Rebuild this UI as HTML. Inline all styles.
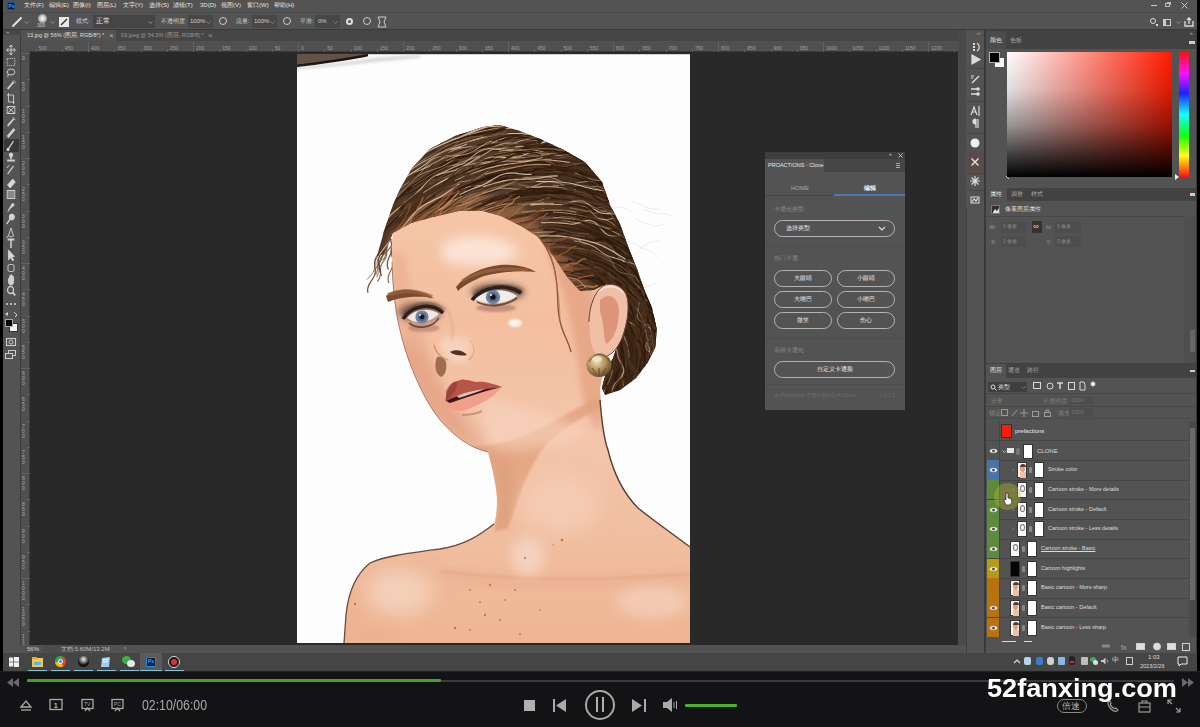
<!DOCTYPE html>
<html><head><meta charset="utf-8">
<style>
*{margin:0;padding:0;box-sizing:border-box}
html,body{width:1200px;height:727px;overflow:hidden;background:#000;font-family:"Liberation Sans",sans-serif;position:relative}
.a{position:absolute}
.t{position:absolute;white-space:nowrap;color:#d8d8d8;font-size:8px;line-height:10px}
</style></head><body>
<div class="a" style="left:3px;top:0px;width:1194px;height:672px;background:#535353;"></div>
<div class="a" style="left:3px;top:0px;width:1194px;height:12px;background:#535353;"></div>
<div class="a" style="left:3px;top:12px;width:1194px;height:1px;background:#4a4a4a;"></div>
<div class="a" style="left:7px;top:2px;width:8px;height:8px;background:#0d1e36;border:1px solid #1f4f80"></div>
<div class="t" style="left:8.5px;top:3px;font-size:5px;line-height:7px;color:#3aa0f0;font-weight:bold;line-height:6px">Ps</div>
<div class="t" style="left:24px;top:1px;font-size:6px;line-height:8px;color:#e6e6e6;">文件(F)</div>
<div class="t" style="left:49px;top:1px;font-size:6px;line-height:8px;color:#e6e6e6;">编辑(E)</div>
<div class="t" style="left:73px;top:1px;font-size:6px;line-height:8px;color:#e6e6e6;">图像(I)</div>
<div class="t" style="left:97px;top:1px;font-size:6px;line-height:8px;color:#e6e6e6;">图层(L)</div>
<div class="t" style="left:123px;top:1px;font-size:6px;line-height:8px;color:#e6e6e6;">文字(Y)</div>
<div class="t" style="left:149px;top:1px;font-size:6px;line-height:8px;color:#e6e6e6;">选择(S)</div>
<div class="t" style="left:173px;top:1px;font-size:6px;line-height:8px;color:#e6e6e6;">滤镜(T)</div>
<div class="t" style="left:200px;top:1px;font-size:6px;line-height:8px;color:#e6e6e6;">3D(D)</div>
<div class="t" style="left:221px;top:1px;font-size:6px;line-height:8px;color:#e6e6e6;">视图(V)</div>
<div class="t" style="left:247px;top:1px;font-size:6px;line-height:8px;color:#e6e6e6;">窗口(W)</div>
<div class="t" style="left:274px;top:1px;font-size:6px;line-height:8px;color:#e6e6e6;">帮助(H)</div>
<div class="a" style="left:1151px;top:5px;width:6px;height:1px;background:#cccccc;"></div>
<div class="a" style="left:1165px;top:3px;width:5px;height:4px;border:1px solid #bbb"></div>
<div class="a" style="left:1167px;top:2px;width:4px;height:3px;border-top:1px solid #bbb;border-right:1px solid #bbb"></div>
<svg class="a" style="left:1181px;top:2px" width="7" height="7"><path d="M0.5 0.5 L6.5 6.5 M6.5 0.5 L0.5 6.5" stroke="#c8c8c8" stroke-width="1"/></svg>
<div class="a" style="left:3px;top:13px;width:1194px;height:16px;background:#535353;"></div>
<div class="a" style="left:3px;top:29px;width:1194px;height:1px;background:#3a3a3a;"></div>
<svg class="a" style="left:11px;top:16px" width="12" height="12"><path d="M2 10 L4 8 L10 2" stroke="#e0e0e0" stroke-width="2" fill="none" stroke-linecap="round"/></svg>
<svg class="a" style="left:24px;top:21px" width="5" height="3"><path d="M0.5 0.5 L2.5 2.5 L4.5 0.5" stroke="#999" fill="none" stroke-width="0.9"/></svg>
<div class="a" style="left:38px;top:14px;width:9px;height:9px;border-radius:50%;background:radial-gradient(circle,#fff 0%,#ccc 40%,#666 100%)"></div>
<div class="t" style="left:37px;top:23px;font-size:5px;line-height:7px;color:#cfcfcf;line-height:5px">300</div>
<svg class="a" style="left:50px;top:21px" width="5" height="3"><path d="M0.5 0.5 L2.5 2.5 L4.5 0.5" stroke="#999" fill="none" stroke-width="0.9"/></svg>
<div class="a" style="left:59px;top:17px;width:10px;height:10px;background:#e8e8e8;"></div>
<svg class="a" style="left:59px;top:17px" width="10" height="10"><path d="M2 8 L8 2" stroke="#333" stroke-width="1.5"/></svg>
<div class="t" style="left:76px;top:17px;font-size:6px;line-height:8px;color:#cfcfcf;">模式:</div>
<div class="a" style="left:93px;top:15px;width:62px;height:13px;background:#454545;"></div>
<div class="t" style="left:96px;top:17px;font-size:6.5px;line-height:8.5px;color:#e8e8e8;">正常</div>
<svg class="a" style="left:148px;top:21px" width="5" height="3"><path d="M0.5 0.5 L2.5 2.5 L4.5 0.5" stroke="#999" fill="none" stroke-width="0.9"/></svg>
<div class="t" style="left:161px;top:17px;font-size:6px;line-height:8px;color:#cfcfcf;">不透明度:</div>
<div class="a" style="left:188px;top:15px;width:25px;height:13px;background:#474747;"></div>
<div class="t" style="left:190px;top:17px;font-size:6px;line-height:8px;color:#cfcfcf;">100%</div>
<svg class="a" style="left:206px;top:21px" width="5" height="3"><path d="M0.5 0.5 L2.5 2.5 L4.5 0.5" stroke="#888" fill="none" stroke-width="0.9"/></svg>
<div class="a" style="left:219px;top:17px;width:8px;height:8px;border-radius:50%;border:1.5px solid #ccc"></div>
<div class="t" style="left:236px;top:17px;font-size:6px;line-height:8px;color:#cfcfcf;">流量:</div>
<div class="a" style="left:252px;top:15px;width:25px;height:13px;background:#474747;"></div>
<div class="t" style="left:254px;top:17px;font-size:6px;line-height:8px;color:#cfcfcf;">100%</div>
<svg class="a" style="left:270px;top:21px" width="5" height="3"><path d="M0.5 0.5 L2.5 2.5 L4.5 0.5" stroke="#888" fill="none" stroke-width="0.9"/></svg>
<div class="a" style="left:283px;top:17px;width:8px;height:8px;border-radius:50%;border:1.5px solid #ccc"></div>
<div class="t" style="left:300px;top:17px;font-size:6px;line-height:8px;color:#cfcfcf;">平滑:</div>
<div class="a" style="left:315px;top:15px;width:25px;height:13px;background:#474747;"></div>
<div class="t" style="left:318px;top:17px;font-size:6px;line-height:8px;color:#cfcfcf;">0%</div>
<svg class="a" style="left:333px;top:21px" width="5" height="3"><path d="M0.5 0.5 L2.5 2.5 L4.5 0.5" stroke="#888" fill="none" stroke-width="0.9"/></svg>
<div class="a" style="left:346px;top:18px;width:7px;height:7px;border-radius:50%;border:2px solid #ddd"></div>
<div class="a" style="left:363px;top:17px;width:8px;height:8px;border-radius:50%;border:1.5px solid #ccc"></div>
<svg class="a" style="left:377px;top:16px" width="10" height="12"><path d="M1 1 L9 1 L7 6 L9 11 L1 11 L3 6Z" stroke="#ccc" stroke-width="1" fill="none"/></svg>
<div class="a" style="left:1150px;top:18px;width:6px;height:6px;border-radius:50%;border:1.5px solid #ddd"></div>
<div class="a" style="left:1156px;top:24px;width:2px;height:2px;background:#ddd;"></div>
<div class="a" style="left:1163px;top:19px;width:8px;height:7px;border:1px solid #ccc;border-left-width:3px"></div>
<svg class="a" style="left:1176px;top:21px" width="5" height="3"><path d="M0.5 0.5 L2.5 2.5 L4.5 0.5" stroke="#888" fill="none" stroke-width="0.9"/></svg>
<svg class="a" style="left:1184px;top:17px" width="10" height="10"><path d="M1 4 L1 9 L9 9 L9 4 M5 7 L5 1 M3 3 L5 1 L7 3" stroke="#ddd" stroke-width="1.3" fill="none"/></svg>
<div class="a" style="left:21px;top:30px;width:937px;height:11px;background:#464646;"></div>
<div class="a" style="left:21px;top:30px;width:95px;height:11px;background:#535353;"></div>
<div class="t" style="left:27px;top:31px;font-size:5.5px;line-height:7.5px;color:#dedede;line-height:9px">13.jpg @ 56% (图层, RGB/8*) *</div>
<div class="t" style="left:109px;top:31px;font-size:8px;line-height:10px;color:#bbb;line-height:9px">×</div>
<div class="t" style="left:121px;top:31px;font-size:5.5px;line-height:7.5px;color:#9a9a9a;line-height:9px">03.jpeg @ 54.3% (图层, RGB/8) *</div>
<div class="t" style="left:208px;top:31px;font-size:8px;line-height:10px;color:#999;line-height:9px">×</div>
<div class="a" style="left:21px;top:41px;width:937px;height:11px;background:#505050;"></div>
<div class="a" style="left:21px;top:51px;width:937px;height:1px;background:#3a3a3a;"></div>
<div class="a" style="left:21px;top:41px;width:9px;height:604px;background:#505050;"></div>
<div class="a" style="left:29px;top:52px;width:1px;height:593px;background:#3a3a3a;"></div>
<div class="a" style="left:35.5px;top:49px;width:1px;height:3px;background:#626262"></div>
<div class="t" style="left:38.5px;top:45px;font-size:5px;line-height:7px;color:#a0a0a0;line-height:6px">500</div>
<div class="a" style="left:40.8px;top:50px;width:1px;height:1px;background:#5a5a5a"></div>
<div class="a" style="left:46.0px;top:50px;width:1px;height:1px;background:#5a5a5a"></div>
<div class="a" style="left:51.2px;top:50px;width:1px;height:1px;background:#5a5a5a"></div>
<div class="a" style="left:56.5px;top:50px;width:1px;height:1px;background:#5a5a5a"></div>
<div class="a" style="left:61.8px;top:49px;width:1px;height:3px;background:#626262"></div>
<div class="t" style="left:64.75px;top:45px;font-size:5px;line-height:7px;color:#a0a0a0;line-height:6px">450</div>
<div class="a" style="left:67.0px;top:50px;width:1px;height:1px;background:#5a5a5a"></div>
<div class="a" style="left:72.2px;top:50px;width:1px;height:1px;background:#5a5a5a"></div>
<div class="a" style="left:77.5px;top:50px;width:1px;height:1px;background:#5a5a5a"></div>
<div class="a" style="left:82.8px;top:50px;width:1px;height:1px;background:#5a5a5a"></div>
<div class="a" style="left:88.0px;top:42px;width:1px;height:10px;background:#626262"></div>
<div class="t" style="left:91.0px;top:45px;font-size:5px;line-height:7px;color:#a0a0a0;line-height:6px">400</div>
<div class="a" style="left:93.2px;top:50px;width:1px;height:1px;background:#5a5a5a"></div>
<div class="a" style="left:98.5px;top:50px;width:1px;height:1px;background:#5a5a5a"></div>
<div class="a" style="left:103.8px;top:50px;width:1px;height:1px;background:#5a5a5a"></div>
<div class="a" style="left:109.0px;top:50px;width:1px;height:1px;background:#5a5a5a"></div>
<div class="a" style="left:114.2px;top:49px;width:1px;height:3px;background:#626262"></div>
<div class="t" style="left:117.25px;top:45px;font-size:5px;line-height:7px;color:#a0a0a0;line-height:6px">350</div>
<div class="a" style="left:119.5px;top:50px;width:1px;height:1px;background:#5a5a5a"></div>
<div class="a" style="left:124.8px;top:50px;width:1px;height:1px;background:#5a5a5a"></div>
<div class="a" style="left:130.0px;top:50px;width:1px;height:1px;background:#5a5a5a"></div>
<div class="a" style="left:135.2px;top:50px;width:1px;height:1px;background:#5a5a5a"></div>
<div class="a" style="left:140.5px;top:49px;width:1px;height:3px;background:#626262"></div>
<div class="t" style="left:143.5px;top:45px;font-size:5px;line-height:7px;color:#a0a0a0;line-height:6px">300</div>
<div class="a" style="left:145.8px;top:50px;width:1px;height:1px;background:#5a5a5a"></div>
<div class="a" style="left:151.0px;top:50px;width:1px;height:1px;background:#5a5a5a"></div>
<div class="a" style="left:156.2px;top:50px;width:1px;height:1px;background:#5a5a5a"></div>
<div class="a" style="left:161.5px;top:50px;width:1px;height:1px;background:#5a5a5a"></div>
<div class="a" style="left:166.8px;top:49px;width:1px;height:3px;background:#626262"></div>
<div class="t" style="left:169.75px;top:45px;font-size:5px;line-height:7px;color:#a0a0a0;line-height:6px">250</div>
<div class="a" style="left:172.0px;top:50px;width:1px;height:1px;background:#5a5a5a"></div>
<div class="a" style="left:177.2px;top:50px;width:1px;height:1px;background:#5a5a5a"></div>
<div class="a" style="left:182.5px;top:50px;width:1px;height:1px;background:#5a5a5a"></div>
<div class="a" style="left:187.8px;top:50px;width:1px;height:1px;background:#5a5a5a"></div>
<div class="a" style="left:193.0px;top:42px;width:1px;height:10px;background:#626262"></div>
<div class="t" style="left:196.0px;top:45px;font-size:5px;line-height:7px;color:#a0a0a0;line-height:6px">200</div>
<div class="a" style="left:198.2px;top:50px;width:1px;height:1px;background:#5a5a5a"></div>
<div class="a" style="left:203.5px;top:50px;width:1px;height:1px;background:#5a5a5a"></div>
<div class="a" style="left:208.8px;top:50px;width:1px;height:1px;background:#5a5a5a"></div>
<div class="a" style="left:214.0px;top:50px;width:1px;height:1px;background:#5a5a5a"></div>
<div class="a" style="left:219.2px;top:49px;width:1px;height:3px;background:#626262"></div>
<div class="t" style="left:222.25px;top:45px;font-size:5px;line-height:7px;color:#a0a0a0;line-height:6px">150</div>
<div class="a" style="left:224.5px;top:50px;width:1px;height:1px;background:#5a5a5a"></div>
<div class="a" style="left:229.8px;top:50px;width:1px;height:1px;background:#5a5a5a"></div>
<div class="a" style="left:235.0px;top:50px;width:1px;height:1px;background:#5a5a5a"></div>
<div class="a" style="left:240.2px;top:50px;width:1px;height:1px;background:#5a5a5a"></div>
<div class="a" style="left:245.5px;top:49px;width:1px;height:3px;background:#626262"></div>
<div class="t" style="left:248.5px;top:45px;font-size:5px;line-height:7px;color:#a0a0a0;line-height:6px">100</div>
<div class="a" style="left:250.8px;top:50px;width:1px;height:1px;background:#5a5a5a"></div>
<div class="a" style="left:256.0px;top:50px;width:1px;height:1px;background:#5a5a5a"></div>
<div class="a" style="left:261.2px;top:50px;width:1px;height:1px;background:#5a5a5a"></div>
<div class="a" style="left:266.5px;top:50px;width:1px;height:1px;background:#5a5a5a"></div>
<div class="a" style="left:271.8px;top:49px;width:1px;height:3px;background:#626262"></div>
<div class="t" style="left:274.75px;top:45px;font-size:5px;line-height:7px;color:#a0a0a0;line-height:6px">50</div>
<div class="a" style="left:277.0px;top:50px;width:1px;height:1px;background:#5a5a5a"></div>
<div class="a" style="left:282.2px;top:50px;width:1px;height:1px;background:#5a5a5a"></div>
<div class="a" style="left:287.5px;top:50px;width:1px;height:1px;background:#5a5a5a"></div>
<div class="a" style="left:292.8px;top:50px;width:1px;height:1px;background:#5a5a5a"></div>
<div class="a" style="left:298.0px;top:42px;width:1px;height:10px;background:#626262"></div>
<div class="t" style="left:301.0px;top:45px;font-size:5px;line-height:7px;color:#a0a0a0;line-height:6px">0</div>
<div class="a" style="left:303.2px;top:50px;width:1px;height:1px;background:#5a5a5a"></div>
<div class="a" style="left:308.5px;top:50px;width:1px;height:1px;background:#5a5a5a"></div>
<div class="a" style="left:313.8px;top:50px;width:1px;height:1px;background:#5a5a5a"></div>
<div class="a" style="left:319.0px;top:50px;width:1px;height:1px;background:#5a5a5a"></div>
<div class="a" style="left:324.2px;top:49px;width:1px;height:3px;background:#626262"></div>
<div class="t" style="left:327.25px;top:45px;font-size:5px;line-height:7px;color:#a0a0a0;line-height:6px">50</div>
<div class="a" style="left:329.5px;top:50px;width:1px;height:1px;background:#5a5a5a"></div>
<div class="a" style="left:334.8px;top:50px;width:1px;height:1px;background:#5a5a5a"></div>
<div class="a" style="left:340.0px;top:50px;width:1px;height:1px;background:#5a5a5a"></div>
<div class="a" style="left:345.2px;top:50px;width:1px;height:1px;background:#5a5a5a"></div>
<div class="a" style="left:350.5px;top:49px;width:1px;height:3px;background:#626262"></div>
<div class="t" style="left:353.5px;top:45px;font-size:5px;line-height:7px;color:#a0a0a0;line-height:6px">100</div>
<div class="a" style="left:355.8px;top:50px;width:1px;height:1px;background:#5a5a5a"></div>
<div class="a" style="left:361.0px;top:50px;width:1px;height:1px;background:#5a5a5a"></div>
<div class="a" style="left:366.2px;top:50px;width:1px;height:1px;background:#5a5a5a"></div>
<div class="a" style="left:371.5px;top:50px;width:1px;height:1px;background:#5a5a5a"></div>
<div class="a" style="left:376.8px;top:49px;width:1px;height:3px;background:#626262"></div>
<div class="t" style="left:379.75px;top:45px;font-size:5px;line-height:7px;color:#a0a0a0;line-height:6px">150</div>
<div class="a" style="left:382.0px;top:50px;width:1px;height:1px;background:#5a5a5a"></div>
<div class="a" style="left:387.2px;top:50px;width:1px;height:1px;background:#5a5a5a"></div>
<div class="a" style="left:392.5px;top:50px;width:1px;height:1px;background:#5a5a5a"></div>
<div class="a" style="left:397.8px;top:50px;width:1px;height:1px;background:#5a5a5a"></div>
<div class="a" style="left:403.0px;top:42px;width:1px;height:10px;background:#626262"></div>
<div class="t" style="left:406.0px;top:45px;font-size:5px;line-height:7px;color:#a0a0a0;line-height:6px">200</div>
<div class="a" style="left:408.2px;top:50px;width:1px;height:1px;background:#5a5a5a"></div>
<div class="a" style="left:413.5px;top:50px;width:1px;height:1px;background:#5a5a5a"></div>
<div class="a" style="left:418.8px;top:50px;width:1px;height:1px;background:#5a5a5a"></div>
<div class="a" style="left:424.0px;top:50px;width:1px;height:1px;background:#5a5a5a"></div>
<div class="a" style="left:429.2px;top:49px;width:1px;height:3px;background:#626262"></div>
<div class="t" style="left:432.25px;top:45px;font-size:5px;line-height:7px;color:#a0a0a0;line-height:6px">250</div>
<div class="a" style="left:434.5px;top:50px;width:1px;height:1px;background:#5a5a5a"></div>
<div class="a" style="left:439.8px;top:50px;width:1px;height:1px;background:#5a5a5a"></div>
<div class="a" style="left:445.0px;top:50px;width:1px;height:1px;background:#5a5a5a"></div>
<div class="a" style="left:450.2px;top:50px;width:1px;height:1px;background:#5a5a5a"></div>
<div class="a" style="left:455.5px;top:49px;width:1px;height:3px;background:#626262"></div>
<div class="t" style="left:458.5px;top:45px;font-size:5px;line-height:7px;color:#a0a0a0;line-height:6px">300</div>
<div class="a" style="left:460.8px;top:50px;width:1px;height:1px;background:#5a5a5a"></div>
<div class="a" style="left:466.0px;top:50px;width:1px;height:1px;background:#5a5a5a"></div>
<div class="a" style="left:471.2px;top:50px;width:1px;height:1px;background:#5a5a5a"></div>
<div class="a" style="left:476.5px;top:50px;width:1px;height:1px;background:#5a5a5a"></div>
<div class="a" style="left:481.8px;top:49px;width:1px;height:3px;background:#626262"></div>
<div class="t" style="left:484.75px;top:45px;font-size:5px;line-height:7px;color:#a0a0a0;line-height:6px">350</div>
<div class="a" style="left:487.0px;top:50px;width:1px;height:1px;background:#5a5a5a"></div>
<div class="a" style="left:492.2px;top:50px;width:1px;height:1px;background:#5a5a5a"></div>
<div class="a" style="left:497.5px;top:50px;width:1px;height:1px;background:#5a5a5a"></div>
<div class="a" style="left:502.8px;top:50px;width:1px;height:1px;background:#5a5a5a"></div>
<div class="a" style="left:508.0px;top:42px;width:1px;height:10px;background:#626262"></div>
<div class="t" style="left:511.0px;top:45px;font-size:5px;line-height:7px;color:#a0a0a0;line-height:6px">400</div>
<div class="a" style="left:513.2px;top:50px;width:1px;height:1px;background:#5a5a5a"></div>
<div class="a" style="left:518.5px;top:50px;width:1px;height:1px;background:#5a5a5a"></div>
<div class="a" style="left:523.8px;top:50px;width:1px;height:1px;background:#5a5a5a"></div>
<div class="a" style="left:529.0px;top:50px;width:1px;height:1px;background:#5a5a5a"></div>
<div class="a" style="left:534.2px;top:49px;width:1px;height:3px;background:#626262"></div>
<div class="t" style="left:537.25px;top:45px;font-size:5px;line-height:7px;color:#a0a0a0;line-height:6px">450</div>
<div class="a" style="left:539.5px;top:50px;width:1px;height:1px;background:#5a5a5a"></div>
<div class="a" style="left:544.8px;top:50px;width:1px;height:1px;background:#5a5a5a"></div>
<div class="a" style="left:550.0px;top:50px;width:1px;height:1px;background:#5a5a5a"></div>
<div class="a" style="left:555.2px;top:50px;width:1px;height:1px;background:#5a5a5a"></div>
<div class="a" style="left:560.5px;top:49px;width:1px;height:3px;background:#626262"></div>
<div class="t" style="left:563.5px;top:45px;font-size:5px;line-height:7px;color:#a0a0a0;line-height:6px">500</div>
<div class="a" style="left:565.8px;top:50px;width:1px;height:1px;background:#5a5a5a"></div>
<div class="a" style="left:571.0px;top:50px;width:1px;height:1px;background:#5a5a5a"></div>
<div class="a" style="left:576.2px;top:50px;width:1px;height:1px;background:#5a5a5a"></div>
<div class="a" style="left:581.5px;top:50px;width:1px;height:1px;background:#5a5a5a"></div>
<div class="a" style="left:586.8px;top:49px;width:1px;height:3px;background:#626262"></div>
<div class="t" style="left:589.75px;top:45px;font-size:5px;line-height:7px;color:#a0a0a0;line-height:6px">550</div>
<div class="a" style="left:592.0px;top:50px;width:1px;height:1px;background:#5a5a5a"></div>
<div class="a" style="left:597.2px;top:50px;width:1px;height:1px;background:#5a5a5a"></div>
<div class="a" style="left:602.5px;top:50px;width:1px;height:1px;background:#5a5a5a"></div>
<div class="a" style="left:607.8px;top:50px;width:1px;height:1px;background:#5a5a5a"></div>
<div class="a" style="left:613.0px;top:42px;width:1px;height:10px;background:#626262"></div>
<div class="t" style="left:616.0px;top:45px;font-size:5px;line-height:7px;color:#a0a0a0;line-height:6px">600</div>
<div class="a" style="left:618.2px;top:50px;width:1px;height:1px;background:#5a5a5a"></div>
<div class="a" style="left:623.5px;top:50px;width:1px;height:1px;background:#5a5a5a"></div>
<div class="a" style="left:628.8px;top:50px;width:1px;height:1px;background:#5a5a5a"></div>
<div class="a" style="left:634.0px;top:50px;width:1px;height:1px;background:#5a5a5a"></div>
<div class="a" style="left:639.2px;top:49px;width:1px;height:3px;background:#626262"></div>
<div class="t" style="left:642.25px;top:45px;font-size:5px;line-height:7px;color:#a0a0a0;line-height:6px">650</div>
<div class="a" style="left:644.5px;top:50px;width:1px;height:1px;background:#5a5a5a"></div>
<div class="a" style="left:649.8px;top:50px;width:1px;height:1px;background:#5a5a5a"></div>
<div class="a" style="left:655.0px;top:50px;width:1px;height:1px;background:#5a5a5a"></div>
<div class="a" style="left:660.2px;top:50px;width:1px;height:1px;background:#5a5a5a"></div>
<div class="a" style="left:665.5px;top:49px;width:1px;height:3px;background:#626262"></div>
<div class="t" style="left:668.5px;top:45px;font-size:5px;line-height:7px;color:#a0a0a0;line-height:6px">700</div>
<div class="a" style="left:670.8px;top:50px;width:1px;height:1px;background:#5a5a5a"></div>
<div class="a" style="left:676.0px;top:50px;width:1px;height:1px;background:#5a5a5a"></div>
<div class="a" style="left:681.2px;top:50px;width:1px;height:1px;background:#5a5a5a"></div>
<div class="a" style="left:686.5px;top:50px;width:1px;height:1px;background:#5a5a5a"></div>
<div class="a" style="left:691.8px;top:49px;width:1px;height:3px;background:#626262"></div>
<div class="t" style="left:694.75px;top:45px;font-size:5px;line-height:7px;color:#a0a0a0;line-height:6px">750</div>
<div class="a" style="left:697.0px;top:50px;width:1px;height:1px;background:#5a5a5a"></div>
<div class="a" style="left:702.2px;top:50px;width:1px;height:1px;background:#5a5a5a"></div>
<div class="a" style="left:707.5px;top:50px;width:1px;height:1px;background:#5a5a5a"></div>
<div class="a" style="left:712.8px;top:50px;width:1px;height:1px;background:#5a5a5a"></div>
<div class="a" style="left:718.0px;top:42px;width:1px;height:10px;background:#626262"></div>
<div class="t" style="left:721.0px;top:45px;font-size:5px;line-height:7px;color:#a0a0a0;line-height:6px">800</div>
<div class="a" style="left:723.2px;top:50px;width:1px;height:1px;background:#5a5a5a"></div>
<div class="a" style="left:728.5px;top:50px;width:1px;height:1px;background:#5a5a5a"></div>
<div class="a" style="left:733.8px;top:50px;width:1px;height:1px;background:#5a5a5a"></div>
<div class="a" style="left:739.0px;top:50px;width:1px;height:1px;background:#5a5a5a"></div>
<div class="a" style="left:744.2px;top:49px;width:1px;height:3px;background:#626262"></div>
<div class="t" style="left:747.25px;top:45px;font-size:5px;line-height:7px;color:#a0a0a0;line-height:6px">850</div>
<div class="a" style="left:749.5px;top:50px;width:1px;height:1px;background:#5a5a5a"></div>
<div class="a" style="left:754.8px;top:50px;width:1px;height:1px;background:#5a5a5a"></div>
<div class="a" style="left:760.0px;top:50px;width:1px;height:1px;background:#5a5a5a"></div>
<div class="a" style="left:765.2px;top:50px;width:1px;height:1px;background:#5a5a5a"></div>
<div class="a" style="left:770.5px;top:49px;width:1px;height:3px;background:#626262"></div>
<div class="t" style="left:773.5px;top:45px;font-size:5px;line-height:7px;color:#a0a0a0;line-height:6px">900</div>
<div class="a" style="left:775.8px;top:50px;width:1px;height:1px;background:#5a5a5a"></div>
<div class="a" style="left:781.0px;top:50px;width:1px;height:1px;background:#5a5a5a"></div>
<div class="a" style="left:786.2px;top:50px;width:1px;height:1px;background:#5a5a5a"></div>
<div class="a" style="left:791.5px;top:50px;width:1px;height:1px;background:#5a5a5a"></div>
<div class="a" style="left:796.8px;top:49px;width:1px;height:3px;background:#626262"></div>
<div class="t" style="left:799.75px;top:45px;font-size:5px;line-height:7px;color:#a0a0a0;line-height:6px">950</div>
<div class="a" style="left:802.0px;top:50px;width:1px;height:1px;background:#5a5a5a"></div>
<div class="a" style="left:807.2px;top:50px;width:1px;height:1px;background:#5a5a5a"></div>
<div class="a" style="left:812.5px;top:50px;width:1px;height:1px;background:#5a5a5a"></div>
<div class="a" style="left:817.8px;top:50px;width:1px;height:1px;background:#5a5a5a"></div>
<div class="a" style="left:823.0px;top:42px;width:1px;height:10px;background:#626262"></div>
<div class="t" style="left:826.0px;top:45px;font-size:5px;line-height:7px;color:#a0a0a0;line-height:6px">1000</div>
<div class="a" style="left:828.2px;top:50px;width:1px;height:1px;background:#5a5a5a"></div>
<div class="a" style="left:833.5px;top:50px;width:1px;height:1px;background:#5a5a5a"></div>
<div class="a" style="left:838.8px;top:50px;width:1px;height:1px;background:#5a5a5a"></div>
<div class="a" style="left:844.0px;top:50px;width:1px;height:1px;background:#5a5a5a"></div>
<div class="a" style="left:849.2px;top:49px;width:1px;height:3px;background:#626262"></div>
<div class="t" style="left:852.25px;top:45px;font-size:5px;line-height:7px;color:#a0a0a0;line-height:6px">1050</div>
<div class="a" style="left:854.5px;top:50px;width:1px;height:1px;background:#5a5a5a"></div>
<div class="a" style="left:859.8px;top:50px;width:1px;height:1px;background:#5a5a5a"></div>
<div class="a" style="left:865.0px;top:50px;width:1px;height:1px;background:#5a5a5a"></div>
<div class="a" style="left:870.2px;top:50px;width:1px;height:1px;background:#5a5a5a"></div>
<div class="a" style="left:875.5px;top:49px;width:1px;height:3px;background:#626262"></div>
<div class="t" style="left:878.5px;top:45px;font-size:5px;line-height:7px;color:#a0a0a0;line-height:6px">1100</div>
<div class="a" style="left:880.8px;top:50px;width:1px;height:1px;background:#5a5a5a"></div>
<div class="a" style="left:886.0px;top:50px;width:1px;height:1px;background:#5a5a5a"></div>
<div class="a" style="left:891.2px;top:50px;width:1px;height:1px;background:#5a5a5a"></div>
<div class="a" style="left:896.5px;top:50px;width:1px;height:1px;background:#5a5a5a"></div>
<div class="a" style="left:901.8px;top:49px;width:1px;height:3px;background:#626262"></div>
<div class="t" style="left:904.75px;top:45px;font-size:5px;line-height:7px;color:#a0a0a0;line-height:6px">1150</div>
<div class="a" style="left:907.0px;top:50px;width:1px;height:1px;background:#5a5a5a"></div>
<div class="a" style="left:912.2px;top:50px;width:1px;height:1px;background:#5a5a5a"></div>
<div class="a" style="left:917.5px;top:50px;width:1px;height:1px;background:#5a5a5a"></div>
<div class="a" style="left:922.8px;top:50px;width:1px;height:1px;background:#5a5a5a"></div>
<div class="a" style="left:928.0px;top:42px;width:1px;height:10px;background:#626262"></div>
<div class="t" style="left:931.0px;top:45px;font-size:5px;line-height:7px;color:#a0a0a0;line-height:6px">1200</div>
<div class="a" style="left:933.2px;top:50px;width:1px;height:1px;background:#5a5a5a"></div>
<div class="a" style="left:938.5px;top:50px;width:1px;height:1px;background:#5a5a5a"></div>
<div class="a" style="left:943.8px;top:50px;width:1px;height:1px;background:#5a5a5a"></div>
<div class="a" style="left:949.0px;top:50px;width:1px;height:1px;background:#5a5a5a"></div>
<div class="a" style="left:954.2px;top:49px;width:1px;height:3px;background:#626262"></div>
<div class="t" style="left:957.25px;top:45px;font-size:5px;line-height:7px;color:#a0a0a0;line-height:6px">1250</div>
<div class="a" style="left:21px;top:53.0px;width:9px;height:1px;background:#626262"></div>
<div class="t" style="left:22px;top:56.0px;font-size:5px;line-height:5px;color:#a8a8a8;width:5px;white-space:normal;word-break:break-all">0</div>
<div class="a" style="left:27px;top:79.2px;width:3px;height:1px;background:#626262"></div>
<div class="t" style="left:22px;top:82.2px;font-size:5px;line-height:5px;color:#a8a8a8;width:5px;white-space:normal;word-break:break-all">50</div>
<div class="a" style="left:27px;top:105.5px;width:3px;height:1px;background:#626262"></div>
<div class="t" style="left:22px;top:108.5px;font-size:5px;line-height:5px;color:#a8a8a8;width:5px;white-space:normal;word-break:break-all">100</div>
<div class="a" style="left:27px;top:131.8px;width:3px;height:1px;background:#626262"></div>
<div class="t" style="left:22px;top:134.8px;font-size:5px;line-height:5px;color:#a8a8a8;width:5px;white-space:normal;word-break:break-all">150</div>
<div class="a" style="left:21px;top:158.0px;width:9px;height:1px;background:#626262"></div>
<div class="t" style="left:22px;top:161.0px;font-size:5px;line-height:5px;color:#a8a8a8;width:5px;white-space:normal;word-break:break-all">200</div>
<div class="a" style="left:27px;top:184.2px;width:3px;height:1px;background:#626262"></div>
<div class="t" style="left:22px;top:187.2px;font-size:5px;line-height:5px;color:#a8a8a8;width:5px;white-space:normal;word-break:break-all">250</div>
<div class="a" style="left:27px;top:210.5px;width:3px;height:1px;background:#626262"></div>
<div class="t" style="left:22px;top:213.5px;font-size:5px;line-height:5px;color:#a8a8a8;width:5px;white-space:normal;word-break:break-all">300</div>
<div class="a" style="left:27px;top:236.8px;width:3px;height:1px;background:#626262"></div>
<div class="t" style="left:22px;top:239.8px;font-size:5px;line-height:5px;color:#a8a8a8;width:5px;white-space:normal;word-break:break-all">350</div>
<div class="a" style="left:21px;top:263.0px;width:9px;height:1px;background:#626262"></div>
<div class="t" style="left:22px;top:266.0px;font-size:5px;line-height:5px;color:#a8a8a8;width:5px;white-space:normal;word-break:break-all">400</div>
<div class="a" style="left:27px;top:289.2px;width:3px;height:1px;background:#626262"></div>
<div class="t" style="left:22px;top:292.2px;font-size:5px;line-height:5px;color:#a8a8a8;width:5px;white-space:normal;word-break:break-all">450</div>
<div class="a" style="left:27px;top:315.5px;width:3px;height:1px;background:#626262"></div>
<div class="t" style="left:22px;top:318.5px;font-size:5px;line-height:5px;color:#a8a8a8;width:5px;white-space:normal;word-break:break-all">500</div>
<div class="a" style="left:27px;top:341.8px;width:3px;height:1px;background:#626262"></div>
<div class="t" style="left:22px;top:344.8px;font-size:5px;line-height:5px;color:#a8a8a8;width:5px;white-space:normal;word-break:break-all">550</div>
<div class="a" style="left:21px;top:368.0px;width:9px;height:1px;background:#626262"></div>
<div class="t" style="left:22px;top:371.0px;font-size:5px;line-height:5px;color:#a8a8a8;width:5px;white-space:normal;word-break:break-all">600</div>
<div class="a" style="left:27px;top:394.2px;width:3px;height:1px;background:#626262"></div>
<div class="t" style="left:22px;top:397.2px;font-size:5px;line-height:5px;color:#a8a8a8;width:5px;white-space:normal;word-break:break-all">650</div>
<div class="a" style="left:27px;top:420.5px;width:3px;height:1px;background:#626262"></div>
<div class="t" style="left:22px;top:423.5px;font-size:5px;line-height:5px;color:#a8a8a8;width:5px;white-space:normal;word-break:break-all">700</div>
<div class="a" style="left:27px;top:446.8px;width:3px;height:1px;background:#626262"></div>
<div class="t" style="left:22px;top:449.8px;font-size:5px;line-height:5px;color:#a8a8a8;width:5px;white-space:normal;word-break:break-all">750</div>
<div class="a" style="left:21px;top:473.0px;width:9px;height:1px;background:#626262"></div>
<div class="t" style="left:22px;top:476.0px;font-size:5px;line-height:5px;color:#a8a8a8;width:5px;white-space:normal;word-break:break-all">800</div>
<div class="a" style="left:27px;top:499.2px;width:3px;height:1px;background:#626262"></div>
<div class="t" style="left:22px;top:502.2px;font-size:5px;line-height:5px;color:#a8a8a8;width:5px;white-space:normal;word-break:break-all">850</div>
<div class="a" style="left:27px;top:525.5px;width:3px;height:1px;background:#626262"></div>
<div class="t" style="left:22px;top:528.5px;font-size:5px;line-height:5px;color:#a8a8a8;width:5px;white-space:normal;word-break:break-all">900</div>
<div class="a" style="left:27px;top:551.8px;width:3px;height:1px;background:#626262"></div>
<div class="t" style="left:22px;top:554.8px;font-size:5px;line-height:5px;color:#a8a8a8;width:5px;white-space:normal;word-break:break-all">950</div>
<div class="a" style="left:21px;top:578.0px;width:9px;height:1px;background:#626262"></div>
<div class="t" style="left:22px;top:581.0px;font-size:5px;line-height:5px;color:#a8a8a8;width:5px;white-space:normal;word-break:break-all">1000</div>
<div class="a" style="left:27px;top:604.2px;width:3px;height:1px;background:#626262"></div>
<div class="t" style="left:22px;top:607.2px;font-size:5px;line-height:5px;color:#a8a8a8;width:5px;white-space:normal;word-break:break-all">1050</div>
<div class="a" style="left:27px;top:630.5px;width:3px;height:1px;background:#626262"></div>
<div class="t" style="left:22px;top:633.5px;font-size:5px;line-height:5px;color:#a8a8a8;width:5px;white-space:normal;word-break:break-all">1100</div>
<div class="a" style="left:30px;top:52px;width:928px;height:593px;background:#292929;"></div>
<svg class="a" style="left:297px;top:53px" width="393" height="590" viewBox="297 53 393 590">
<defs>
 <linearGradient id="skinG" x1="0" y1="0" x2="0" y2="1">
  <stop offset="0" stop-color="#f6c7a9"/>
  <stop offset="0.3" stop-color="#f3bf9f"/>
  <stop offset="0.55" stop-color="#f3c6ac"/>
  <stop offset="1" stop-color="#eeb593"/>
 </linearGradient>
 <radialGradient id="hairG" cx="0.35" cy="0.3" r="0.8">
  <stop offset="0" stop-color="#5e4230"/>
  <stop offset="0.55" stop-color="#4a3020"/>
  <stop offset="1" stop-color="#36200f"/>
 </radialGradient>
 <radialGradient id="ringG" cx="0.4" cy="0.35" r="0.7">
  <stop offset="0" stop-color="#efe2bc"/>
  <stop offset="0.5" stop-color="#b89460"/>
  <stop offset="1" stop-color="#5a4428"/>
 </radialGradient>
 <clipPath id="hairClip"><path d="M377.0 256.0 L381.0 242.0 L386.0 225.0 L393.0 205.0 L400.0 189.0 L412.0 168.0 L430.0 149.0 L455.0 136.0 L483.0 127.0 L500.0 125.0 L520.0 131.0 L540.0 139.0 L562.0 149.0 L585.0 162.0 L602.0 182.0 L610.0 205.0 L620.0 224.0 L629.0 249.0 L637.0 269.0 L644.0 289.0 L652.0 308.0 L657.0 330.0 L655.0 348.0 L648.0 362.0 L636.0 378.0 L620.0 390.0 L605.0 395.0 L602.0 388.0 L606.0 372.0 L613.0 358.0 L621.0 335.0 L627.0 305.0 L621.0 289.0 L606.0 284.0 L594.0 290.0 L580.0 291.0 L568.0 278.0 L556.0 260.0 L540.0 238.0 L521.0 226.0 L501.0 216.0 L483.0 211.0 L459.0 211.0 L433.0 217.0 L411.0 223.0 L393.0 233.0 L388.0 245.0 L384.0 254.0 Z"/></clipPath>
 <clipPath id="skinClip"><path d="M392 240 L392 268 C393 300 398 330 409 361 C418 385 428 405 440 420 C455 437 470 448 488 452 C493 470 497 490 497 500 C497 510 496 518 494 524 C480 535 465 545 440 549 C410 553 385 556 370 563 C355 575 348 595 346 615 L344 643 L690 643 L690 547 C670 532 650 518 638 508 C625 495 614 475 608 450 C604 430 601 415 600 388 L606 360 L612 330 L615 300 L610 270 L590 240 L560 210 L510 190 L470 185 L430 195 L398 215 Z"/></clipPath>
 <filter id="bl05" x="-20%" y="-20%" width="140%" height="140%"><feGaussianBlur stdDeviation="0.5"/></filter>
 <filter id="bl1" x="-20%" y="-20%" width="140%" height="140%"><feGaussianBlur stdDeviation="1"/></filter>
 <filter id="bl3" x="-50%" y="-50%" width="200%" height="200%"><feGaussianBlur stdDeviation="3"/></filter>
 <filter id="bl6" x="-50%" y="-50%" width="200%" height="200%"><feGaussianBlur stdDeviation="6"/></filter>
 <filter id="bl10" x="-50%" y="-50%" width="200%" height="200%"><feGaussianBlur stdDeviation="10"/></filter>
</defs>
<rect x="297" y="53" width="393" height="590" fill="#fdfdfd"/>
<rect x="297" y="53" width="393" height="1.2" fill="#2a2a2a"/>
<path d="M297 54 L368 54 L345 59.5 L297 66 Z" fill="#625248"/>
<path d="M297 66 C320 63 345 60 368 55" fill="none" stroke="#1a1412" stroke-width="2.6"/>
<path d="M297 67 C330 64 350 62 375 57 L420 55 L420 58 C380 62 340 66 297 70Z" fill="#b8b8b8" opacity="0.45" filter="url(#bl1)"/>
<path d="M386.9 243.7 L385.5 247.3 L382.7 250.8 L379.3 254.4 L376.6 258.0 L375.2 261.6 L374.9 265.2 L374.5 268.8 L373.1 272.4 L370.3 276.0 L366.9 279.5" fill="none" stroke="#7a5a40" stroke-width="0.93" opacity="0.85"/>
<path d="M387.7 245.6 L387.0 249.3 L387.0 253.0 L386.5 256.7 L384.7 260.3 L381.7 264.0 L378.7 267.7 L376.6 271.4 L375.9 275.0" fill="none" stroke="#7a5a40" stroke-width="0.86" opacity="0.85"/>
<path d="M391.5 247.4 L390.9 251.4 L391.6 255.4 L392.8 259.4 L393.2 263.3 L392.3 267.3 L390.4 271.3 L388.6 275.3 L388.0 279.2 L388.8 283.2" fill="none" stroke="#7a5a40" stroke-width="1.24" opacity="0.85"/>
<path d="M391.8 229.8 L390.3 233.7 L390.1 237.7 L391.1 241.7 L392.2 245.7 L392.3 249.7 L390.9 253.6 L388.9 257.6 L387.5 261.6 L387.3 265.6 L388.3 269.6" fill="none" stroke="#5a3e2a" stroke-width="1.34" opacity="0.85"/>
<path d="M385.2 244.5 L386.2 248.5 L386.6 252.4 L385.8 256.4 L383.7 260.3 L381.6 264.3 L380.4 268.2 L380.7 272.2 L381.6 276.1" fill="none" stroke="#4a3020" stroke-width="0.80" opacity="0.85"/>
<path d="M382.1 246.3 L380.6 250.2 L378.1 254.1 L375.8 258.0 L374.6 261.8 L374.7 265.7 L375.3 269.6 L375.2 273.5 L373.6 277.3 L371.1 281.2 L368.8 285.1 L367.6 289.0 L367.8 292.8" fill="none" stroke="#5a3e2a" stroke-width="1.30" opacity="0.85"/>
<path d="M385.1 234.4 L385.0 238.3 L385.7 242.3 L386.2 246.2 L385.4 250.1 L383.3 254.0 L380.9 257.9 L379.4 261.9 L379.3 265.8 L380.1 269.7 L380.5 273.6 L379.7 277.5 L377.6 281.4" fill="none" stroke="#5a3e2a" stroke-width="1.08" opacity="0.85"/>
<path d="M392.0 238.8 L388.9 242.4 L387.0 245.9 L386.3 249.5 L386.1 253.1 L385.0 256.6 L382.6 260.2" fill="none" stroke="#7a5a40" stroke-width="0.95" opacity="0.85"/>
<path d="M392.8 241.2 L391.9 244.7 L389.7 248.3 L386.4 251.8 L383.1 255.3 L381.0 258.9 L380.2 262.4" fill="none" stroke="#7a5a40" stroke-width="1.34" opacity="0.85"/>
<path d="M384.5 230.4 L383.3 234.3 L383.4 238.2 L384.1 242.1 L384.2 246.1 L383.0 250.0 L380.7 253.9 L378.4 257.8 L377.1 261.7 L377.3 265.6 L378.0 269.5 L378.1 273.4 L376.8 277.3" fill="none" stroke="#5a3e2a" stroke-width="0.89" opacity="0.85"/>
<path d="M390.2 228.3 L389.2 232.2 L387.0 236.0 L384.3 239.9 L382.4 243.7 L381.9 247.6 L382.4 251.4 L382.6 255.3 L381.7 259.1 L379.4 263.0 L376.7 266.8 L374.9 270.7" fill="none" stroke="#7a5a40" stroke-width="1.11" opacity="0.85"/>
<path d="M383.5 248.5 L381.7 252.5 L379.6 256.4 L378.3 260.4 L378.5 264.3 L379.5 268.3 L380.1 272.3" fill="none" stroke="#4a3020" stroke-width="1.09" opacity="0.85"/>
<path d="M610.6 219.7 L613.7 223.6 L617.4 227.0 L619.8 231.4 L623.2 235.1 L626.8 238.5 L629.4 242.8" fill="none" stroke="#9a8270" stroke-width="0.6" opacity="0.25"/>
<path d="M632.1 201.0 L636.6 203.2 L641.4 204.6 L645.8 206.9 L650.5 208.6 L655.5 209.5 L660.4 208.7" fill="none" stroke="#9a8270" stroke-width="0.6" opacity="0.25"/>
<path d="M604.5 254.1 L609.5 254.0 L614.5 253.5 L619.4 252.7 L624.3 253.7 L629.2 254.7 L634.0 256.0" fill="none" stroke="#9a8270" stroke-width="0.6" opacity="0.25"/>
<path d="M643.3 210.1 L648.3 210.8 L652.9 212.7 L657.8 213.7 L662.8 213.4 L667.7 214.1 L672.2 216.4" fill="none" stroke="#9a8270" stroke-width="0.6" opacity="0.25"/>
<path d="M609.8 294.5 L613.8 297.6 L617.9 300.4 L622.7 301.7 L627.7 301.3 L632.5 302.7 L637.5 303.0" fill="none" stroke="#9a8270" stroke-width="0.6" opacity="0.25"/>
<path d="M635.2 218.3 L639.4 221.1 L643.9 223.1 L648.9 223.9 L653.6 225.6 L658.6 225.6 L663.5 224.5" fill="none" stroke="#9a8270" stroke-width="0.6" opacity="0.25"/>
<path d="M628.0 283.8 L632.9 284.4 L637.4 286.5 L642.3 287.6 L647.2 286.8 L651.9 285.0 L656.5 283.1" fill="none" stroke="#9a8270" stroke-width="0.6" opacity="0.25"/>
<path d="M603.0 209.4 L608.0 209.9 L612.9 208.9 L617.7 207.3 L622.7 207.4 L627.3 209.2 L631.6 211.7" fill="none" stroke="#9a8270" stroke-width="0.6" opacity="0.25"/>
<path d="M634.6 254.3 L638.8 251.6 L641.6 247.5 L645.7 244.5 L650.1 242.3 L655.1 241.8 L659.5 239.4" fill="none" stroke="#9a8270" stroke-width="0.6" opacity="0.25"/>
<path d="M631.8 243.0 L636.6 244.4 L640.5 247.5 L645.3 249.1 L649.9 250.9 L654.2 253.6 L657.4 257.4" fill="none" stroke="#9a8270" stroke-width="0.6" opacity="0.25"/>
<path d="M392 240 L392 268 C393 300 398 330 409 361 C418 385 428 405 440 420 C455 437 470 448 488 452 C493 470 497 490 497 500 C497 510 496 518 494 524 C480 535 465 545 440 549 C410 553 385 556 370 563 C355 575 348 595 346 615 L344 643 L690 643 L690 547 C670 532 650 518 638 508 C625 495 614 475 608 450 C604 430 601 415 600 388 L606 360 L612 330 L615 300 L610 270 L590 240 L560 210 L510 190 L470 185 L430 195 L398 215 Z" fill="url(#skinG)"/>
<g clip-path="url(#skinClip)">
<path d="M392 250 L394 300 L400 330 L409 361 L430 407 L455 434 L470 446 L450 400 L428 350 L412 300 L405 255Z" fill="#e6a88a" filter="url(#bl3)" opacity="0.55"/>
<path d="M545 250 C565 290 575 330 580 380 C582 400 588 420 600 430 L606 395 L600 330 L590 280 Z" fill="#e09c7c" filter="url(#bl3)" opacity="0.65"/>
<path d="M470 446 C495 448 530 436 560 418 L600 396 L604 406 C590 412 565 428 548 442 C535 458 524 480 516 505 L508 528 L495 532 L497 500 L492 470 Z" fill="#e2a27c" filter="url(#bl1)" opacity="0.8"/>
<path d="M440 571 C520 582 600 580 690 574" fill="none" stroke="#d89272" stroke-width="2.5" opacity="0.35" filter="url(#bl1)"/>
<path d="M488 455 C500 480 505 510 497 532 C512 522 518 492 510 462Z" fill="#d89878" filter="url(#bl3)" opacity="0.4"/>
<path d="M345 643 L348 605 L356 582 L372 563 L400 556 L440 556 L420 575 L400 600 L390 643 Z" fill="#eaae8e" filter="url(#bl6)" opacity="0.4"/>
<ellipse cx="398" cy="592" rx="34" ry="24" fill="#f6d4c0" filter="url(#bl10)" opacity="0.85"/>
<path d="M440 572 C500 586 560 588 690 576" fill="none" stroke="#e2a282" stroke-width="8" filter="url(#bl6)" opacity="0.45"/>
<ellipse cx="528" cy="556" rx="17" ry="20" fill="#f8e0d4" filter="url(#bl6)" opacity="0.6"/>
<ellipse cx="652" cy="602" rx="36" ry="16" fill="#f4d2be" filter="url(#bl6)" opacity="0.7"/>
<ellipse cx="560" cy="505" rx="40" ry="30" fill="#f6d2bc" filter="url(#bl10)" opacity="0.6"/>
<path d="M440 245 C460 232 500 232 520 250 C515 266 480 270 445 262Z" fill="#fce6da" filter="url(#bl6)" opacity="0.9"/>
<path d="M440 340 C460 335 470 345 468 362 C455 365 440 358 440 340Z" fill="#f8d8c4" filter="url(#bl3)" opacity="0.8"/>
<path d="M480 400 C510 400 560 420 590 430 C570 445 520 455 490 445Z" fill="#f8d4c0" filter="url(#bl6)" opacity="0.6"/>
<path d="M380 330 C395 360 410 400 440 430 L470 446 L490 452 L470 420 L440 390 L420 350 Z" fill="#e09a7a" filter="url(#bl6)" opacity="0.5"/>
</g>
<path d="M392 262 C393 300 398 330 409 361 C418 385 428 405 440 420 C455 437 470 448 488 452" fill="none" stroke="#8a6050" stroke-width="1" opacity="0.7"/>
<path d="M494 524 C480 535 465 545 440 549 C410 553 385 556 370 563 C355 575 348 595 346 615 L344 643" fill="none" stroke="#6a4a3a" stroke-width="1.3"/>
<path d="M600 400 C602 425 604 440 608 450 C614 475 625 495 638 508 C650 518 670 532 690 547" fill="none" stroke="#5a3e30" stroke-width="1.4"/>
<path d="M377.0 256.0 L381.0 242.0 L386.0 225.0 L393.0 205.0 L400.0 189.0 L412.0 168.0 L430.0 149.0 L455.0 136.0 L483.0 127.0 L500.0 125.0 L520.0 131.0 L540.0 139.0 L562.0 149.0 L585.0 162.0 L602.0 182.0 L610.0 205.0 L620.0 224.0 L629.0 249.0 L637.0 269.0 L644.0 289.0 L652.0 308.0 L657.0 330.0 L655.0 348.0 L648.0 362.0 L636.0 378.0 L620.0 390.0 L605.0 395.0 L602.0 388.0 L606.0 372.0 L613.0 358.0 L621.0 335.0 L627.0 305.0 L621.0 289.0 L606.0 284.0 L594.0 290.0 L580.0 291.0 L568.0 278.0 L556.0 260.0 L540.0 238.0 L521.0 226.0 L501.0 216.0 L483.0 211.0 L459.0 211.0 L433.0 217.0 L411.0 223.0 L393.0 233.0 L388.0 245.0 L384.0 254.0 Z" fill="url(#hairG)"/>
<g clip-path="url(#hairClip)">
<path d="M607 394 L602 388 L612 360 L622 330 L627 300 L644 289 L652 308 L657 330 L654 350 L639 371 L622 386Z" fill="#3e2616"/>
<path d="M580 170 L625 230 L643 283 L627 303 L600 270 L570 220Z" fill="#3e2818" opacity="0.6" filter="url(#bl6)"/>
<path d="M386 252 L398 228 L438 215 L486 212 L541 237 L568 278 L594 290 L560 250 L520 205 L470 190 L420 200Z" fill="#a87450" filter="url(#bl3)" opacity="0.6"/>
<path d="M624.2 336.9 L625.3 339.7 L626.3 342.5 L627.2 345.4 L627.9 348.3 L628.5 351.2 L628.9 354.2 L629.1 357.2 L629.2 360.2 L628.4 363.2 L626.8 366.2 L624.9 369.1 L623.3 371.9 L622.4 374.8 L622.3 377.9 L622.8 381.1 L623.5 384.5 L623.8 387.8 L623.3 390.9 L621.8 393.5 L619.5 395.6 L616.5 397.3 L613.4 398.8 L610.7 400.5 L608.5 402.6" fill="none" stroke="#d8bc9c" stroke-width="1.04" stroke-linecap="round" opacity="0.73"/>
<path d="M548.2 226.2 L551.2 226.2 L554.2 226.3 L557.2 226.4 L560.2 226.6 L563.2 226.9 L566.1 227.2 L569.1 227.6 L572.1 228.1 L575.0 228.6 L578.0 229.2 L580.9 229.9 L583.8 230.7 L586.6 231.7 L589.4 232.8 L592.2 234.0 L595.0 235.2 L597.8 236.3 L600.6 237.2 L603.5 238.2 L606.4 239.1 L609.2 240.0 L612.1 241.0 L614.8 242.2 L617.5 243.6 L620.0 245.2 L622.4 247.0 L624.8 248.9 L627.1 250.9 L629.4 252.8 L631.7 254.7 L634.1 256.5 L636.6 258.3 L639.0 260.0" fill="none" stroke="#4a301c" stroke-width="2.17" stroke-linecap="round" opacity="0.63"/>
<path d="M548.9 178.4 L551.9 178.5 L554.9 178.6 L557.9 178.8 L560.9 179.1 L563.9 179.4 L566.9 179.7 L569.8 180.7 L572.6 182.3 L575.3 184.3 L578.1 186.3 L580.8 188.0 L583.6 189.3 L586.5 189.9 L589.6 190.0 L592.8 189.5 L596.1 188.8 L599.4 188.1 L602.7 187.8" fill="none" stroke="#4a301c" stroke-width="1.62" stroke-linecap="round" opacity="0.91"/>
<path d="M522.4 212.4 L525.3 211.9 L528.3 211.5 L531.3 211.2 L534.3 210.9 L537.3 210.6 L540.3 210.5 L543.3 210.3 L546.3 210.1 L549.3 210.1 L552.3 210.1 L555.3 210.1 L558.3 210.2 L561.3 210.4 L564.2 210.6 L567.2 210.9 L570.2 211.3 L573.2 211.7 L576.1 212.2" fill="none" stroke="#b08c68" stroke-width="1.19" stroke-linecap="round" opacity="0.85"/>
<path d="M433.1 194.5 L435.7 192.9 L438.2 191.4 L440.8 189.8 L443.4 188.4 L446.0 186.9 L448.7 185.5 L451.4 184.1 L454.0 182.8 L456.8 181.6 L459.6 180.4 L462.4 179.4 L465.3 178.5 L468.1 177.6 L471.0 176.7 L473.9 175.8 L476.7 174.8 L479.6 173.8 L482.4 172.7 L485.1 171.6 L487.9 170.5 L490.7 169.4 L493.5 168.3 L496.4 167.3 L499.2 166.4" fill="none" stroke="#4a301c" stroke-width="2.17" stroke-linecap="round" opacity="0.94"/>
<path d="M489.0 148.2 L491.9 147.5 L494.9 146.9 L497.8 146.3 L500.7 145.7 L503.7 145.2 L506.7 144.9 L509.8 145.0 L512.8 145.3 L515.9 145.8 L519.0 146.3 L522.1 146.7 L525.1 147.0 L528.1 147.0 L531.1 146.8 L534.1 146.3" fill="none" stroke="#2a180c" stroke-width="1.80" stroke-linecap="round" opacity="0.71"/>
<path d="M430.2 170.0 L432.8 168.5 L435.4 167.1 L438.1 165.7 L440.8 164.4 L443.5 163.0 L446.2 161.8 L449.0 160.7 L451.9 159.7 L454.7 158.8 L457.6 157.9 L460.5 157.0 L463.3 156.1 L466.2 155.1 L469.0 154.1 L471.8 153.0" fill="none" stroke="#4a301c" stroke-width="1.92" stroke-linecap="round" opacity="0.88"/>
<path d="M635.9 294.5 L637.7 297.0 L639.4 299.4 L641.0 302.0 L642.5 304.5 L644.0 307.1 L645.4 309.8 L646.8 312.4 L648.2 315.1 L649.6 317.8 L650.8 320.5 L651.8 323.4 L652.6 326.2 L653.2 329.2 L653.8 332.1 L654.3 335.1 L654.8 338.1 L655.3 341.0 L655.8 344.0 L656.2 346.9" fill="none" stroke="#3e2818" stroke-width="1.75" stroke-linecap="round" opacity="0.61"/>
<path d="M549.1 183.3 L552.1 183.4 L555.0 183.6 L558.0 183.8 L561.0 184.0 L564.0 184.3 L567.0 184.6 L570.0 185.0 L572.9 185.5 L575.8 186.6 L578.6 188.4 L581.2 190.5 L583.9 192.6 L586.5 194.4 L589.3 195.6 L592.3 196.2 L595.4 196.2 L598.6 195.8 L602.0 195.1 L605.3 194.7 L608.5 194.6 L611.5 195.2 L614.2 196.6 L616.6 198.6 L618.8 201.1" fill="none" stroke="#4a301c" stroke-width="1.63" stroke-linecap="round" opacity="0.67"/>
<path d="M598.4 311.8 L600.7 313.8 L602.9 315.8 L605.0 318.0 L607.0 320.2 L609.0 322.5 L610.8 324.9 L612.5 327.3 L614.1 329.8 L615.6 332.4 L617.1 335.1 L618.4 337.8 L619.5 340.5 L621.7 342.9 L624.5 345.0 L627.5 347.2 L629.8 349.7 L631.2 352.5 L631.2 355.5 L630.1 358.6 L628.2 361.8 L626.3 364.8 L624.8 367.7 L624.2 370.7 L624.6 373.8 L625.7 377.0 L627.0 380.5 L627.9 383.9 L627.8 387.0 L626.6 389.8 L624.2 392.0 L621.1 393.7 L617.8 395.3 L614.9 397.0 L612.6 399.1 L611.2 401.8 L610.4 405.0 L609.8 408.6" fill="none" stroke="#2e1c10" stroke-width="2.37" stroke-linecap="round" opacity="0.79"/>
<path d="M563.3 203.8 L566.3 204.1 L569.3 204.5 L572.3 205.0 L575.2 205.5 L578.2 206.0 L581.1 206.6 L584.0 207.3 L586.9 208.0 L589.8 208.8 L592.7 209.7 L595.6 210.6 L598.4 211.5 L601.0 213.3 L603.3 215.7 L605.5 218.4 L607.7 220.9 L610.1 223.0 L612.8 224.3 L615.9 224.9 L619.2 224.9 L622.6 224.8 L626.0 224.8 L629.2 225.4 L631.8 226.8 L634.0 228.9 L635.8 231.7 L637.3 234.9 L638.7 237.9 L640.5 240.6 L642.6 242.7 L645.3 244.2 L648.5 245.1 L651.8 245.9 L655.2 246.7 L658.2 247.9 L660.6 249.7 L662.3 252.2" fill="none" stroke="#3e2818" stroke-width="1.48" stroke-linecap="round" opacity="0.75"/>
<path d="M470.9 141.0 L473.8 140.1 L476.7 139.3 L479.6 138.5 L482.5 137.7 L485.4 137.0 L488.3 136.3 L491.2 135.7 L494.2 135.1 L497.1 134.5 L500.1 134.1 L503.1 133.8 L506.1 133.7 L509.1 133.7 L512.2 133.7 L515.2 133.7 L518.2 133.6 L521.2 133.4 L524.2 133.2 L527.2 132.8 L530.1 132.3 L533.1 131.7 L536.1 131.2 L539.1 130.7 L542.1 130.2 L545.1 130.0 L548.1 129.9 L551.1 129.9" fill="none" stroke="#d8bc9c" stroke-width="1.30" stroke-linecap="round" opacity="0.92"/>
<path d="M562.8 238.1 L565.8 238.4 L568.8 238.8 L571.7 239.3 L574.7 239.8 L577.6 240.5 L580.5 241.1 L583.5 241.9 L586.3 242.7 L589.2 243.6 L591.8 245.2 L594.3 247.4 L596.5 249.9 L598.8 252.3 L601.2 254.3 L603.8 255.8 L606.7 256.7 L609.9 257.1 L613.2 257.3 L616.6 257.5 L619.7 258.2 L622.5 259.4 L624.9 261.3 L626.7 263.8 L628.2 266.7 L629.6 269.8 L631.0 272.8 L632.7 275.4 L634.8 277.5" fill="none" stroke="#4e3420" stroke-width="2.18" stroke-linecap="round" opacity="0.80"/>
<path d="M612.7 350.3 L613.4 353.2 L613.8 356.2 L614.0 359.2 L614.1 362.2 L614.0 365.2 L613.7 368.1 L612.4 371.0 L610.2 373.7 L607.7 376.2 L605.3 378.6 L603.6 381.1 L602.5 384.0 L602.1 387.2 L602.0 390.7 L601.7 394.2 L600.9 397.4 L599.2 399.9 L596.7 401.6 L593.5 402.5" fill="none" stroke="#4e3420" stroke-width="1.70" stroke-linecap="round" opacity="0.74"/>
<path d="M581.1 227.7 L584.1 228.4 L587.0 229.2 L589.8 230.1 L592.7 231.0 L595.5 232.0 L598.3 233.0 L601.1 234.1 L603.9 235.2 L606.7 236.4 L609.4 237.6 L612.1 238.8 L614.8 240.2 L617.5 241.6 L620.1 243.1 L622.6 244.7 L625.2 246.3 L627.6 248.0 L630.1 249.7 L632.5 251.5 L634.9 253.3 L637.3 255.1" fill="none" stroke="#2a180c" stroke-width="2.31" stroke-linecap="round" opacity="0.92"/>
<path d="M500.3 157.8 L503.2 157.2 L506.2 156.7 L509.1 156.2 L512.1 155.7 L515.1 155.3 L518.0 154.9 L521.0 154.6 L524.0 154.3 L526.9 153.6 L529.9 152.6 L532.8 151.4 L535.7 150.0 L538.7 148.7 L541.7 147.7 L544.6 147.0 L547.7 146.6 L550.6 146.8 L553.6 147.4 L556.6 148.4 L559.5 149.7 L562.4 151.1 L565.3 152.5 L568.2 153.7 L571.1 154.7" fill="none" stroke="#2a180c" stroke-width="1.98" stroke-linecap="round" opacity="0.94"/>
<path d="M552.8 187.8 L555.8 188.0 L558.8 188.2 L561.8 188.4 L564.8 188.7 L567.8 189.1 L570.7 189.5 L573.7 189.9 L576.7 190.4 L579.6 191.0 L582.6 191.6 L585.5 192.2 L588.4 192.8 L591.3 193.6 L594.2 194.3 L597.1 195.1 L600.0 196.0 L602.8 196.9 L605.7 197.9 L608.5 198.9 L611.3 200.0 L614.1 201.1 L616.9 202.3 L619.6 203.5 L622.3 204.8 L625.0 206.1 L627.7 207.4 L630.3 208.9" fill="none" stroke="#4a301c" stroke-width="2.19" stroke-linecap="round" opacity="0.82"/>
<path d="M603.6 259.7 L606.3 261.1 L608.9 262.6 L611.4 264.1 L614.0 265.7 L616.4 267.4 L618.9 269.2 L621.8 270.3 L625.0 271.0 L628.4 271.6 L631.4 272.7 L634.0 274.3 L636.0 276.6 L637.3 279.5 L638.2 282.7 L639.1 286.0 L640.2 288.9 L641.9 291.4 L644.2 293.5 L646.9 295.2" fill="none" stroke="#4a301c" stroke-width="1.19" stroke-linecap="round" opacity="0.92"/>
<path d="M534.8 219.5 L537.8 219.2 L540.8 219.0 L543.8 218.9 L546.8 218.8 L549.8 218.8 L552.8 218.9 L555.8 219.0 L558.8 219.4 L561.8 219.9 L564.7 220.5 L567.7 221.1 L570.6 221.7 L573.6 222.2 L576.6 222.6 L579.5 223.0 L582.5 223.3 L585.6 223.7 L588.5 224.1 L591.5 224.6" fill="none" stroke="#d8bc9c" stroke-width="0.74" stroke-linecap="round" opacity="0.87"/>
<path d="M400.6 169.6 L403.0 167.9 L405.5 166.2 L408.0 164.5 L410.6 162.9 L413.1 161.3 L415.7 159.8 L418.3 158.3 L420.9 156.8 L423.5 155.3 L426.1 153.9 L428.8 152.5 L431.5 151.2 L434.0 149.5 L436.4 147.7 L438.8 145.7 L441.2 143.7 L443.6 141.6 L446.0 139.7 L448.6 138.1 L451.2 136.7 L454.0 135.6 L456.9 134.8 L460.0 134.3 L463.0 134.1 L466.2 133.9 L469.3 133.8 L472.4 133.7 L475.4 133.3 L478.4 132.8 L481.3 132.0 L484.1 130.9 L486.9 129.7 L489.6 128.2 L492.4 126.7 L495.1 125.3 L497.9 124.0" fill="none" stroke="#2a180c" stroke-width="1.61" stroke-linecap="round" opacity="0.93"/>
<path d="M504.3 228.2 L507.2 227.3 L510.1 226.4 L512.9 225.6 L515.9 224.9 L518.8 224.2 L521.7 223.6 L524.7 223.1 L527.6 222.6 L530.6 222.2 L533.6 221.8 L536.6 221.5 L539.5 221.1 L542.5 220.6 L545.5 220.1 L548.5 219.5 L551.5 219.1 L554.5 218.8 L557.5 218.8 L560.5 218.9 L563.5 219.2 L566.4 219.8 L569.4 220.5 L572.3 221.3 L575.2 222.1 L578.1 223.0 L581.0 223.7 L583.9 224.4 L586.8 225.1 L589.8 225.6 L592.8 226.1 L595.8 226.6 L598.7 227.2 L601.7 227.9 L604.5 228.8" fill="none" stroke="#7a5a40" stroke-width="1.04" stroke-linecap="round" opacity="0.72"/>
<path d="M587.9 249.6 L590.7 250.5 L593.5 251.6 L596.3 252.7 L599.1 253.9 L601.8 255.2 L604.2 257.0 L606.4 259.4 L608.5 261.9 L610.5 264.4 L612.7 266.5 L615.3 268.1 L618.1 269.3 L621.2 270.1 L624.4 270.9 L627.4 271.9" fill="none" stroke="#4a301c" stroke-width="1.67" stroke-linecap="round" opacity="0.67"/>
<path d="M398.3 220.8 L400.5 218.7 L402.7 216.7 L404.9 214.6 L407.2 212.7 L409.5 210.7 L411.8 208.8 L414.1 206.9 L416.5 205.0 L418.8 203.2 L421.2 201.4 L423.7 199.7 L426.2 198.0 L428.8 196.5 L431.3 194.9 L434.0 193.4 L436.6 192.0 L439.2 190.5 L441.8 189.0 L444.4 187.5 L447.0 186.0 L449.6 184.4 L452.1 182.9 L454.7 181.4 L457.3 179.9 L460.0 178.5 L462.7 177.1 L465.4 175.9 L468.2 174.7 L471.0 173.7 L473.8 172.7 L476.7 171.8" fill="none" stroke="#2a180c" stroke-width="1.11" stroke-linecap="round" opacity="0.63"/>
<path d="M454.3 191.4 L457.0 190.0 L459.7 188.7 L462.4 187.4 L465.2 186.2 L467.9 185.0 L470.7 183.9 L473.5 182.8 L476.3 181.7 L479.1 180.8 L482.0 179.9 L484.9 179.2 L487.9 178.6 L490.9 178.0 L493.8 177.4 L496.8 176.8 L499.7 176.2 L502.6 175.5 L505.5 174.7 L508.4 173.9 L511.3 173.0 L514.2 172.2 L517.1 171.4 L520.0 170.7 L523.0 170.1" fill="none" stroke="#2a180c" stroke-width="1.57" stroke-linecap="round" opacity="0.73"/>
<path d="M513.5 152.5 L516.4 152.1 L519.4 151.8 L522.4 151.5 L525.4 151.2 L528.4 151.0 L531.4 150.8 L534.4 150.7 L537.4 150.6 L540.4 150.6 L543.4 150.6 L546.4 150.6 L549.4 150.4 L552.4 150.1 L555.4 149.7 L558.4 149.3 L561.5 149.0 L564.5 148.8 L567.5 149.0 L570.4 149.3 L573.4 150.0 L576.3 150.9 L579.2 151.9 L582.0 152.9 L584.9 154.0 L587.8 154.9 L590.7 155.6 L593.6 156.2 L596.6 156.6 L599.7 156.9 L602.7 157.1 L605.7 157.4 L608.7 157.9 L611.7 158.5 L614.5 159.4" fill="none" stroke="#2a180c" stroke-width="2.18" stroke-linecap="round" opacity="0.91"/>
<path d="M633.7 352.0 L634.0 354.9 L634.1 357.9 L634.1 360.9 L634.0 363.9 L633.8 366.9 L633.4 369.9 L632.9 372.9 L632.2 375.8 L631.4 378.7 L631.7 381.8 L632.4 385.2 L633.0 388.7 L633.1 391.9 L632.2 394.8 L630.3 397.2 L627.5 399.1 L624.3 400.7 L621.3 402.3 L618.9 404.2 L617.2 406.7 L616.1 409.7 L615.3 413.1 L614.4 416.4 L612.9 419.3 L610.7 421.4 L607.8 422.5 L604.4 422.9 L600.9 422.9" fill="none" stroke="#3e2818" stroke-width="1.39" stroke-linecap="round" opacity="0.64"/>
<path d="M549.3 163.9 L552.3 164.0 L555.3 164.1 L558.3 164.3 L561.3 164.6 L564.3 164.9 L567.3 165.2 L570.3 165.6 L573.2 166.0 L576.2 166.5 L579.2 167.0 L582.1 167.6 L585.0 168.2 L588.1 168.1 L591.4 167.4 L594.7 166.5 L597.9 165.8 L601.1 165.5 L604.1 166.0 L606.8 167.3 L609.4 169.3 L611.7 171.7 L614.0 174.3 L616.3 176.6 L618.8 178.3 L621.6 179.4 L624.7 179.9 L628.0 179.8 L631.4 179.6 L634.8 179.6 L637.9 180.0 L640.7 181.1 L643.1 183.0 L645.2 185.4 L647.0 188.3 L648.7 191.2 L650.6 193.9 L652.7 196.1" fill="none" stroke="#3e2818" stroke-width="2.07" stroke-linecap="round" opacity="0.87"/>
<path d="M380.4 234.8 L382.3 232.5 L384.3 230.2 L386.3 228.0 L388.3 225.8 L390.4 223.6 L392.5 221.5 L394.6 219.4 L396.8 217.3 L398.6 214.9 L400.3 212.3 L401.8 209.5 L403.3 206.6 L404.8 203.8 L406.4 201.1 L408.3 198.6 L410.4 196.4 L412.7 194.6 L415.4 193.1 L418.3 192.0 L421.3 191.1 L424.4 190.3 L427.6 189.6 L430.6 188.8 L433.5 187.8 L436.3 186.5" fill="none" stroke="#2a180c" stroke-width="1.89" stroke-linecap="round" opacity="0.82"/>
<path d="M533.6 216.2 L536.5 215.9 L539.5 215.7 L542.5 215.6 L545.5 215.5 L548.5 215.4 L551.5 215.5 L554.5 215.6 L557.5 215.7 L560.5 215.9 L563.5 216.2 L566.5 216.6 L569.4 217.1 L572.4 217.8 L575.3 218.5 L578.2 219.2 L581.1 220.0 L584.1 220.6 L587.0 221.2 L590.0 221.8 L592.9 222.4 L595.8 223.0 L598.8 223.8 L601.6 224.7 L604.4 225.7 L607.2 226.9 L609.9 228.3 L612.5 229.7 L615.1 231.3 L617.7 232.8 L620.2 234.4" fill="none" stroke="#4a301c" stroke-width="1.55" stroke-linecap="round" opacity="0.95"/>
<path d="M560.2 190.6 L563.2 190.9 L566.1 191.2 L569.1 191.6 L572.1 192.0 L575.0 192.5 L578.0 193.1 L580.9 193.7 L583.9 194.3 L587.0 194.0 L590.3 193.1 L593.7 191.9 L597.1 190.9 L600.3 190.5 L603.3 191.0 L606.0 192.4 L608.4 194.6 L610.6 197.4 L612.6 200.4 L614.8 203.0 L617.2 205.1 L619.9 206.3 L623.0 206.8 L626.4 206.7 L630.0 206.3" fill="none" stroke="#2a180c" stroke-width="1.53" stroke-linecap="round" opacity="0.63"/>
<path d="M452.6 215.7 L455.2 214.2 L457.8 212.7 L460.4 211.2 L463.1 209.8 L465.7 208.4 L468.4 207.0 L471.1 205.8 L473.8 204.5 L476.6 203.3 L479.4 202.2 L482.1 201.0 L485.0 200.0 L487.8 199.1 L490.7 198.2 L493.6 197.4 L496.5 196.6 L499.4 195.8 L502.3 195.0 L505.2 194.2 L508.1 193.5 L511.0 192.7 L513.9 191.9 L516.8 191.2 L519.7 190.6 L522.7 190.0 L525.6 189.5 L528.6 189.0 L531.6 188.7 L534.6 188.5 L537.6 188.4" fill="none" stroke="#2a180c" stroke-width="1.41" stroke-linecap="round" opacity="0.60"/>
<path d="M540.7 248.5 L543.7 248.3 L546.6 248.1 L549.6 248.0 L552.6 248.0 L555.6 248.1 L558.6 248.2 L561.6 248.5 L564.6 248.8 L567.6 249.1 L570.6 249.6 L573.5 250.1 L576.4 250.8 L579.4 251.5 L582.1 252.8 L584.8 254.6 L587.3 256.7 L589.7 258.9 L592.2 260.8 L594.9 262.2 L597.7 263.1 L600.8 263.6 L604.1 263.8 L607.3 264.0 L610.5 264.4 L613.5 265.3 L616.1 266.8 L618.4 268.8 L620.2 271.4 L621.8 274.3 L623.3 277.2 L624.9 279.9 L626.8 282.3 L629.0 284.3 L631.6 286.0 L634.5 287.4 L637.5 288.7 L640.4 290.3 L643.0 292.1 L645.0 294.3" fill="none" stroke="#4a301c" stroke-width="1.16" stroke-linecap="round" opacity="0.82"/>
<path d="M490.1 183.7 L493.0 182.9 L495.8 182.1 L498.8 181.4 L501.7 180.6 L504.6 180.0 L507.5 179.3 L510.5 178.8 L513.4 178.3 L516.4 177.8 L519.4 177.4 L522.3 177.0 L525.3 176.7 L528.3 176.4 L531.3 176.1 L534.3 175.8" fill="none" stroke="#2a180c" stroke-width="1.94" stroke-linecap="round" opacity="0.76"/>
<path d="M635.9 307.1 L637.4 309.7 L638.9 312.3 L640.3 315.0 L641.5 317.7 L642.7 320.4 L643.7 323.3 L646.1 325.6 L649.2 327.7 L652.3 330.0 L654.5 332.5 L655.4 335.4 L654.7 338.6 L652.9 341.9 L650.9 345.1 L649.4 348.3 L649.2 351.3 L650.3 354.3 L652.5 357.2 L654.9 360.3" fill="none" stroke="#d8bc9c" stroke-width="1.04" stroke-linecap="round" opacity="0.73"/>
<path d="M399.4 216.2 L401.6 214.1 L403.9 212.1 L406.1 210.1 L408.4 208.2 L410.7 206.3 L413.1 204.4 L415.4 202.6 L417.8 200.8 L420.2 199.0 L422.7 197.2 L425.1 195.5 L427.6 193.9 L430.1 192.2 L432.8 190.9 L435.7 189.8 L438.7 189.0 L441.8 188.3 L444.9 187.6 L447.9 186.9 L450.9 186.1 L453.7 185.0 L456.4 183.6 L458.9 182.0 L461.4 180.1 L463.7 178.1 L466.1 176.0 L468.5 174.0 L471.0 172.1 L473.6 170.4 L476.3 169.1 L479.1 168.1 L482.1 167.5 L485.1 167.2 L488.2 167.2 L491.4 167.3 L494.6 167.5 L497.7 167.6 L500.7 167.5 L503.7 167.1" fill="none" stroke="#cfb090" stroke-width="0.61" stroke-linecap="round" opacity="0.69"/>
<path d="M412.9 219.8 L415.2 217.9 L417.5 215.9 L419.8 214.0 L422.1 212.2 L424.5 210.4 L426.9 208.6 L429.3 206.8 L431.8 205.1 L434.3 203.4 L436.8 201.7 L439.3 200.1 L442.0 198.8 L444.9 197.8 L447.9 197.0 L451.0 196.3 L454.1 195.7 L457.2 195.1 L460.1 194.2 L463.0 193.2 L465.7 191.9 L468.2 190.3 L470.7 188.5 L473.1 186.5 L475.5 184.5 L478.0 182.5 L480.5 180.7 L483.1 179.1 L485.9 177.8 L488.7 176.9 L491.7 176.4 L494.8 176.2 L497.9 176.2 L501.0 176.5" fill="none" stroke="#2a180c" stroke-width="2.37" stroke-linecap="round" opacity="0.77"/>
<path d="M480.4 169.0 L483.2 168.1 L486.1 167.2 L489.0 166.4 L491.9 165.6 L494.8 164.9 L497.7 164.2 L500.7 163.6 L503.6 163.0 L506.5 162.4 L509.5 161.9 L512.5 161.4 L515.4 161.0 L518.4 160.8 L521.5 160.9 L524.5 161.2 L527.6 161.6 L530.6 162.1 L533.7 162.5 L536.7 162.8 L539.7 162.9 L542.7 162.8 L545.7 162.5 L548.7 162.1 L551.7 161.5 L554.7 160.9 L557.8 160.3 L560.8 159.9 L563.8 159.7 L566.8 159.7 L569.8 160.0 L572.8 160.7 L575.7 161.6 L578.5 162.7 L581.4 163.9 L584.2 165.1 L587.0 166.3" fill="none" stroke="#4a301c" stroke-width="2.15" stroke-linecap="round" opacity="0.89"/>
<path d="M560.1 238.1 L563.1 238.4 L566.1 238.7 L569.1 239.1 L572.0 239.6 L575.0 240.1 L577.9 240.8 L580.8 241.5 L583.7 242.2 L586.6 243.1 L589.5 244.0 L592.3 245.0 L595.2 245.7 L598.2 246.4 L601.2 247.0 L604.1 247.8 L606.9 248.7 L609.7 250.0 L612.2 251.6 L614.7 253.4 L617.0 255.3 L619.3 257.3 L621.6 259.3 L624.0 261.1 L626.5 262.8 L629.1 264.3 L631.7 265.9 L634.3 267.4 L636.8 269.1 L639.1 271.1 L641.2 273.2 L643.0 275.6 L644.7 278.1 L646.3 280.8" fill="none" stroke="#4e3420" stroke-width="1.46" stroke-linecap="round" opacity="0.79"/>
<path d="M536.0 204.6 L539.0 204.4 L542.0 204.3 L545.0 204.2 L548.0 204.2 L551.0 204.3 L554.0 204.4 L557.0 204.5 L559.9 204.7 L562.9 205.0 L565.9 205.3 L568.9 205.7 L572.0 205.3 L575.1 204.5 L578.4 203.4 L581.6 202.3 L584.8 201.7 L587.9 201.7 L590.8 202.4 L593.5 203.9 L596.0 206.1 L598.4 208.5 L600.7 211.0 L603.1 213.2 L605.7 214.9 L608.5 215.9 L611.6 216.3 L614.9 216.3 L618.3 216.0 L621.7 215.9 L625.0 216.2 L627.9 217.0 L630.5 218.6 L632.6 220.8" fill="none" stroke="#2a180c" stroke-width="1.93" stroke-linecap="round" opacity="0.63"/>
<path d="M553.4 199.7 L556.4 199.8 L559.4 200.0 L562.4 200.3 L565.4 200.6 L568.3 201.0 L571.3 201.4 L574.3 201.6 L577.4 201.6 L580.4 201.6 L583.5 201.6 L586.5 201.8 L589.4 202.3 L592.3 203.1 L595.2 204.2 L597.9 205.5 L600.6 207.0 L603.2 208.5 L605.9 209.9" fill="none" stroke="#7a5a40" stroke-width="0.86" stroke-linecap="round" opacity="0.64"/>
<path d="M539.9 277.3 L542.8 276.8 L545.8 276.5 L548.8 276.2 L551.8 276.1 L554.8 276.1 L557.8 276.1 L560.8 276.3 L563.8 276.6 L566.8 277.0 L569.7 277.4 L572.7 278.0 L575.6 278.7 L578.3 280.2 L580.8 282.4 L583.2 285.0 L585.4 287.7 L587.8 290.0 L590.3 291.7 L593.1 292.8 L596.2 293.3 L599.6 293.4 L603.1 293.4 L606.5 293.7 L609.7 294.6 L612.3 296.1 L614.3 298.4 L615.7 301.3 L616.6 304.6 L617.4 308.0 L618.2 311.3 L619.4 314.2 L621.1 316.7 L623.4 318.8 L626.2 320.5 L629.3 322.1 L632.3 323.8 L635.0 325.8" fill="none" stroke="#d8bc9c" stroke-width="0.91" stroke-linecap="round" opacity="0.88"/>
<path d="M442.0 223.5 L444.5 221.7 L446.9 220.1 L449.4 218.4 L452.0 216.8 L454.5 215.2 L457.1 213.7 L459.7 212.2 L462.3 210.8 L465.1 209.6 L468.1 208.8 L471.2 208.3 L474.3 207.9 L477.5 207.6 L480.6 207.2 L483.6 206.6 L486.5 205.8 L489.3 204.7 L492.0 203.3 L494.6 201.7 L497.2 199.9 L499.8 198.0 L502.4 196.2 L505.0 194.6 L507.8 193.2" fill="none" stroke="#d8bc9c" stroke-width="0.77" stroke-linecap="round" opacity="0.73"/>
<path d="M569.0 260.6 L572.0 261.1 L574.9 261.7 L577.8 262.4 L580.7 263.2 L583.6 264.0 L586.4 265.0 L589.3 266.0 L592.0 267.1 L594.8 268.3 L597.5 269.6 L600.2 271.0 L602.8 272.4 L605.3 274.1 L607.7 275.9 L610.1 277.7 L612.5 279.5 L615.0 281.3 L617.4 283.0 L619.9 284.7 L622.4 286.4 L624.8 288.2 L627.1 290.2 L629.2 292.3 L631.1 294.7 L632.8 297.1 L634.4 299.6 L636.0 302.2 L637.6 304.8 L639.2 307.3 L640.8 309.8 L642.5 312.3 L644.2 314.8 L645.7 317.4 L647.1 320.1" fill="none" stroke="#2a180c" stroke-width="2.23" stroke-linecap="round" opacity="0.70"/>
<path d="M626.9 275.3 L629.1 277.3 L631.3 279.4 L633.3 281.6 L635.4 283.8 L637.3 286.1 L639.2 288.4 L641.0 290.8 L642.8 293.2 L644.5 295.7 L646.1 298.2 L647.6 300.8 L650.5 302.6 L654.3 303.9 L658.1 305.4 L661.0 307.3 L662.3 310.0 L662.0 313.4 L660.6 317.1 L658.9 320.8 L658.0 324.2 L658.4 327.2 L660.4 329.8 L663.5 332.2 L666.8 334.7 L669.2 337.4 L670.1 340.3 L669.2 343.4 L667.0 346.6 L664.3 349.7 L662.3 352.7 L661.6 355.7 L662.5 358.8 L664.7 361.9 L667.3 365.1" fill="none" stroke="#4a301c" stroke-width="1.12" stroke-linecap="round" opacity="0.63"/>
<path d="M540.7 190.9 L543.7 190.8 L546.7 190.8 L549.7 190.8 L552.7 190.9 L555.7 191.1 L558.7 191.3 L561.7 191.9 L564.6 192.8 L567.5 194.1 L570.4 195.4 L573.2 196.6 L576.1 197.5 L579.1 198.2 L582.1 198.4 L585.1 198.4 L588.3 198.2 L591.4 198.0 L594.5 198.0 L597.6 198.2" fill="none" stroke="#4a301c" stroke-width="2.07" stroke-linecap="round" opacity="0.74"/>
<path d="M538.3 258.5 L541.3 258.1 L544.3 257.8 L547.3 257.6 L550.3 257.5 L553.3 257.5 L556.3 257.6 L559.3 257.7 L562.3 258.0 L565.3 258.3 L568.2 259.0 L571.1 260.0 L573.9 261.3 L576.7 262.7 L579.5 264.0 L582.3 265.2 L585.2 266.0 L588.1 266.6 L591.2 267.0 L594.3 267.3 L597.4 267.7 L600.4 268.4 L603.2 269.3 L605.9 270.7 L608.4 272.5 L610.6 274.6 L612.6 276.9 L614.6 279.3" fill="none" stroke="#7a5a40" stroke-width="1.24" stroke-linecap="round" opacity="0.74"/>
<path d="M599.8 331.4 L601.6 333.8 L603.2 336.3 L604.7 338.9 L606.0 341.6 L607.2 344.4 L608.2 347.2 L609.1 350.1 L609.8 353.0 L610.2 356.0 L610.5 358.9 L610.6 361.9 L610.5 364.9 L610.0 367.9 L609.0 370.8 L607.8 373.7 L606.4 376.4 L605.2 379.2 L604.2 382.0 L603.3 384.9 L602.4 387.8 L601.4 390.8 L600.1 393.5 L598.3 396.0 L596.1 398.0 L593.6 399.7 L590.8 401.0 L588.0 402.2 L585.1 403.3 L582.4 404.5 L579.7 406.0 L577.1 407.5 L574.5 409.1 L571.7 410.5 L568.8 411.5 L565.9 412.0 L562.9 411.9 L559.9 411.3" fill="none" stroke="#4a301c" stroke-width="2.12" stroke-linecap="round" opacity="0.75"/>
<path d="M463.4 174.7 L466.2 173.6 L469.0 172.5 L471.8 171.4 L474.6 170.4 L477.4 169.4 L480.3 168.5 L483.2 167.6 L486.0 166.8 L488.9 166.0 L491.8 165.2 L494.7 164.5 L497.7 164.1 L500.8 164.2 L504.0 164.5 L507.2 165.1 L510.3 165.7 L513.4 166.2 L516.5 166.4 L519.6 166.4 L522.5 166.0 L525.5 165.2 L528.4 164.2 L531.3 162.9 L534.2 161.5 L537.1 160.2 L540.1 159.1 L543.1 158.3 L546.1 157.9 L549.1 157.9 L552.1 158.4 L555.0 159.3 L558.0 160.5 L560.9 161.8" fill="none" stroke="#2a180c" stroke-width="1.29" stroke-linecap="round" opacity="0.75"/>
<path d="M382.9 218.8 L385.0 216.6 L387.1 214.5 L389.2 212.4 L391.4 210.3 L393.6 208.3 L395.9 206.3 L398.2 204.5 L400.7 202.7 L403.2 201.0 L405.7 199.4 L408.2 197.7 L410.7 196.0 L413.2 194.3 L415.6 192.5 L417.9 190.6 L420.2 188.7" fill="none" stroke="#7a5a40" stroke-width="0.73" stroke-linecap="round" opacity="0.62"/>
<path d="M413.2 205.5 L415.5 203.7 L417.9 201.9 L420.3 200.1 L422.8 198.3 L425.2 196.6 L427.7 194.9 L430.2 193.3 L432.7 191.7 L435.3 190.1 L437.9 188.6 L440.5 187.1 L443.1 185.7 L445.9 184.4 L448.6 183.2 L451.4 182.0 L454.1 180.8 L456.9 179.6 L459.6 178.4 L462.4 177.2 L465.1 175.9 L467.8 174.6 L470.5 173.3 L473.2 172.0 L476.0 170.8 L478.7 169.6 L481.5 168.5 L484.4 167.5 L487.2 166.6 L490.1 165.9 L493.1 165.2 L496.0 164.7" fill="none" stroke="#2a180c" stroke-width="1.39" stroke-linecap="round" opacity="0.66"/>
<path d="M562.6 204.3 L565.6 204.6 L568.5 205.0 L571.5 205.4 L574.5 205.9 L577.4 206.4 L580.4 207.0 L583.3 207.7 L586.2 208.4 L589.1 209.2 L591.8 210.6 L594.4 212.6 L596.8 214.9 L599.2 217.1 L601.8 218.9 L604.5 220.2 L607.5 220.9 L610.6 221.1 L613.9 221.0 L617.3 221.0 L620.4 221.4 L623.3 222.3 L625.9 223.9 L628.0 226.1 L629.9 228.8 L631.7 231.6 L633.5 234.3 L635.6 236.6 L638.0 238.4" fill="none" stroke="#3e2818" stroke-width="2.28" stroke-linecap="round" opacity="0.72"/>
<path d="M497.5 188.0 L500.4 187.2 L503.3 186.5 L506.3 185.9 L509.2 185.2 L512.1 184.7 L515.1 184.5 L518.2 184.6 L521.3 185.1 L524.5 185.7 L527.6 186.4 L530.6 187.0 L533.7 187.4 L536.7 187.5 L539.7 187.3 L542.7 186.8" fill="none" stroke="#b08c68" stroke-width="0.87" stroke-linecap="round" opacity="0.78"/>
<path d="M483.9 209.4 L486.7 208.3 L489.5 207.3 L492.3 206.3 L495.2 205.3 L498.0 204.5 L500.9 203.6 L503.8 202.8 L506.7 202.1 L509.6 201.4 L512.6 200.7 L515.5 200.1 L518.5 199.6 L521.4 199.1 L524.4 198.8 L527.4 198.6 L530.4 198.6 L533.5 198.6 L536.5 198.7 L539.5 198.8 L542.5 198.9 L545.5 198.9 L548.5 198.9 L551.5 198.7 L554.5 198.5 L557.5 198.3 L560.5 198.1 L563.6 197.9 L566.6 197.9 L569.6 198.0 L572.6 198.3 L575.5 198.7 L578.5 199.4 L581.4 200.2 L584.2 201.2 L587.1 202.2 L589.9 203.3 L592.7 204.4 L595.5 205.4 L598.4 206.4" fill="none" stroke="#2a180c" stroke-width="1.02" stroke-linecap="round" opacity="0.77"/>
<path d="M403.5 178.9 L405.9 177.2 L408.4 175.4 L410.9 173.8 L413.4 172.1 L415.9 170.5 L418.5 168.9 L421.0 167.4 L423.5 165.6 L425.9 163.8 L428.3 161.9 L430.6 159.9 L433.0 158.0 L435.4 156.2 L437.9 154.5 L440.5 153.0 L443.2 151.7 L446.1 150.7 L449.0 149.8 L451.9 149.1 L454.9 148.4 L457.9 147.8 L460.9 147.2" fill="none" stroke="#d8bc9c" stroke-width="1.05" stroke-linecap="round" opacity="0.95"/>
<path d="M378.3 218.4 L380.3 216.3 L382.4 214.1 L384.5 212.0 L386.7 209.9 L388.8 207.8 L391.0 205.8 L393.3 203.7 L395.5 201.8 L397.8 199.8 L400.1 197.9 L402.2 195.7 L404.1 193.3 L405.9 190.8 L407.7 188.2 L409.5 185.7 L411.5 183.2 L413.6 181.0 L415.9 179.0 L418.3 177.3 L421.0 176.0 L423.9 174.9 L426.9 174.0 L430.0 173.3 L433.0 172.6 L436.1 171.9 L439.0 171.0 L441.8 169.8 L444.4 168.4 L447.0 166.8 L449.4 164.9 L451.8 162.9" fill="none" stroke="#4a301c" stroke-width="2.34" stroke-linecap="round" opacity="0.81"/>
<path d="M563.1 229.1 L566.1 229.5 L569.1 229.9 L572.0 230.4 L575.0 230.9 L577.9 231.5 L580.9 232.2 L583.8 232.9 L586.7 233.7 L589.5 234.6 L592.4 235.5 L595.2 236.5 L598.0 237.6 L601.2 237.7 L604.6 237.3 L608.1 236.6 L611.6 236.3 L614.8 236.6 L617.5 237.9 L619.7 240.1 L621.5 243.1 L623.0 246.3 L624.5 249.5 L626.4 252.2 L628.7 254.1 L631.5 255.3 L634.8 255.9 L638.4 256.3 L641.9 256.8 L645.0 257.9 L647.5 259.6 L649.1 262.2 L650.2 265.4 L650.8 268.9 L651.3 272.4 L652.1 275.6 L653.6 278.3 L655.8 280.4" fill="none" stroke="#4e3420" stroke-width="1.58" stroke-linecap="round" opacity="0.77"/>
<path d="M495.6 208.3 L498.5 207.4 L501.4 206.5 L504.3 205.7 L507.2 204.9 L510.1 204.2 L513.0 203.8 L516.1 203.5 L519.1 203.5 L522.2 203.6 L525.2 203.7 L528.3 203.8 L531.3 203.9 L534.3 203.8 L537.3 203.5 L540.3 203.0 L543.3 202.5" fill="none" stroke="#b08c68" stroke-width="1.19" stroke-linecap="round" opacity="0.85"/>
<path d="M574.1 270.6 L577.0 271.3 L579.9 272.1 L582.7 273.0 L585.6 273.9 L588.4 275.0 L591.4 275.4 L594.6 275.5 L598.0 275.5 L601.2 275.6 L604.3 276.3 L607.0 277.5 L609.3 279.5 L611.3 282.0 L612.9 284.9 L614.5 287.8 L616.1 290.5" fill="none" stroke="#3e2818" stroke-width="2.32" stroke-linecap="round" opacity="0.80"/>
<path d="M546.9 211.2 L549.9 211.2 L552.9 211.3 L555.9 211.4 L558.9 211.6 L561.9 211.8 L564.9 212.1 L567.8 212.5 L570.8 212.9 L573.8 213.4 L576.7 213.9 L579.7 214.5 L582.8 214.4 L586.0 213.6 L589.3 212.7 L592.7 211.9 L595.9 211.5 L598.9 211.9 L601.6 213.2 L604.1 215.2 L606.3 217.8 L608.5 220.5 L610.6 223.1 L613.0 225.2 L615.6 226.7 L618.5 227.5 L621.8 227.7 L625.2 227.7 L628.7 227.7 L632.0 228.1 L634.9 229.2 L637.3 230.9 L639.3 233.4 L640.8 236.3 L642.1 239.5" fill="none" stroke="#2a180c" stroke-width="1.13" stroke-linecap="round" opacity="0.84"/>
<path d="M551.5 171.1 L554.5 171.3 L557.5 171.5 L560.4 171.7 L563.4 172.0 L566.4 172.3 L569.4 172.7 L572.4 173.1 L575.3 173.6 L578.2 174.7 L580.9 176.3 L583.6 178.2 L586.3 180.1 L589.0 181.8 L591.8 182.9 L594.8 183.5 L597.9 183.6 L601.1 183.3 L604.4 182.8 L607.6 182.5 L610.7 182.7 L613.7 183.4 L616.4 184.8 L618.8 186.7 L621.1 189.1" fill="none" stroke="#4a301c" stroke-width="1.13" stroke-linecap="round" opacity="0.68"/>
<path d="M456.6 155.4 L459.4 154.3 L462.2 153.2 L465.0 152.2 L467.8 151.2 L470.7 150.2 L473.5 149.3 L476.4 148.4 L479.3 147.6 L482.2 146.8 L485.1 146.0 L488.0 145.3 L490.9 144.6 L493.8 143.9 L496.7 143.1 L499.6 142.4 L502.5 141.6 L505.5 140.9 L508.4 140.3 L511.3 139.7 L514.3 139.2 L517.3 138.9 L520.3 138.6 L523.3 138.4 L526.3 138.3 L529.3 138.3 L532.3 138.2 L535.3 138.3 L538.3 138.3 L541.3 138.3 L544.3 138.2 L547.3 138.2 L550.3 138.2 L553.3 138.1 L556.3 138.1 L559.3 138.1 L562.3 138.2 L565.3 138.3" fill="none" stroke="#4a301c" stroke-width="2.07" stroke-linecap="round" opacity="0.89"/>
<path d="M469.1 135.1 L472.0 134.2 L474.9 133.4 L477.8 132.6 L480.7 131.8 L483.6 131.1 L486.5 130.4 L489.5 129.8 L492.4 129.2 L495.4 128.7 L498.4 128.4 L501.4 128.3 L504.4 128.3 L507.5 128.3 L510.5 128.3 L513.5 128.2 L516.5 128.0 L519.5 127.6 L522.5 127.2 L525.4 126.6 L528.4 126.0 L531.4 125.4 L534.3 124.8 L537.3 124.3 L540.3 123.9" fill="none" stroke="#f0e4d4" stroke-width="1.06" stroke-linecap="round" opacity="0.81"/>
<path d="M613.2 260.3 L615.7 261.9 L618.2 263.6 L620.6 265.4 L623.0 267.2 L625.3 269.1 L627.6 271.0 L629.8 273.0 L632.1 275.0 L634.2 277.1 L636.4 279.2 L638.4 281.4 L640.4 283.6 L642.4 285.9 L644.2 288.3 L646.1 290.7 L647.8 293.1 L649.5 295.6 L651.1 298.1 L652.6 300.7 L654.0 303.3 L655.4 306.0 L656.7 308.7" fill="none" stroke="#2a180c" stroke-width="2.38" stroke-linecap="round" opacity="0.78"/>
<path d="M537.6 178.4 L540.6 178.3 L543.6 178.3 L546.6 178.3 L549.6 178.3 L552.6 178.4 L555.6 178.2 L558.6 177.7 L561.7 177.0 L564.7 176.4 L567.8 176.0 L570.8 175.8 L573.8 176.0 L576.8 176.6 L579.7 177.6 L582.5 178.9 L585.2 180.4" fill="none" stroke="#4a301c" stroke-width="1.98" stroke-linecap="round" opacity="0.72"/>
<path d="M469.1 168.7 L471.9 167.7 L474.7 166.7 L477.6 165.8 L480.4 164.8 L483.3 164.0 L486.2 163.1 L489.1 162.4 L492.0 161.6 L494.9 160.9 L497.8 160.2 L500.8 159.6 L503.7 159.0 L506.6 158.5 L509.5 157.7 L512.4 156.6 L515.3 155.4 L518.1 154.1 L521.0 152.9 L523.9 151.8 L526.8 151.0 L529.8 150.5 L532.8 150.3 L535.8 150.4 L538.8 150.9 L541.8 151.6 L544.8 152.4 L547.8 153.3 L550.8 154.1 L553.8 154.7 L556.8 155.2 L559.8 155.3 L562.8 155.2 L565.8 154.9 L568.9 154.5 L572.0 154.0 L575.1 153.5 L578.1 153.2 L581.2 153.2 L584.2 153.5" fill="none" stroke="#d8bc9c" stroke-width="0.99" stroke-linecap="round" opacity="0.80"/>
<path d="M648.5 316.5 L649.6 319.3 L650.5 322.2 L651.4 325.0 L652.1 327.9 L652.8 330.9 L653.3 333.8 L653.8 336.8 L654.2 339.8 L654.5 342.7 L654.8 345.7 L656.5 348.6 L659.1 351.5 L661.6 354.4 L663.0 357.4 L662.9 360.4 L661.1 363.3 L658.5 366.1 L655.7 368.8 L653.9 371.6 L653.5 374.5 L654.4 377.8 L656.1 381.3 L657.6 384.8 L658.0 388.1 L657.0 390.9 L654.4 393.1 L651.0 395.0 L647.7 396.8 L645.1 398.9 L643.9 401.6" fill="none" stroke="#3e2818" stroke-width="1.34" stroke-linecap="round" opacity="0.80"/>
<path d="M515.5 146.9 L518.4 146.6 L521.4 146.3 L524.4 146.0 L527.4 145.8 L530.4 145.6 L533.4 145.1 L536.3 144.4 L539.3 143.5 L542.3 142.6 L545.3 141.7 L548.3 141.1 L551.3 140.7 L554.3 140.7 L557.3 141.0 L560.3 141.7" fill="none" stroke="#f0e4d4" stroke-width="1.26" stroke-linecap="round" opacity="0.83"/>
<path d="M556.9 223.9 L559.9 224.1 L562.9 224.4 L565.9 224.7 L568.8 225.1 L571.8 225.6 L574.8 226.1 L577.7 226.7 L580.6 227.3 L583.6 228.0 L586.3 229.4 L588.9 231.2 L591.4 233.3 L593.9 235.5 L596.5 237.3 L599.2 238.6 L602.1 239.4 L605.2 239.8 L608.4 239.8 L611.7 239.9 L614.9 240.3 L617.8 241.2 L620.4 242.6 L622.7 244.7 L624.7 247.2 L626.4 250.0 L628.2 252.7 L630.1 255.2 L632.2 257.3" fill="none" stroke="#2a180c" stroke-width="1.28" stroke-linecap="round" opacity="0.76"/>
<path d="M509.7 174.9 L512.6 174.4 L515.6 173.9 L518.5 173.5 L521.5 173.1 L524.5 172.8 L527.5 172.5 L530.5 172.2 L533.5 172.0 L536.5 171.9 L539.4 171.5 L542.4 170.9 L545.4 170.2 L548.4 169.5 L551.4 168.9 L554.4 168.5 L557.5 168.3 L560.5 168.5 L563.4 168.9 L566.4 169.7 L569.3 170.6 L572.2 171.6 L575.1 172.7 L577.9 173.7 L580.8 174.6 L583.8 175.2 L586.7 175.6 L589.8 175.9" fill="none" stroke="#4a301c" stroke-width="1.46" stroke-linecap="round" opacity="0.82"/>
<path d="M549.1 250.4 L552.1 250.3 L555.1 250.4 L558.1 250.5 L561.1 250.7 L564.1 251.0 L567.1 251.4 L570.0 251.8 L573.0 252.3 L575.9 252.9 L578.8 253.6 L581.7 254.4 L584.6 255.2 L587.5 256.2 L590.1 257.8 L592.5 260.0 L594.8 262.5 L597.0 265.0 L599.3 267.1 L601.9 268.7 L604.8 269.6 L607.9 270.1 L611.3 270.4 L614.6 270.7 L617.7 271.4 L620.5 272.7 L622.8 274.7 L624.6 277.2 L626.0 280.2 L627.2 283.4 L628.4 286.4 L629.9 289.2 L631.8 291.5 L634.2 293.4 L637.0 294.9 L640.0 296.4 L643.0 298.0 L645.6 299.9 L647.5 302.2 L648.8 304.9" fill="none" stroke="#3e2818" stroke-width="1.16" stroke-linecap="round" opacity="0.64"/>
<path d="M620.4 341.3 L621.4 344.1 L622.2 347.0 L622.9 349.9 L623.5 352.8 L623.9 355.8 L624.1 358.8 L624.1 361.8 L623.1 364.8 L621.2 367.8 L619.0 370.6 L617.1 373.3 L615.9 376.1 L615.6 379.2 L616.1 382.5 L616.8 386.0 L617.2 389.5 L616.8 392.6 L615.4 395.3 L612.9 397.2 L609.7 398.6 L606.3 399.7" fill="none" stroke="#2a180c" stroke-width="2.36" stroke-linecap="round" opacity="0.77"/>
<path d="M631.8 325.0 L633.1 327.7 L634.3 330.4 L635.5 333.2 L636.6 336.0 L637.6 338.8 L638.4 341.7 L639.1 344.6 L639.6 347.6 L640.0 350.5 L640.2 353.5 L640.4 356.5 L640.4 359.5 L640.3 362.5 L639.3 365.5 L637.8 368.4 L636.1 371.2 L634.6 374.0 L633.9 376.9 L633.8 380.0 L634.2 383.2 L634.6 386.5 L634.6 389.7 L633.8 392.7 L632.1 395.2 L629.6 397.3 L626.9 399.2 L624.3 401.1 L622.1 403.2 L620.5 405.8 L619.4 408.7 L618.5 411.9 L617.4 415.0 L615.7 417.6 L613.4 419.6 L610.5 420.8 L607.3 421.5 L604.1 422.1 L601.0 422.9 L598.4 424.3" fill="none" stroke="#4e3420" stroke-width="1.59" stroke-linecap="round" opacity="0.88"/>
<path d="M428.1 217.8 L430.4 215.9 L432.8 214.2 L435.3 212.4 L437.8 210.7 L440.2 209.0 L442.8 207.4 L445.3 205.8 L447.7 203.9 L449.9 201.8 L452.0 199.5 L454.1 197.1 L456.2 194.8 L458.5 192.6 L460.9 190.6 L463.4 189.0 L466.1 187.7 L469.0 186.8 L472.0 186.3 L475.2 186.0 L478.3 185.9 L481.5 185.8 L484.6 185.6" fill="none" stroke="#d8bc9c" stroke-width="1.17" stroke-linecap="round" opacity="0.74"/>
<path d="M406.9 227.3 L409.0 225.3 L411.2 223.2 L413.5 221.2 L415.7 219.3 L418.0 217.3 L420.3 215.4 L422.7 213.6 L425.1 211.7 L427.5 209.9 L429.9 208.2 L432.3 206.4 L434.8 204.7 L437.5 203.3 L440.3 202.2 L443.3 201.3 L446.3 200.5 L449.4 199.7 L452.4 198.9 L455.3 198.0 L458.1 196.9 L460.8 195.5 L463.3 193.8 L465.7 192.0 L468.1 190.0 L470.5 187.9 L472.9 185.9 L475.3 184.0 L477.9 182.3 L480.6 181.0 L483.5 180.0 L486.4 179.4 L489.5 179.1 L492.6 179.0 L495.7 179.1 L498.9 179.2 L502.0 179.2 L505.0 179.1" fill="none" stroke="#2a180c" stroke-width="1.50" stroke-linecap="round" opacity="0.77"/>
<path d="M518.2 178.4 L521.1 178.0 L524.1 177.6 L527.1 177.3 L530.1 177.0 L533.1 176.8 L536.1 176.7 L539.1 176.6 L542.1 176.5 L545.1 176.5 L548.1 176.5 L551.1 176.6 L554.1 176.7 L557.1 176.2 L560.2 175.2 L563.3 173.9 L566.4 172.7 L569.5 171.6 L572.6 171.1 L575.6 171.2 L578.5 172.1 L581.3 173.5 L584.0 175.4 L586.6 177.6 L589.2 179.7 L591.9 181.5 L594.7 182.8 L597.6 183.5 L600.6 183.7 L603.9 183.4 L607.2 182.9 L610.5 182.5 L613.8 182.3 L616.9 182.5 L619.8 183.4 L622.4 185.0 L624.7 187.1" fill="none" stroke="#2a180c" stroke-width="2.02" stroke-linecap="round" opacity="0.71"/>
<path d="M621.2 331.1 L622.6 333.8 L623.8 336.5 L625.0 339.3 L626.0 342.1 L626.9 345.0 L627.7 347.9 L628.2 350.8 L628.7 353.8 L629.0 356.8 L629.1 359.8 L630.4 362.7 L632.3 365.8 L634.2 368.9 L635.5 372.1 L635.5 375.1 L634.3 377.9 L631.9 380.4 L629.0 382.7 L626.2 384.9 L624.2 387.3 L623.1 390.1 L622.9 393.4 L623.2 397.0 L623.4 400.6 L623.0 404.0 L621.5 406.6 L619.0 408.4 L615.6 409.5 L612.0 410.2 L608.6 410.9 L605.7 412.2" fill="none" stroke="#7a5a40" stroke-width="0.91" stroke-linecap="round" opacity="0.63"/>
<path d="M415.8 226.3 L418.0 224.3 L420.3 222.3 L422.6 220.4 L425.0 218.5 L427.3 216.7 L429.7 214.8 L432.1 213.1 L434.5 211.3 L437.0 209.6 L439.5 207.9 L441.9 206.1 L444.1 204.0 L446.3 201.9 L448.5 199.7 L450.8 197.6 L453.1 195.6 L455.5 193.7 L458.0 192.1 L460.7 190.8 L463.5 189.7 L466.4 188.9 L469.4 188.2 L472.5 187.7 L475.5 187.2 L478.5 186.7 L481.5 186.1 L484.4 185.3 L487.2 184.3 L490.0 183.1 L492.7 181.8 L495.4 180.3" fill="none" stroke="#2a180c" stroke-width="1.33" stroke-linecap="round" opacity="0.83"/>
<path d="M569.3 218.2 L572.3 218.7 L575.2 219.2 L578.2 219.8 L581.1 220.4 L584.0 221.1 L586.9 221.9 L589.8 222.7 L592.7 223.6 L595.5 224.6 L598.3 225.6 L600.8 227.5 L603.1 230.0 L605.1 232.9 L607.2 235.6 L609.5 237.8 L612.2 239.2 L615.2 239.8 L618.6 239.9 L622.2 239.8 L625.6 239.8 L628.8 240.5 L631.4 242.0 L633.4 244.3 L635.0 247.2 L636.2 250.5 L637.5 253.8 L639.0 256.6 L641.0 258.9 L643.6 260.5 L646.8 261.5 L650.2 262.4" fill="none" stroke="#3e2818" stroke-width="2.25" stroke-linecap="round" opacity="0.66"/>
<path d="M414.2 175.6 L416.7 174.0 L419.3 172.4 L421.8 170.8 L424.4 169.3 L427.0 167.8 L429.6 166.3 L432.3 164.9 L434.9 163.5 L437.6 162.1 L440.3 160.8 L442.9 159.4 L445.6 158.1 L448.3 156.7 L451.0 155.4 L453.7 154.2 L456.5 152.9 L459.2 151.7 L462.0 150.6 L464.8 149.6 L467.7 148.6 L470.5 147.7 L473.4 146.8 L476.3 146.0 L479.2 145.2 L482.1 144.4 L485.0 143.7 L487.9 143.0 L490.8 142.3 L493.7 141.5 L496.6 140.9 L499.6 140.2" fill="none" stroke="#2a180c" stroke-width="1.10" stroke-linecap="round" opacity="0.92"/>
<path d="M497.6 174.9 L500.6 174.2 L503.5 173.5 L506.4 172.9 L509.4 172.4 L512.3 171.9 L515.3 171.4 L518.3 171.0 L521.2 170.6 L524.2 170.3 L527.2 170.0 L530.2 169.8 L533.2 169.6 L536.2 169.4 L539.2 168.9 L542.2 168.2 L545.1 167.3 L548.1 166.4 L551.2 165.6 L554.2 165.0 L557.2 164.8 L560.2 164.9 L563.2 165.4 L566.1 166.2 L569.0 167.4 L571.9 168.6 L574.7 169.9 L577.6 171.1 L580.4 172.0 L583.4 172.7 L586.4 173.1 L589.4 173.2 L592.5 173.1 L595.6 173.0 L598.7 172.9 L601.8 173.0 L604.9 173.4 L607.8 174.1 L610.6 175.3 L613.2 176.7" fill="none" stroke="#2a180c" stroke-width="2.03" stroke-linecap="round" opacity="0.61"/>
<path d="M600.3 270.8 L602.9 272.2 L605.5 273.8 L608.0 275.3 L610.5 277.0 L613.0 278.8 L615.3 280.6 L617.7 282.5 L620.0 284.4 L622.2 286.4 L624.3 288.5 L626.4 290.7 L628.4 292.9 L630.2 295.3 L631.8 297.9 L633.3 300.6 L634.8 303.2 L636.4 305.7 L638.2 308.1 L640.1 310.5 L642.0 312.9 L643.8 315.3 L645.3 317.9 L646.4 320.7 L647.2 323.6 L647.7 326.6 L648.1 329.6 L648.5 332.6 L649.1 335.6 L649.8 338.5 L650.6 341.4 L651.5 344.3 L652.3 347.2 L652.8 350.2 L652.9 353.2 L652.6 356.2 L652.1 359.2 L651.6 362.2" fill="none" stroke="#2a180c" stroke-width="1.08" stroke-linecap="round" opacity="0.62"/>
<path d="M641.7 301.3 L643.2 303.9 L644.7 306.5 L646.0 309.2 L647.3 311.9 L648.5 314.6 L649.6 317.4 L650.6 320.2 L651.5 323.1 L652.4 326.0 L652.8 329.0 L652.9 332.0 L653.0 335.1 L653.1 338.1 L653.6 341.1 L654.3 344.0 L655.2 346.9 L656.0 349.9 L656.5 352.9 L656.6 355.9 L656.2 358.8 L655.5 361.8 L654.7 364.8 L654.0 367.7 L653.6 370.7 L653.5 373.7 L653.5 376.8 L653.4 379.8" fill="none" stroke="#3e2818" stroke-width="1.33" stroke-linecap="round" opacity="0.75"/>
<path d="M572.2 182.6 L575.2 183.1 L578.1 183.6 L581.1 184.2 L584.0 184.8 L587.0 185.5 L589.9 186.2 L592.8 187.0 L595.6 187.8 L598.5 188.7 L601.6 188.9 L604.8 188.7 L608.1 188.4 L611.3 188.3 L614.4 188.7 L617.2 189.7 L619.7 191.4 L622.0 193.7 L624.2 196.2 L626.3 198.6 L628.7 200.6 L631.2 202.2 L634.1 203.1 L637.3 203.7 L640.5 204.0 L643.8 204.5 L646.8 205.4 L649.4 206.9" fill="none" stroke="#2e1c10" stroke-width="1.28" stroke-linecap="round" opacity="0.94"/>
<path d="M571.6 250.5 L574.5 251.1 L577.4 251.7 L580.3 252.5 L583.2 253.3 L586.1 254.1 L589.0 255.1 L591.8 256.1 L594.6 257.2 L597.3 258.4 L600.0 259.7 L602.7 261.0 L605.0 263.1 L606.9 265.9 L608.7 269.0 L610.4 271.8 L612.5 274.2 L615.0 275.9 L617.9 276.9 L621.2 277.5 L624.7 278.0 L628.0 278.8 L630.8 280.2 L633.0 282.3 L634.4 285.1 L635.3 288.3 L635.9 291.8 L636.6 295.1 L637.7 298.0 L639.4 300.5 L641.8 302.5 L644.7 304.2 L647.8 305.9 L650.6 307.8" fill="none" stroke="#2e1c10" stroke-width="1.80" stroke-linecap="round" opacity="0.79"/>
<path d="M581.2 184.7 L584.2 185.4 L587.1 186.1 L590.0 186.8 L592.9 187.6 L595.8 188.4 L598.7 189.3 L601.7 189.7 L604.8 189.9 L607.9 190.0 L611.0 190.2 L614.0 190.8 L616.8 191.9 L619.4 193.4 L621.8 195.3 L624.2 197.4 L626.5 199.5 L628.9 201.3 L631.5 202.8" fill="none" stroke="#4e3420" stroke-width="2.03" stroke-linecap="round" opacity="0.87"/>
<path d="M562.2 252.7 L565.1 253.1 L568.1 253.5 L571.1 253.9 L574.0 254.5 L577.0 255.1 L579.9 255.9 L582.8 256.7 L585.6 257.6 L588.5 258.5 L591.3 259.6 L594.1 260.6 L596.9 261.8 L599.6 263.0 L602.3 264.3 L605.0 265.7 L607.6 267.1 L610.2 268.6 L612.8 270.2 L615.3 271.8 L617.8 273.4 L620.2 275.2 L622.6 277.0 L624.9 279.0 L627.1 281.0 L629.3 283.1 L631.4 285.2 L633.4 287.4 L635.4 289.6 L637.3 291.9 L639.2 294.3" fill="none" stroke="#3e2818" stroke-width="1.97" stroke-linecap="round" opacity="0.89"/>
<path d="M644.1 300.5 L645.6 303.1 L647.0 305.7 L648.4 308.4 L649.6 311.1 L650.8 313.8 L651.9 316.6 L652.9 319.5 L653.8 322.3 L654.6 325.2 L655.3 328.1 L655.9 331.1 L657.6 333.8 L659.8 336.5 L662.0 339.2 L663.4 342.0 L663.6 345.0 L662.7 348.1 L661.0 351.2 L659.4 354.2 L658.4 357.2 L658.4 360.2 L659.4 363.2 L660.8 366.4 L662.2 369.6 L662.7 372.7 L662.0 375.6 L660.2 378.3 L657.8 380.8 L655.4 383.3 L653.7 385.9 L652.9 388.8 L653.0 392.0 L653.6 395.5" fill="none" stroke="#2a180c" stroke-width="1.34" stroke-linecap="round" opacity="0.76"/>
<path d="M373.4 240.0 L375.3 237.7 L377.2 235.4 L379.1 233.0 L381.1 230.8 L383.0 228.5 L385.0 226.3 L387.1 224.1 L389.2 221.9 L391.3 219.8 L393.4 217.7 L395.7 215.8 L398.3 214.1 L401.0 212.6 L403.8 211.2 L406.6 209.8 L409.3 208.4 L412.0 206.9 L414.5 205.3 L416.8 203.4 L419.0 201.3 L421.1 199.0 L423.1 196.6 L425.0 194.2 L427.0 191.8 L429.1 189.5 L431.3 187.4 L433.7 185.6 L436.2 184.0 L439.0 182.8 L441.9 181.8 L444.9 181.0" fill="none" stroke="#4a301c" stroke-width="2.24" stroke-linecap="round" opacity="0.76"/>
<path d="M408.1 190.2 L410.5 188.4 L412.9 186.7 L415.4 184.9 L417.9 183.3 L420.4 181.6 L422.9 180.0 L425.4 178.3 L427.9 176.7 L430.4 175.1 L433.0 173.5 L435.6 172.0 L438.2 170.5 L440.8 169.0 L443.4 167.6 L446.1 166.3 L448.8 165.0 L451.6 163.7 L454.3 162.6 L457.1 161.4" fill="none" stroke="#2a180c" stroke-width="2.39" stroke-linecap="round" opacity="0.84"/>
<path d="M455.7 154.0 L458.5 152.9 L461.3 151.8 L464.2 150.8 L467.0 149.8 L469.8 148.9 L472.7 148.0 L475.6 147.1 L478.4 146.2 L481.3 145.4 L484.2 144.7 L487.1 143.8 L490.0 142.8 L492.8 141.9 L495.7 140.9 L498.5 140.0 L501.4 139.1 L504.3 138.4 L507.3 137.8 L510.2 137.3 L513.2 137.0 L516.2 136.8 L519.2 136.8 L522.3 136.8 L525.3 136.8 L528.3 136.9 L531.3 136.9 L534.3 136.9 L537.3 136.8 L540.3 136.6 L543.3 136.3 L546.3 136.0" fill="none" stroke="#cfb090" stroke-width="1.12" stroke-linecap="round" opacity="0.78"/>
<path d="M424.6 159.8 L427.2 158.4 L429.9 157.0 L432.5 155.6 L435.2 154.2 L437.9 152.9 L440.7 151.8 L443.6 150.8 L446.5 150.0 L449.4 149.3 L452.4 148.6 L455.4 147.9 L458.3 147.1 L461.2 146.2 L464.0 145.2 L466.7 144.0" fill="none" stroke="#cfb090" stroke-width="1.11" stroke-linecap="round" opacity="0.92"/>
<path d="M450.7 159.2 L453.4 158.1 L456.2 156.9 L459.0 155.8 L461.8 154.7 L464.6 153.7 L467.4 152.7 L470.3 151.7 L473.1 150.8 L476.0 149.9 L478.8 149.0 L481.7 148.2 L484.6 147.5 L487.5 146.5 L490.3 145.5 L493.2 144.5 L496.0 143.4 L498.9 142.4 L501.7 141.5 L504.6 140.7 L507.6 140.0 L510.5 139.6 L513.5 139.3 L516.5 139.2 L519.6 139.2 L522.6 139.3 L525.6 139.4 L528.6 139.6 L531.6 139.6 L534.6 139.6 L537.6 139.5 L540.6 139.3 L543.6 139.0 L546.6 138.6 L549.6 138.3 L552.6 137.9 L555.7 137.7" fill="none" stroke="#7a5a40" stroke-width="0.64" stroke-linecap="round" opacity="0.74"/>
<path d="M545.6 163.7 L548.6 163.8 L551.6 163.9 L554.6 164.0 L557.6 164.2 L560.5 164.5 L563.5 164.7 L566.5 164.7 L569.6 164.4 L572.7 163.9 L575.8 163.5 L578.8 163.3 L581.9 163.5 L584.8 164.0 L587.7 164.9 L590.5 166.1 L593.2 167.6 L595.9 169.1 L598.6 170.6 L601.4 171.8" fill="none" stroke="#7a5a40" stroke-width="0.88" stroke-linecap="round" opacity="0.74"/>
<path d="M530.1 149.3 L533.1 149.1 L536.1 149.0 L539.1 149.0 L542.1 148.9 L545.1 149.0 L548.1 149.0 L551.1 149.1 L554.1 149.3 L557.1 149.3 L560.1 149.2 L563.1 149.1 L566.2 149.0 L569.2 149.0 L572.2 149.1 L575.2 149.4 L578.1 150.0 L581.0 150.7 L583.9 151.5 L586.8 152.5 L589.7 153.4 L592.5 154.3 L595.4 155.2 L598.3 155.9 L601.3 156.5 L604.2 157.1" fill="none" stroke="#2a180c" stroke-width="1.54" stroke-linecap="round" opacity="0.71"/>
<path d="M498.7 204.8 L501.6 204.0 L504.5 203.2 L507.4 202.4 L510.3 201.8 L513.2 201.1 L516.2 200.5 L519.1 199.9 L522.0 199.2 L525.0 198.5 L527.9 197.9 L530.9 197.3 L533.8 196.8 L536.8 196.4 L539.8 196.1 L542.8 196.0 L545.8 195.9 L548.8 196.1 L551.8 196.3" fill="none" stroke="#4a301c" stroke-width="1.23" stroke-linecap="round" opacity="0.83"/>
<path d="M425.3 159.5 L428.0 158.0 L430.6 156.6 L433.3 155.3 L436.0 153.9 L438.7 152.6 L441.4 151.4 L444.1 150.1 L446.9 148.8 L449.6 147.5 L452.3 146.2 L455.0 144.9 L457.7 143.6 L460.4 142.4 L463.2 141.3 L466.0 140.2 L468.9 139.3 L471.8 138.4 L474.7 137.7 L477.6 137.0 L480.5 136.3 L483.5 135.7 L486.4 135.1" fill="none" stroke="#2a180c" stroke-width="1.98" stroke-linecap="round" opacity="0.79"/>
<path d="M454.7 200.0 L457.3 198.6 L460.0 197.3 L462.7 195.9 L465.4 194.7 L468.1 193.4 L470.8 192.1 L473.5 190.6 L476.1 189.2 L478.8 187.8 L481.5 186.4 L484.2 185.0 L486.9 183.8 L489.8 182.8 L492.6 181.9 L495.5 181.2" fill="none" stroke="#d8bc9c" stroke-width="0.78" stroke-linecap="round" opacity="0.83"/>
<path d="M627.8 306.5 L629.6 308.9 L631.2 311.4 L632.8 314.0 L634.2 316.6 L635.6 319.3 L636.9 322.0 L638.1 324.8 L639.1 327.6 L640.1 330.4 L640.9 333.3 L641.2 336.3 L641.3 339.4 L641.3 342.5 L641.4 345.5 L641.9 348.5 L642.6 351.4 L643.6 354.3 L644.5 357.3 L645.1 360.3 L645.3 363.3 L644.8 366.3 L643.9 369.2 L642.8 372.1 L641.7 374.9 L640.8 377.8 L640.2 380.7 L639.9 383.8 L639.7 386.9 L639.3 389.9 L638.5 392.8" fill="none" stroke="#3e2818" stroke-width="1.10" stroke-linecap="round" opacity="0.76"/>
<path d="M541.4 197.3 L544.4 197.3 L547.4 197.2 L550.4 197.3 L553.4 197.4 L556.4 197.5 L559.4 197.7 L562.4 198.0 L565.4 198.3 L568.4 198.7 L571.3 199.0 L574.3 199.3 L577.3 199.7 L580.3 200.1 L583.2 200.7 L586.2 201.2 L589.1 201.9 L592.0 202.7 L594.8 203.6 L597.7 204.6 L600.5 205.6 L603.3 206.6 L606.1 207.7 L608.9 208.8 L611.7 209.8 L614.5 210.9 L617.3 212.1 L620.1 213.3" fill="none" stroke="#2a180c" stroke-width="1.85" stroke-linecap="round" opacity="0.69"/>
<path d="M426.1 198.3 L428.6 196.6 L431.1 195.0 L433.7 193.3 L436.2 191.8 L438.8 190.2 L441.4 188.7 L444.0 187.2 L446.6 185.8 L449.3 184.4 L452.1 183.3 L455.1 182.6 L458.2 182.0 L461.3 181.7 L464.5 181.4 L467.6 181.0 L470.6 180.4 L473.5 179.6 L476.3 178.5 L479.0 177.1 L481.6 175.5 L484.1 173.7 L486.7 171.8 L489.3 170.0 L491.9 168.3 L494.6 166.9 L497.5 165.9 L500.4 165.2" fill="none" stroke="#b8946e" stroke-width="0.95" stroke-linecap="round" opacity="0.83"/>
<path d="M643.9 329.9 L644.6 332.8 L645.1 335.7 L645.7 338.7 L646.2 341.6 L646.6 344.6 L646.9 347.6 L646.8 350.6 L646.3 353.7 L645.7 356.7 L645.2 359.7 L645.1 362.7 L645.4 365.7 L645.8 368.8 L646.2 371.8 L646.2 374.9 L645.7 377.9 L644.7 380.7 L643.2 383.4" fill="none" stroke="#4a301c" stroke-width="1.52" stroke-linecap="round" opacity="0.70"/>
<path d="M569.3 264.6 L572.3 265.2 L575.2 265.8 L578.1 266.5 L581.0 267.3 L583.9 268.2 L586.7 269.2 L589.7 269.6 L592.9 269.8 L596.1 269.9 L599.2 270.2 L602.2 270.9 L605.0 272.1 L607.5 273.9 L609.6 276.1 L611.5 278.6 L613.4 281.3 L615.2 283.8 L617.3 286.0 L619.7 287.8" fill="none" stroke="#4e3420" stroke-width="2.03" stroke-linecap="round" opacity="0.91"/>
<path d="M645.2 311.1 L646.5 313.8 L647.6 316.6 L648.7 319.4 L649.7 322.3 L650.5 325.1 L651.3 328.0 L651.9 331.0 L652.5 333.9 L653.0 336.9 L653.4 339.8 L653.7 342.8 L654.0 345.8 L655.0 348.7 L656.3 351.7 L657.6 354.6 L658.4 357.6 L658.3 360.6 L657.3 363.6 L655.9 366.5 L654.3 369.3 L653.2 372.2 L652.7 375.1 L652.8 378.2 L653.3 381.4 L653.6 384.6 L653.4 387.7 L652.4 390.5 L650.6 393.1 L648.3 395.4 L646.0 397.6 L644.0 400.0 L642.6 402.6 L641.8 405.6 L641.2 408.8 L640.6 412.0 L639.4 414.8" fill="none" stroke="#4e3420" stroke-width="1.67" stroke-linecap="round" opacity="0.66"/>
<path d="M616.9 345.1 L617.8 348.0 L618.5 350.9 L619.0 353.9 L619.4 356.9 L619.6 359.9 L620.5 362.8 L621.7 365.8 L622.9 368.9 L623.7 372.0 L623.7 375.0 L622.7 377.9 L621.0 380.5 L618.8 383.0 L616.5 385.3 L614.5 387.7" fill="none" stroke="#4a301c" stroke-width="1.55" stroke-linecap="round" opacity="0.85"/>
<path d="M587.7 267.3 L590.5 268.4 L593.3 269.5 L596.0 270.8 L598.7 272.1 L601.3 273.5 L603.9 275.0 L606.5 276.6 L609.0 278.2 L611.2 280.3 L613.1 282.8 L614.9 285.5 L616.6 288.1 L618.6 290.4 L620.9 292.3 L623.5 294.0 L626.3 295.4 L629.1 296.9 L631.7 298.6 L633.9 300.7 L635.6 303.2 L636.7 306.1 L637.5 309.2 L638.1 312.3 L638.9 315.3 L640.0 318.1" fill="none" stroke="#4a301c" stroke-width="2.12" stroke-linecap="round" opacity="0.64"/>
<path d="M428.6 182.2 L431.2 180.7 L433.8 179.2 L436.4 177.7 L439.0 176.3 L441.7 174.9 L444.4 173.5 L447.1 172.3 L449.9 171.1 L452.7 170.0 L455.5 168.9 L458.3 167.8 L461.1 166.7 L463.9 165.7 L466.7 164.5 L469.4 163.4" fill="none" stroke="#d8bc9c" stroke-width="0.69" stroke-linecap="round" opacity="0.84"/>
<path d="M399.6 224.3 L401.8 222.2 L403.9 220.1 L406.1 218.1 L408.4 216.1 L410.6 214.1 L412.9 212.2 L415.3 210.3 L417.6 208.5 L420.0 206.7 L422.5 204.9 L424.9 203.2 L427.4 201.5 L429.9 199.7 L432.3 198.0 L434.8 196.4" fill="none" stroke="#4a301c" stroke-width="1.52" stroke-linecap="round" opacity="0.71"/>
<path d="M538.5 272.0 L541.5 271.5 L544.5 271.2 L547.4 270.9 L550.4 270.8 L553.4 270.7 L556.4 270.8 L559.4 270.9 L562.4 271.1 L565.4 271.5 L568.4 271.9 L571.3 272.4 L574.4 272.3 L577.6 271.8 L580.8 271.2 L584.1 270.7 L587.3 270.6 L590.3 271.0 L593.0 272.2 L595.5 274.0 L597.8 276.4 L599.8 279.0 L601.8 281.6 L603.9 284.0 L606.2 286.0 L608.8 287.5 L611.6 288.6 L614.8 289.5 L618.0 290.3 L621.1 291.3 L623.9 292.7 L626.3 294.5 L628.2 296.9 L629.5 299.7 L630.4 302.9" fill="none" stroke="#2a180c" stroke-width="1.15" stroke-linecap="round" opacity="0.93"/>
<path d="M399.6 222.5 L401.8 220.4 L404.0 218.3 L406.2 216.3 L408.4 214.3 L410.7 212.4 L413.0 210.5 L415.4 208.6 L417.8 206.8 L420.3 205.1 L422.7 203.4 L425.2 201.7 L427.7 200.1 L430.2 198.4 L432.7 196.7 L435.2 195.0" fill="none" stroke="#2a180c" stroke-width="1.88" stroke-linecap="round" opacity="0.70"/>
<path d="M465.7 201.1 L468.4 199.8 L471.1 198.5 L473.9 197.3 L476.6 196.2 L479.4 195.1 L482.1 193.6 L484.7 192.0 L487.2 190.1 L489.7 188.2 L492.2 186.3 L494.8 184.5 L497.5 183.1 L500.3 181.9 L503.3 181.2 L506.3 180.9" fill="none" stroke="#d8bc9c" stroke-width="0.65" stroke-linecap="round" opacity="0.66"/>
<path d="M588.8 226.8 L591.7 227.7 L594.6 228.7 L597.4 229.7 L600.2 230.8 L603.0 231.9 L605.7 233.2 L608.4 234.6 L611.0 236.0 L613.6 237.6 L616.2 239.1 L618.8 240.5 L621.5 241.9 L624.2 243.2 L626.8 244.6 L629.4 246.1" fill="none" stroke="#4a301c" stroke-width="1.39" stroke-linecap="round" opacity="0.93"/>
<path d="M565.2 170.2 L568.1 170.6 L571.1 171.0 L574.1 171.4 L577.0 171.9 L580.0 172.5 L583.1 172.4 L586.2 171.8 L589.5 171.1 L592.7 170.4 L595.8 170.2 L598.8 170.6 L601.7 171.7 L604.3 173.4 L606.7 175.5 L609.1 177.8" fill="none" stroke="#2a180c" stroke-width="1.10" stroke-linecap="round" opacity="0.73"/>
<path d="M561.4 204.0 L564.4 204.3 L567.4 204.6 L570.4 205.0 L573.3 205.5 L576.3 206.0 L579.2 206.6 L582.2 207.3 L585.1 208.0 L588.0 208.7 L591.2 208.4 L594.6 207.4 L598.1 206.2 L601.6 205.1 L604.9 204.8 L607.8 205.4 L610.4 207.1 L612.6 209.7 L614.5 212.9 L616.3 216.1 L618.3 219.0 L620.6 221.0 L623.3 222.2 L626.6 222.5 L630.2 222.3 L633.9 221.9 L637.5 221.9 L640.7 222.5" fill="none" stroke="#2a180c" stroke-width="1.02" stroke-linecap="round" opacity="0.78"/>
<path d="M550.3 228.6 L553.3 228.6 L556.3 228.8 L559.3 228.9 L562.2 229.2 L565.2 229.5 L568.2 229.9 L571.2 230.3 L574.1 230.8 L577.1 231.4 L580.0 232.1 L582.9 232.8 L585.7 234.2 L588.3 236.1 L590.7 238.3 L593.2 240.5 L595.7 242.4 L598.4 243.8 L601.3 244.6 L604.4 244.9 L607.7 245.0 L611.0 245.0 L614.2 245.3 L617.2 246.1 L619.8 247.6 L622.0 249.7 L623.9 252.3 L625.6 255.2 L627.3 258.0 L629.1 260.6 L631.2 262.8 L633.7 264.5 L636.5 265.8 L639.6 266.8 L642.8 267.9" fill="none" stroke="#7a5a40" stroke-width="1.29" stroke-linecap="round" opacity="0.64"/>
<path d="M538.6 190.4 L541.6 190.3 L544.6 190.3 L547.6 190.3 L550.6 190.3 L553.6 190.4 L556.6 190.6 L559.6 190.8 L562.6 191.1 L565.6 191.4 L568.5 191.7 L571.5 192.2 L574.5 192.6 L577.6 192.2 L580.8 191.2 L584.1 189.9 L587.5 188.7 L590.7 187.9 L593.8 188.0 L596.6 189.0 L599.2 190.9 L601.6 193.4 L603.8 196.2 L606.0 198.9 L608.4 201.1 L611.0 202.7 L614.0 203.4 L617.2 203.5 L620.7 203.1 L624.2 202.6 L627.7 202.4 L630.9 202.7 L633.7 203.9 L636.0 205.9 L637.9 208.6 L639.5 211.7 L640.9 215.0 L642.6 218.0" fill="none" stroke="#4a301c" stroke-width="1.32" stroke-linecap="round" opacity="0.74"/>
<path d="M575.3 215.0 L578.2 215.6 L581.2 216.2 L584.1 216.9 L587.0 217.7 L589.9 218.5 L592.7 219.4 L595.6 220.3 L598.4 221.3 L601.2 222.4 L604.0 223.5 L606.9 224.2 L610.0 224.8 L613.0 225.4 L616.0 226.1 L618.8 227.1 L621.5 228.5 L623.9 230.3 L626.2 232.3 L628.4 234.5 L630.6 236.7 L632.9 238.6 L635.3 240.3 L638.0 241.8 L640.8 243.1 L643.6 244.4 L646.3 245.8 L648.8 247.5 L651.0 249.5 L652.9 251.9 L654.6 254.5" fill="none" stroke="#2a180c" stroke-width="1.45" stroke-linecap="round" opacity="0.63"/>
<path d="M411.0 162.6 L413.6 161.0 L416.2 159.4 L418.8 157.9 L421.4 156.4 L424.0 155.0 L426.6 153.6 L429.2 152.0 L431.8 150.5 L434.3 148.8 L436.9 147.2 L439.4 145.6 L442.0 144.0 L444.7 142.6 L447.4 141.3 L450.1 140.2 L453.0 139.2 L455.8 138.3 L458.8 137.5" fill="none" stroke="#b8946e" stroke-width="0.64" stroke-linecap="round" opacity="0.63"/>
<path d="M634.4 320.2 L635.7 322.9 L636.9 325.6 L638.0 328.4 L639.0 331.2 L639.9 334.1 L640.7 337.0 L641.4 339.9 L642.0 342.8 L642.5 345.8 L642.9 348.8 L643.2 351.8 L645.2 354.6 L648.1 357.5 L651.1 360.5 L653.0 363.5 L653.0 366.6 L651.3 369.4 L648.2 372.0 L644.7 374.4 L641.9 376.9 L640.6 379.7 L640.9 382.9 L642.5 386.5 L644.3 390.4 L645.5 394.1 L645.1 397.2 L643.0 399.5 L639.5 401.1 L635.4 402.2 L631.6 403.4 L628.9 405.2 L627.6 407.9 L627.4 411.6" fill="none" stroke="#4e3420" stroke-width="1.15" stroke-linecap="round" opacity="0.95"/>
<path d="M553.8 170.8 L556.8 171.0 L559.8 171.2 L562.8 171.5 L565.8 171.8 L568.8 172.1 L571.7 172.6 L574.7 173.0 L577.6 173.8 L580.5 174.9 L583.3 176.1 L586.1 177.4 L588.9 178.6 L591.8 179.5 L594.7 180.2 L597.7 180.6 L600.7 180.8 L603.8 181.0 L606.9 181.3 L609.9 181.8 L612.8 182.7 L615.5 183.9" fill="none" stroke="#d8bc9c" stroke-width="0.83" stroke-linecap="round" opacity="0.66"/>
<path d="M615.6 328.2 L617.2 330.8 L618.6 333.4 L619.9 336.1 L621.2 338.8 L622.2 341.6 L623.2 344.5 L624.0 347.4 L624.7 350.3 L625.2 353.2 L625.5 356.2 L625.9 359.2 L626.0 362.2 L626.0 365.2 L625.9 368.2 L625.6 371.2 L625.1 374.1 L624.5 377.1 L623.8 380.0 L623.0 382.9 L622.0 385.7 L620.8 388.5 L619.5 391.2 L618.0 393.8 L616.5 396.3 L614.8 398.8 L613.0 401.2 L611.1 403.6 L609.1 405.8 L607.0 407.9 L604.8 410.0" fill="none" stroke="#4e3420" stroke-width="1.97" stroke-linecap="round" opacity="0.76"/>
<path d="M539.4 238.1 L542.4 237.8 L545.4 237.7 L548.3 237.6 L551.3 237.6 L554.3 237.6 L557.3 237.8 L560.3 238.0 L563.3 238.2 L566.4 238.1 L569.4 237.6 L572.5 237.1 L575.7 236.6 L578.8 236.3 L581.8 236.5 L584.7 237.1 L587.5 238.3 L590.2 239.8 L592.8 241.7 L595.3 243.6 L597.8 245.4 L600.4 247.0 L603.1 248.3 L605.9 249.3 L609.0 250.0" fill="none" stroke="#4a301c" stroke-width="1.80" stroke-linecap="round" opacity="0.78"/>
<path d="M647.3 304.8 L648.7 307.4 L649.9 310.2 L651.1 312.9 L652.3 315.7 L653.3 318.5 L654.2 321.4 L655.0 324.3 L654.9 327.4 L654.2 330.7 L653.4 333.9 L653.0 337.1 L653.5 340.0 L654.8 342.9 L656.7 345.7 L658.4 348.5 L659.5 351.5 L659.5 354.5 L658.5 357.5 L656.8 360.4 L655.2 363.4 L654.1 366.3 L653.8 369.3" fill="none" stroke="#2e1c10" stroke-width="2.05" stroke-linecap="round" opacity="0.91"/>
<path d="M380.0 198.0 L382.2 195.9 L384.5 193.9 L386.7 191.9 L389.0 190.0 L391.3 188.1 L393.6 186.2 L396.0 184.3 L398.4 182.5 L400.8 180.7 L403.2 178.9 L405.6 177.2 L408.1 175.5 L410.7 174.0 L413.4 172.6 L416.3 171.5 L419.2 170.5 L422.1 169.4 L424.9 168.4 L427.8 167.3 L430.5 166.0 L433.1 164.5 L435.6 162.9 L438.1 161.1 L440.5 159.2 L442.9 157.2 L445.3 155.3 L447.7 153.5 L450.3 151.9 L453.0 150.5 L455.8 149.4 L458.6 148.5 L461.6 147.9 L464.6 147.4 L467.7 147.0 L470.7 146.7 L473.8 146.3 L476.8 145.9" fill="none" stroke="#cfb090" stroke-width="0.96" stroke-linecap="round" opacity="0.95"/>
<path d="M543.4 190.0 L546.4 190.0 L549.4 190.0 L552.4 190.1 L555.4 190.3 L558.4 190.4 L561.4 190.7 L564.4 191.0 L567.4 191.3 L570.3 191.7 L573.3 192.2 L576.3 192.7 L579.2 193.1 L582.2 193.5 L585.2 193.9 L588.1 194.4 L591.1 195.0 L594.0 195.7 L596.9 196.5 L599.7 197.5 L602.5 198.6 L605.3 199.8 L608.1 200.9 L610.8 202.1 L613.6 203.3 L616.4 204.4 L619.2 205.5 L622.0 206.6 L624.7 207.8 L627.5 209.0 L630.2 210.3 L632.8 211.8 L635.4 213.4 L637.8 215.0 L640.3 216.8" fill="none" stroke="#4a301c" stroke-width="2.21" stroke-linecap="round" opacity="0.67"/>
<path d="M577.5 250.8 L580.4 251.6 L583.3 252.4 L586.2 253.2 L589.0 254.2 L591.8 255.2 L594.6 256.3 L597.4 257.5 L599.9 259.3 L602.1 261.7 L604.1 264.4 L606.2 266.9 L608.4 269.1 L610.9 270.7 L613.8 271.8 L616.9 272.5 L620.2 273.1 L623.4 273.8 L626.3 275.0 L628.7 276.8 L630.6 279.2 L632.0 282.1" fill="none" stroke="#b08c68" stroke-width="0.98" stroke-linecap="round" opacity="0.92"/>
<path d="M465.2 156.8 L468.0 155.8 L470.9 154.8 L473.7 153.8 L476.6 153.0 L479.4 152.1 L482.3 151.1 L485.1 150.1 L487.9 149.0 L490.7 147.9 L493.6 146.8 L496.4 145.8 L499.3 145.0 L502.2 144.3 L505.2 143.7 L508.1 143.4" fill="none" stroke="#d8bc9c" stroke-width="0.68" stroke-linecap="round" opacity="0.66"/>
<path d="M477.1 133.8 L480.0 133.0 L482.9 132.3 L485.9 131.6 L488.8 130.9 L491.7 130.3 L494.7 129.7 L497.6 129.1 L500.5 128.4 L503.4 127.7 L506.3 126.8 L509.2 125.9 L512.2 125.1 L515.1 124.4 L518.0 123.7 L521.0 123.3 L524.0 123.1 L527.0 123.0 L530.0 123.1 L533.0 123.4 L536.1 123.7 L539.1 124.1 L542.1 124.4" fill="none" stroke="#4a301c" stroke-width="1.84" stroke-linecap="round" opacity="0.84"/>
<path d="M402.2 175.5 L404.6 173.7 L407.1 172.0 L409.6 170.4 L412.1 168.7 L414.6 167.1 L417.2 165.5 L419.8 164.0 L422.3 162.5 L425.0 161.0 L427.6 159.6 L430.2 158.1 L432.8 156.6 L435.5 155.2 L438.1 153.8 L440.8 152.4 L443.4 151.1 L446.2 149.8 L448.9 148.5 L451.6 147.3 L454.4 146.2 L457.2 145.2 L460.1 144.2 L462.9 143.2 L465.8 142.3 L468.6 141.4 L471.5 140.5 L474.4 139.6 L477.2 138.7 L480.1 137.9 L483.0 137.1 L485.9 136.2" fill="none" stroke="#e6d4bc" stroke-width="1.03" stroke-linecap="round" opacity="0.73"/>
<path d="M456.6 219.9 L459.2 218.3 L461.8 216.8 L464.4 215.4 L467.1 214.0 L469.7 212.6 L472.4 211.3 L475.2 210.0 L477.9 208.8 L480.5 207.3 L483.1 205.6 L485.6 203.8 L488.1 201.9 L490.6 200.1 L493.2 198.4 L495.9 197.0 L498.6 195.8 L501.5 195.0 L504.5 194.5 L507.5 194.3 L510.6 194.3 L513.7 194.5 L516.9 194.8 L519.9 194.9 L523.0 195.0" fill="none" stroke="#4a301c" stroke-width="1.59" stroke-linecap="round" opacity="0.89"/>
<path d="M530.6 248.7 L533.6 248.2 L536.6 247.8 L539.5 247.5 L542.5 247.2 L545.5 247.0 L548.5 246.9 L551.5 246.9 L554.5 246.9 L557.5 247.0 L560.5 247.2 L563.5 247.5 L566.5 247.8 L569.5 248.0 L572.5 248.1 L575.5 248.2 L578.5 248.3 L581.5 248.7 L584.5 249.2 L587.4 250.0 L590.2 251.1 L592.9 252.4 L595.6 253.8 L598.2 255.3 L600.9 256.8 L603.5 258.3 L606.2 259.6 L608.9 260.8 L611.7 262.0 L614.5 263.2 L617.2 264.4 L619.9 265.8 L622.5 267.4 L624.9 269.2 L627.1 271.2 L629.2 273.4 L631.2 275.7 L633.1 278.1" fill="none" stroke="#7a5a40" stroke-width="1.02" stroke-linecap="round" opacity="0.76"/>
<path d="M592.0 270.6 L594.8 271.8 L597.5 273.1 L600.1 274.5 L602.8 276.0 L605.3 277.5 L607.8 279.1 L610.3 280.9 L612.7 282.6 L615.1 284.5 L618.1 285.5 L621.7 285.9 L625.4 286.3 L628.8 287.1 L631.5 288.7 L633.2 291.1 L634.1 294.3 L634.4 297.9 L634.5 301.6 L635.0 304.9 L636.3 307.7 L638.4 309.9 L641.3 311.7 L644.6 313.3 L647.8 315.2 L650.2 317.4 L651.5 320.1 L651.6 323.2 L650.8 326.6" fill="none" stroke="#3e2818" stroke-width="1.02" stroke-linecap="round" opacity="0.61"/>
<path d="M645.3 310.6 L646.5 313.3 L647.7 316.1 L648.8 318.9 L649.8 321.7 L650.6 324.6 L651.4 327.5 L652.1 330.4 L652.6 333.3 L653.1 336.3 L653.6 339.3 L653.9 342.2 L654.2 345.2 L653.8 348.3 L652.9 351.3 L652.0 354.4 L651.4 357.4 L651.3 360.4 L651.9 363.4 L652.7 366.5 L653.4 369.6 L653.6 372.7 L653.1 375.6 L651.8 378.4 L650.1 381.1 L648.2 383.7 L646.7 386.3 L645.8 389.2 L645.3 392.2 L645.1 395.4 L644.8 398.6 L644.0 401.5 L642.6 404.2 L640.4 406.4 L637.9 408.3 L635.3 410.2 L633.0 412.2" fill="none" stroke="#2e1c10" stroke-width="1.65" stroke-linecap="round" opacity="0.71"/>
<path d="M641.8 351.9 L641.9 354.9 L642.0 357.9 L641.9 360.9 L641.8 363.9 L641.5 366.9 L641.7 369.9 L642.2 373.0 L642.5 376.1 L642.5 379.2 L641.9 382.1 L640.6 384.9 L638.8 387.4 L636.9 389.9 L635.1 392.4 L633.6 395.0" fill="none" stroke="#2e1c10" stroke-width="2.09" stroke-linecap="round" opacity="0.63"/>
<path d="M541.6 262.8 L544.6 262.5 L547.6 262.3 L550.6 262.2 L553.6 262.2 L556.6 262.2 L559.6 262.4 L562.6 262.6 L565.6 262.6 L568.6 262.5 L571.6 262.4 L574.7 262.4 L577.7 262.6 L580.7 263.0 L583.6 263.7 L586.4 264.8 L589.1 266.1 L591.8 267.6 L594.4 269.2 L596.9 270.9 L599.5 272.4 L602.2 273.8 L604.9 275.1" fill="none" stroke="#2a180c" stroke-width="1.83" stroke-linecap="round" opacity="0.76"/>
<path d="M587.2 254.0 L590.0 255.0 L592.8 256.0 L595.6 257.2 L598.3 258.4 L601.0 259.7 L603.7 261.0 L606.3 262.5 L608.8 264.2 L611.3 266.0 L613.7 267.8 L616.1 269.6 L618.6 271.3 L621.1 272.9 L623.6 274.5 L626.1 276.2 L628.6 277.9 L630.9 279.9 L633.0 282.0" fill="none" stroke="#2a180c" stroke-width="2.35" stroke-linecap="round" opacity="0.85"/>
<path d="M455.6 217.8 L458.2 216.2 L460.8 214.7 L463.4 213.3 L466.1 211.9 L468.7 210.5 L471.4 209.2 L474.2 207.9 L476.9 206.7 L479.7 205.5 L482.4 204.4 L485.2 203.2 L487.9 202.0 L490.7 200.8 L493.4 199.6 L496.2 198.4 L499.0 197.4 L501.9 196.4 L504.7 195.5 L507.6 194.8 L510.6 194.2 L513.6 193.7 L516.5 193.3 L519.5 193.0 L522.5 192.7 L525.5 192.5 L528.5 192.2 L531.5 192.0 L534.5 191.7 L537.5 191.4 L540.5 191.0" fill="none" stroke="#4a301c" stroke-width="1.76" stroke-linecap="round" opacity="0.87"/>
<path d="M573.9 224.9 L576.8 225.5 L579.7 226.1 L582.7 226.8 L585.6 227.6 L588.5 228.4 L591.3 229.3 L594.2 230.2 L597.2 230.6 L600.4 230.5 L603.7 230.3 L607.0 230.3 L610.0 230.8 L612.8 231.9 L615.3 233.7 L617.5 236.0 L619.4 238.6 L621.4 241.2 L623.5 243.6 L625.9 245.4 L628.6 246.8 L631.6 247.7" fill="none" stroke="#4a301c" stroke-width="1.59" stroke-linecap="round" opacity="0.91"/>
<path d="M495.3 167.8 L498.2 167.1 L501.1 166.5 L504.1 165.9 L507.0 165.3 L510.0 164.8 L512.9 164.3 L515.9 163.9 L518.9 163.5 L521.9 163.2 L524.9 162.9 L527.8 162.6 L530.8 162.4 L533.8 162.2 L536.8 162.5 L539.9 163.2 L542.9 164.2 L545.9 165.4 L548.9 166.6 L551.9 167.6 L554.9 168.2 L557.9 168.5 L560.9 168.4 L563.9 167.9 L567.0 167.2 L570.1 166.3 L573.3 165.5 L576.4 164.9 L579.4 164.7 L582.4 165.0 L585.4 165.8 L588.2 167.0 L590.9 168.6 L593.5 170.4 L596.1 172.3 L598.7 174.1 L601.4 175.7 L604.2 177.0 L607.0 177.9 L610.0 178.3" fill="none" stroke="#2a180c" stroke-width="1.88" stroke-linecap="round" opacity="0.69"/>
<path d="M530.0 185.1 L532.9 184.9 L535.9 184.7 L538.9 184.5 L541.9 184.4 L544.9 184.4 L547.9 184.7 L550.9 185.4 L553.9 186.4 L556.9 187.4 L559.8 188.4 L562.8 189.3 L565.7 189.8 L568.7 190.1 L571.8 190.0 L574.8 189.7 L577.9 189.3" fill="none" stroke="#4a301c" stroke-width="1.91" stroke-linecap="round" opacity="0.72"/>
<path d="M390.1 227.6 L392.2 225.4 L394.3 223.2 L396.4 221.1 L398.5 219.0 L400.7 216.9 L402.9 214.9 L405.1 212.9 L407.4 210.9 L409.7 209.0 L411.8 206.9 L413.8 204.6 L415.7 202.1 L417.6 199.7 L419.5 197.2 L421.5 194.9 L423.7 192.7 L426.0 190.8 L428.5 189.2 L431.2 187.8 L434.0 186.6 L436.9 185.6 L439.9 184.8 L442.9 184.0 L445.8 183.1 L448.7 182.2 L451.5 181.0 L454.2 179.7" fill="none" stroke="#4a301c" stroke-width="1.45" stroke-linecap="round" opacity="0.89"/>
<path d="M442.4 209.3 L444.9 207.7 L447.5 206.1 L450.0 204.6 L452.6 203.1 L455.3 201.6 L457.9 200.2 L460.6 198.8 L463.3 197.5 L466.0 196.2 L468.7 195.0 L471.5 193.8 L474.2 192.6 L477.0 191.5 L479.9 190.5 L482.8 189.7 L485.7 189.1 L488.7 188.6 L491.7 188.1 L494.7 187.5 L497.7 187.0 L500.6 186.3 L503.5 185.6 L506.4 184.7 L509.2 183.8 L512.1 182.8 L515.0 181.8 L517.8 180.8 L520.7 179.9 L523.7 179.2 L526.6 178.7 L529.6 178.4 L532.6 178.3 L535.6 178.4 L538.6 178.6 L541.7 178.9 L544.7 179.3 L547.7 179.7 L550.7 180.0 L553.7 180.2" fill="none" stroke="#b08c68" stroke-width="1.13" stroke-linecap="round" opacity="0.62"/>
<path d="M400.4 174.2 L402.9 172.5 L405.3 170.8 L407.8 169.1 L410.3 167.5 L412.9 165.8 L415.4 164.3 L418.0 162.7 L420.6 161.2 L423.2 159.7 L425.8 158.3 L428.4 156.8 L431.0 155.3 L433.6 153.7 L436.1 152.1 L438.6 150.4 L441.2 148.8 L443.8 147.2 L446.4 145.8 L449.1 144.5 L451.9 143.3 L454.7 142.3 L457.6 141.5 L460.5 140.7 L463.5 140.1 L466.4 139.4 L469.4 138.8 L472.3 138.1 L475.2 137.3 L478.1 136.5 L480.9 135.6 L483.8 134.6 L486.6 133.5 L489.4 132.5" fill="none" stroke="#b08c68" stroke-width="1.01" stroke-linecap="round" opacity="0.88"/>
<path d="M625.9 281.3 L628.1 283.4 L630.2 285.6 L632.2 287.8 L634.1 290.1 L636.0 292.4 L637.8 294.8 L639.6 297.2 L641.2 299.7 L644.1 301.4 L647.7 302.7 L651.4 304.1 L654.3 305.9 L655.9 308.5 L656.1 311.7 L655.1 315.4 L653.8 319.1 L653.0 322.5 L653.2 325.6 L654.9 328.3 L657.6 330.7 L660.8 333.1 L663.4 335.7 L664.8 338.5 L664.6 341.6" fill="none" stroke="#3e2818" stroke-width="2.38" stroke-linecap="round" opacity="0.89"/>
<path d="M440.9 228.0 L443.3 226.3 L445.7 224.5 L448.2 222.8 L450.7 221.1 L453.2 219.5 L455.8 217.9 L458.3 216.4 L460.9 214.9 L463.6 213.5 L466.2 212.0 L468.9 210.7 L471.7 209.5 L474.6 208.6 L477.5 207.9 L480.6 207.3 L483.6 206.8 L486.6 206.2 L489.5 205.5 L492.4 204.7 L495.3 203.7 L498.0 202.5 L500.8 201.2 L503.5 199.8 L506.2 198.4 L509.0 197.0 L511.7 195.7 L514.6 194.7 L517.5 193.9 L520.4 193.3 L523.4 193.1 L526.5 193.1 L529.5 193.4 L532.6 193.7 L535.6 194.1" fill="none" stroke="#4a301c" stroke-width="1.08" stroke-linecap="round" opacity="0.87"/>
<path d="M625.5 304.8 L627.3 307.2 L629.0 309.6 L630.7 312.1 L632.2 314.7 L633.7 317.3 L635.1 320.0 L636.3 322.7 L637.5 325.4 L638.6 328.2 L641.3 330.4 L644.9 332.4 L648.5 334.7 L651.1 337.2 L652.1 340.1 L651.2 343.3 L648.9 346.5 L646.2 349.8 L644.1 353.0 L643.4 356.1 L644.3 359.1 L646.7 362.1 L649.6 365.2 L652.0 368.5 L652.9 371.6 L652.1 374.5 L649.5 377.1 L645.9 379.3 L642.4 381.5" fill="none" stroke="#4e3420" stroke-width="1.88" stroke-linecap="round" opacity="0.92"/>
<path d="M544.0 230.2 L547.0 230.1 L550.0 230.0 L553.0 230.1 L556.0 230.2 L559.0 230.4 L562.0 230.6 L564.9 230.9 L567.9 231.3 L570.9 231.7 L573.8 232.2 L576.7 233.0 L579.6 234.1 L582.4 235.4 L585.2 236.7 L587.9 237.9 L590.7 239.0 L593.6 239.8 L596.6 240.5 L599.6 241.0 L602.6 241.6 L605.6 242.2 L608.5 243.1 L611.2 244.2 L613.8 245.7 L616.3 247.5 L618.6 249.5 L620.8 251.6 L623.1 253.7 L625.3 255.7 L627.7 257.5 L630.2 259.2" fill="none" stroke="#2a180c" stroke-width="2.22" stroke-linecap="round" opacity="0.63"/>
<path d="M435.1 177.9 L437.7 176.4 L440.4 175.0 L443.0 173.6 L445.7 172.3 L448.4 171.0 L451.1 169.7 L453.9 168.4 L456.6 167.2 L459.4 166.1 L462.2 164.9 L465.0 163.8 L467.8 162.8 L470.5 161.5 L473.1 160.0 L475.7 158.3 L478.3 156.6 L480.9 154.9 L483.6 153.4 L486.4 152.1 L489.2 151.0 L492.1 150.3 L495.1 149.9 L498.1 149.7 L501.2 149.8 L504.3 150.1 L507.4 150.3 L510.5 150.5 L513.5 150.6 L516.5 150.4 L519.5 150.0 L522.5 149.4 L525.4 148.6 L528.3 147.6 L531.2 146.6 L534.2 145.6 L537.2 144.7 L540.1 144.1" fill="none" stroke="#2a180c" stroke-width="2.26" stroke-linecap="round" opacity="0.93"/>
<path d="M575.2 254.2 L578.1 254.9 L581.0 255.6 L583.9 256.5 L586.8 257.4 L589.6 258.4 L592.4 259.4 L595.2 260.6 L597.9 261.8 L600.6 263.1 L603.3 264.5 L605.8 266.1 L608.4 267.7 L610.8 269.5 L613.3 271.2 L615.8 272.8 L618.3 274.5 L620.8 276.1 L623.3 277.8 L625.8 279.6 L628.1 281.5 L630.3 283.5 L632.3 285.7 L634.2 288.1 L636.0 290.5 L637.7 293.0 L639.5 295.4 L641.2 297.8" fill="none" stroke="#b08c68" stroke-width="0.83" stroke-linecap="round" opacity="0.61"/>
<path d="M541.5 246.4 L544.5 246.2 L547.5 246.1 L550.5 246.0 L553.5 246.0 L556.5 246.1 L559.5 246.3 L562.5 246.5 L565.5 246.9 L568.4 247.3 L571.4 247.6 L574.4 248.0 L577.4 248.4 L580.3 248.9 L583.3 249.5 L586.2 250.2 L589.1 251.0 L591.9 252.0 L594.7 253.2 L597.4 254.4 L600.1 255.7 L602.8 257.0 L605.5 258.4 L608.2 259.7 L610.8 261.1 L613.5 262.5 L616.1 264.0 L618.7 265.5 L621.2 267.1" fill="none" stroke="#7a5a40" stroke-width="0.70" stroke-linecap="round" opacity="0.85"/>
<path d="M462.2 157.5 L465.0 156.4 L467.9 155.4 L470.7 154.5 L473.6 153.5 L476.4 152.6 L479.3 151.8 L482.2 150.9 L485.1 150.2 L488.0 149.4 L490.9 148.8 L493.9 148.3 L496.9 147.9 L499.9 147.5 L502.9 147.3 L505.9 147.0 L508.9 146.7 L511.8 146.3 L514.8 145.9 L517.8 145.4 L520.7 144.8 L523.7 144.2 L526.6 143.7 L529.6 143.1 L532.6 142.7 L535.6 142.3 L538.6 142.1 L541.6 142.1" fill="none" stroke="#2a180c" stroke-width="1.06" stroke-linecap="round" opacity="0.92"/>
<path d="M581.5 188.3 L584.4 188.9 L587.4 189.6 L590.3 190.3 L593.2 191.1 L596.0 192.0 L598.9 192.9 L601.8 193.8 L604.8 194.1 L608.1 193.9 L611.4 193.6 L614.6 193.5 L617.7 194.0 L620.5 195.1 L622.9 197.0 L625.1 199.4 L627.1 202.0 L629.2 204.5 L631.5 206.6 L634.1 208.1 L637.0 209.0 L640.2 209.5" fill="none" stroke="#2e1c10" stroke-width="2.37" stroke-linecap="round" opacity="0.92"/>
<path d="M380.2 233.2 L382.2 230.9 L384.2 228.7 L386.2 226.5 L388.2 224.3 L390.3 222.1 L392.4 220.0 L394.6 217.9 L396.7 215.8 L398.9 213.7 L401.1 211.7 L403.4 209.7 L405.6 207.8 L407.7 205.5 L409.5 203.0 L411.2 200.4 L412.9 197.7 L414.6 195.0 L416.4 192.4 L418.4 190.1 L420.7 188.0 L423.2 186.4 L425.9 185.0 L428.8 184.0 L431.8 183.2 L435.0 182.6 L438.1 182.0 L441.2 181.4 L444.2 180.5 L447.0 179.4 L449.6 178.0 L452.1 176.3 L454.5 174.4 L456.8 172.2 L459.1 170.0 L461.4 167.8 L463.8 165.7" fill="none" stroke="#7a5a40" stroke-width="1.00" stroke-linecap="round" opacity="0.79"/>
<path d="M437.6 180.9 L440.2 179.5 L442.8 178.0 L445.5 176.7 L448.2 175.3 L450.9 174.0 L453.6 172.7 L456.3 171.5 L459.1 170.3 L461.9 169.2 L464.6 168.0 L467.4 167.0 L470.2 165.9 L473.1 165.1 L476.1 164.5 L479.1 164.0 L482.2 163.7 L485.2 163.4 L488.3 163.1 L491.3 162.7 L494.2 162.1 L497.1 161.4 L500.0 160.5 L502.8 159.5 L505.7 158.3 L508.5 157.2 L511.3 156.0 L514.2 155.0 L517.1 154.2 L520.1 153.6 L523.1 153.3 L526.1 153.2 L529.1 153.4 L532.1 153.7 L535.2 154.2 L538.2 154.7 L541.2 155.1 L544.2 155.5" fill="none" stroke="#cfb090" stroke-width="0.75" stroke-linecap="round" opacity="0.67"/>
<path d="M621.1 292.2 L623.2 294.3 L625.2 296.5 L627.1 298.8 L629.0 301.2 L630.8 303.6 L632.5 306.0 L634.2 308.5 L635.7 311.1 L635.9 314.5 L635.2 318.3 L634.2 322.2 L633.8 325.8 L634.7 328.7 L636.9 331.0 L640.2 332.9 L643.7 335.0 L646.5 337.5 L648.0 340.3 L647.9 343.3 L646.3 346.6 L644.0 349.9 L641.8 353.1 L640.6 356.2 L640.8 359.2" fill="none" stroke="#4e3420" stroke-width="2.37" stroke-linecap="round" opacity="0.64"/>
<path d="M444.3 186.0 L447.0 184.6 L449.6 183.2 L452.3 181.9 L455.0 180.6 L457.7 179.3 L460.5 178.1 L463.2 176.9 L466.0 175.8 L468.8 174.7 L471.6 173.6 L474.4 172.6 L477.2 171.6 L480.1 170.7 L483.1 170.0 L486.0 169.4 L489.0 169.0 L492.0 168.5 L495.0 168.1 L498.0 167.6 L500.9 167.0 L503.8 166.4 L506.7 165.6 L509.6 164.8 L512.5 163.9 L515.4 163.0 L518.3 162.2 L521.3 161.5 L524.2 160.9 L527.2 160.5 L530.2 160.2 L533.2 160.1 L536.2 160.2 L539.2 160.5 L542.2 160.8 L545.2 161.1 L548.2 161.5" fill="none" stroke="#2a180c" stroke-width="1.37" stroke-linecap="round" opacity="0.63"/>
<path d="M514.5 161.9 L517.5 161.5 L520.5 161.2 L523.5 160.8 L526.4 160.6 L529.4 160.3 L532.5 160.4 L535.5 160.8 L538.5 161.4 L541.5 162.1 L544.5 162.8 L547.5 163.4 L550.5 163.9 L553.5 164.1 L556.5 164.1 L559.6 163.9 L562.6 163.4" fill="none" stroke="#2a180c" stroke-width="2.05" stroke-linecap="round" opacity="0.85"/>
<path d="M551.2 216.9 L554.2 217.0 L557.2 217.1 L560.2 217.3 L563.2 217.6 L566.2 217.9 L569.1 218.3 L572.1 219.0 L575.0 219.8 L577.8 220.9 L580.7 222.0 L583.5 223.1 L586.4 224.0 L589.3 224.8 L592.2 225.3 L595.2 225.8 L598.3 226.2 L601.3 226.7 L604.2 227.4 L607.1 228.4" fill="none" stroke="#2a180c" stroke-width="2.02" stroke-linecap="round" opacity="0.91"/>
<path d="M570.3 203.7 L573.2 204.2 L576.2 204.7 L579.1 205.3 L582.1 205.9 L585.0 206.6 L587.7 208.2 L590.2 210.5 L592.6 213.1 L594.9 215.7 L597.4 217.9 L600.1 219.2 L603.1 219.8 L606.4 219.6 L609.9 219.1 L613.4 218.5" fill="none" stroke="#f0e4d4" stroke-width="0.74" stroke-linecap="round" opacity="0.73"/>
<path d="M442.9 177.0 L445.6 175.7 L448.2 174.3 L450.9 173.0 L453.7 171.8 L456.4 170.5 L459.2 169.3 L461.9 168.2 L464.7 167.1 L467.5 166.0 L470.3 165.0 L473.2 164.0 L476.0 163.0 L478.9 162.2 L481.8 161.5 L484.8 161.0 L487.8 160.5 L490.8 160.1 L493.8 159.7 L496.8 159.2 L499.7 158.7 L502.6 158.0 L505.5 157.3 L508.5 156.5 L511.3 155.6 L514.3 154.8 L517.2 154.0 L520.1 153.3 L523.1 152.7 L526.0 152.2 L529.0 152.0 L532.0 151.9 L535.0 152.0 L538.0 152.2 L541.0 152.5 L544.1 152.9 L547.1 153.2 L550.1 153.5" fill="none" stroke="#2a180c" stroke-width="1.20" stroke-linecap="round" opacity="0.92"/>
<path d="M615.7 256.6 L618.2 258.2 L620.7 259.9 L623.1 261.7 L625.5 263.5 L627.8 265.4 L630.1 267.4 L632.4 269.4 L634.5 271.4 L636.3 273.9 L637.7 276.8 L639.0 279.7 L640.5 282.4 L642.2 284.8 L644.5 286.9 L647.0 288.7 L649.6 290.5 L652.1 292.5 L654.0 294.8 L655.4 297.5 L656.2 300.5 L656.7 303.6 L657.1 306.7 L657.8 309.7 L658.9 312.5 L660.6 315.1" fill="none" stroke="#2a180c" stroke-width="1.86" stroke-linecap="round" opacity="0.92"/>
<path d="M392.1 195.1 L394.4 193.1 L396.7 191.2 L399.0 189.3 L401.4 187.5 L403.8 185.7 L406.2 183.9 L408.6 182.2 L411.1 180.4 L413.6 178.7 L416.1 177.1 L418.3 175.1 L420.5 172.9 L422.5 170.4 L424.5 167.9 L426.5 165.4 L428.6 163.1 L430.9 161.0 L433.4 159.3 L436.0 157.9 L438.9 156.9 L441.9 156.2 L445.0 155.8 L448.2 155.6 L451.4 155.4 L454.5 155.1 L457.6 154.6 L460.5 153.8 L463.3 152.7 L466.0 151.3 L468.5 149.5 L471.1 147.6" fill="none" stroke="#d8bc9c" stroke-width="0.66" stroke-linecap="round" opacity="0.91"/>
<path d="M430.6 194.8 L433.1 193.2 L435.6 191.6 L438.2 190.1 L440.8 188.5 L443.4 187.1 L446.0 185.6 L448.7 184.2 L451.2 182.6 L453.6 180.7 L456.0 178.8 L458.4 176.7 L460.8 174.8 L463.2 172.9 L465.8 171.2 L468.5 169.8 L471.3 168.8 L474.2 168.0 L477.2 167.5 L480.3 167.2 L483.4 167.1 L486.5 167.0" fill="none" stroke="#4a301c" stroke-width="1.22" stroke-linecap="round" opacity="0.75"/>
<path d="M435.9 185.2 L438.5 183.7 L441.1 182.3 L443.8 180.8 L446.4 179.4 L449.1 178.1 L451.8 176.8 L454.5 175.5 L457.2 174.3 L460.0 173.1 L462.8 171.9 L465.5 170.8 L468.2 169.4 L470.8 167.8 L473.4 166.1 L475.9 164.3 L478.5 162.6 L481.2 161.0 L483.9 159.6 L486.7 158.5 L489.6 157.7 L492.5 157.2 L495.6 157.0 L498.7 157.0 L501.8 157.2 L504.9 157.4 L508.0 157.5 L511.0 157.5 L514.0 157.3 L517.0 156.9 L519.9 156.2 L522.8 155.3 L525.7 154.3 L528.6 153.2" fill="none" stroke="#e6d4bc" stroke-width="1.21" stroke-linecap="round" opacity="0.94"/>
<path d="M590.9 227.2 L593.7 228.2 L596.6 229.2 L599.4 230.2 L602.2 231.3 L604.9 232.5 L607.6 233.8 L610.3 235.1 L613.2 236.0 L616.2 236.7 L619.3 237.4 L622.2 238.3 L625.0 239.5 L627.5 241.2 L629.7 243.2 L631.8 245.6 L633.7 248.0 L635.7 250.3 L637.9 252.4 L640.3 254.2 L642.9 255.7 L645.6 257.2 L648.4 258.7" fill="none" stroke="#2a180c" stroke-width="1.37" stroke-linecap="round" opacity="0.80"/>
<path d="M495.4 223.2 L498.2 222.2 L501.0 221.2 L503.9 220.3 L506.8 219.5 L509.6 218.7 L512.6 217.9 L515.5 217.3 L518.4 216.6 L521.4 216.1 L524.3 215.6 L527.3 215.0 L530.2 214.5 L533.2 214.0 L536.1 213.5 L539.1 213.2 L542.1 212.9 L545.1 212.6 L548.1 212.5 L551.1 212.5 L554.1 212.6 L557.1 212.7 L560.1 213.0 L563.1 213.3 L566.1 213.7 L569.0 214.1 L572.0 214.6 L575.0 215.0 L577.9 215.5 L580.9 216.0 L583.8 216.6 L586.8 217.2" fill="none" stroke="#2a180c" stroke-width="2.23" stroke-linecap="round" opacity="0.66"/>
<path d="M400.2 208.3 L402.4 206.3 L404.7 204.4 L407.0 202.5 L409.4 200.6 L411.7 198.8 L414.1 197.0 L416.6 195.2 L419.0 193.4 L421.6 191.9 L424.3 190.5 L427.1 189.3 L430.0 188.2 L432.9 187.2 L435.7 186.1 L438.5 184.9 L441.2 183.6 L443.8 182.2 L446.4 180.5 L448.8 178.7 L451.2 176.8 L453.6 174.9 L456.0 173.0 L458.5 171.2 L461.1 169.6 L463.8 168.3" fill="none" stroke="#2a180c" stroke-width="1.92" stroke-linecap="round" opacity="0.69"/>
<path d="M488.4 202.3 L491.3 201.3 L494.1 200.4 L497.0 199.5 L499.9 198.7 L502.8 197.9 L505.7 197.2 L508.6 196.5 L511.5 195.8 L514.5 195.3 L517.4 194.7 L520.4 194.3 L523.4 193.8 L526.3 193.1 L529.2 192.2 L532.1 191.2 L535.0 190.2 L538.0 189.2 L540.9 188.4 L543.9 187.8 L546.9 187.5 L549.9 187.6 L552.9 187.9 L555.9 188.6 L558.8 189.4 L561.8 190.4 L564.7 191.4 L567.6 192.4 L570.6 193.2 L573.5 193.7 L576.5 194.1 L579.5 194.2 L582.6 194.2 L585.7 194.1 L588.8 194.0 L591.9 194.0 L594.9 194.2" fill="none" stroke="#2a180c" stroke-width="1.42" stroke-linecap="round" opacity="0.72"/>
<path d="M584.4 265.1 L587.3 266.1 L590.1 267.1 L592.8 268.3 L595.6 269.5 L598.3 270.8 L600.7 272.7 L602.9 275.1 L604.9 277.7 L606.8 280.2 L609.0 282.4 L611.4 284.2 L614.2 285.5 L617.2 286.5 L620.3 287.4 L623.3 288.5 L626.0 290.1" fill="none" stroke="#3e2818" stroke-width="1.78" stroke-linecap="round" opacity="0.65"/>
<path d="M525.8 187.9 L528.8 187.6 L531.8 187.3 L534.8 187.1 L537.8 186.9 L540.8 186.8 L543.8 186.7 L546.8 186.7 L549.8 186.8 L552.8 186.9 L555.8 187.0 L558.8 187.2 L561.7 187.5 L564.7 187.8 L567.8 187.6 L570.8 187.1 L574.0 186.4 L577.1 185.8 L580.2 185.4 L583.3 185.5 L586.2 186.0 L589.0 187.1 L591.7 188.7 L594.4 190.5 L597.0 192.3 L599.6 194.1 L602.3 195.5 L605.1 196.6 L608.0 197.2 L611.1 197.5 L614.3 197.6 L617.5 197.7 L620.6 198.1 L623.6 198.8 L626.4 200.0 L628.9 201.6 L631.2 203.7 L633.3 206.1 L635.4 208.5 L637.5 210.9" fill="none" stroke="#d8bc9c" stroke-width="0.99" stroke-linecap="round" opacity="0.93"/>
<path d="M481.5 171.8 L484.4 170.9 L487.3 170.1 L490.1 169.3 L493.0 168.5 L496.0 167.8 L498.8 166.8 L501.6 165.6 L504.4 164.3 L507.2 162.9 L510.0 161.6 L512.8 160.4 L515.7 159.4 L518.6 158.7 L521.6 158.3 L524.6 158.3 L527.7 158.5" fill="none" stroke="#4a301c" stroke-width="1.45" stroke-linecap="round" opacity="0.65"/>
<path d="M449.5 142.7 L452.3 141.6 L455.1 140.5 L457.9 139.5 L460.8 138.5 L463.6 137.5 L466.4 136.6 L469.4 135.8 L472.3 135.2 L475.3 134.7 L478.3 134.3 L481.3 134.0 L484.3 133.7 L487.3 133.2 L490.3 132.7 L493.2 132.1 L496.1 131.3 L499.0 130.4 L501.9 129.4 L504.8 128.5" fill="none" stroke="#2a180c" stroke-width="2.24" stroke-linecap="round" opacity="0.83"/>
<path d="M391.9 230.4 L394.0 228.2 L396.1 226.0 L398.2 223.9 L400.3 221.8 L402.5 219.7 L404.7 217.7 L406.9 215.7 L409.2 213.7 L411.5 211.7 L413.6 209.7 L415.7 207.5 L417.8 205.2 L419.8 203.0 L421.9 200.7 L424.0 198.6 L426.3 196.6 L428.6 194.7 L431.1 193.0 L433.7 191.5 L436.5 190.2 L439.3 189.1 L442.1 188.0 L445.0 187.0 L447.8 185.9 L450.6 184.8 L453.4 183.6 L456.1 182.2 L458.7 180.8" fill="none" stroke="#4a301c" stroke-width="2.14" stroke-linecap="round" opacity="0.75"/>
<path d="M587.6 191.4 L590.5 192.2 L593.4 193.0 L596.3 193.8 L599.1 194.7 L602.0 195.7 L604.7 197.0 L607.3 198.6 L609.8 200.4 L612.4 202.1 L615.0 203.6 L617.8 204.9 L620.6 205.8 L623.6 206.5 L626.7 207.1 L629.6 207.9 L632.5 209.0" fill="none" stroke="#2a180c" stroke-width="2.37" stroke-linecap="round" opacity="0.93"/>
<path d="M527.7 174.7 L530.7 174.4 L533.6 174.2 L536.6 174.1 L539.6 174.0 L542.6 173.9 L545.6 173.9 L548.6 173.9 L551.6 174.0 L554.6 174.2 L557.6 174.4 L560.6 174.6 L563.6 174.9 L566.6 175.2 L569.5 175.8 L572.5 176.6 L575.4 177.5 L578.2 178.5 L581.1 179.4 L584.0 180.2 L587.0 180.9 L589.9 181.3 L592.9 181.6 L596.0 181.9 L599.0 182.2 L602.0 182.6 L604.9 183.3 L607.8 184.2 L610.5 185.4 L613.2 186.9 L615.8 188.4 L618.4 190.1 L621.0 191.7 L623.6 193.1 L626.3 194.4 L629.1 195.5 L632.0 196.5 L634.9 197.5 L637.7 198.5 L640.6 199.6" fill="none" stroke="#2a180c" stroke-width="1.68" stroke-linecap="round" opacity="0.91"/>
<path d="M506.0 226.0 L508.9 225.2 L511.8 224.4 L514.7 223.6 L517.6 222.9 L520.5 222.3 L523.5 221.8 L526.4 221.3 L529.4 220.8 L532.4 220.5 L535.4 220.1 L538.4 219.9 L541.4 219.7 L544.3 219.6 L547.3 219.4 L550.3 219.4 L553.3 219.3 L556.3 219.3 L559.3 219.4 L562.3 219.6 L565.3 219.8 L568.3 220.2 L571.3 220.6 L574.2 221.0 L577.2 221.6 L580.1 222.2 L583.1 222.8 L586.0 223.5 L588.9 224.3 L591.8 225.1 L594.6 226.0 L597.5 226.9 L600.3 227.9 L603.2 228.9 L606.0 230.0 L608.7 231.2 L611.4 232.4 L614.1 233.7 L616.8 235.1 L619.4 236.5" fill="none" stroke="#2a180c" stroke-width="1.21" stroke-linecap="round" opacity="0.76"/>
<path d="M540.0 242.9 L543.0 242.7 L546.0 242.5 L549.0 242.5 L552.0 242.4 L555.0 242.5 L558.0 242.6 L561.0 242.9 L564.0 243.1 L567.0 243.5 L569.9 243.9 L572.9 244.5 L575.8 245.2 L578.7 245.9 L581.6 246.7 L584.5 247.5 L587.4 248.3 L590.3 249.1 L593.2 250.0 L596.1 250.9 L598.9 251.8 L601.7 252.8 L604.5 254.0 L607.2 255.3 L609.8 256.8 L612.4 258.4 L614.9 260.0 L617.3 261.7 L619.8 263.5" fill="none" stroke="#2a180c" stroke-width="1.06" stroke-linecap="round" opacity="0.74"/>
<path d="M612.4 370.5 L611.7 373.4 L610.9 376.3 L609.9 379.1 L608.7 381.8 L607.3 384.5 L606.2 387.3 L604.9 390.1 L603.6 392.8 L602.0 395.3 L600.2 397.7 L598.1 399.9 L595.7 401.7 L593.2 403.4 L590.5 404.8 L587.8 406.1" fill="none" stroke="#f0e4d4" stroke-width="0.64" stroke-linecap="round" opacity="0.61"/>
<path d="M437.5 186.4 L440.1 184.9 L442.7 183.4 L445.3 182.0 L448.0 180.6 L450.7 179.3 L453.4 178.0 L456.1 176.7 L458.8 175.5 L461.6 174.3 L464.4 173.1 L467.1 172.0 L469.9 170.9 L472.8 169.9 L475.5 168.8 L478.3 167.5 L481.0 166.2 L483.8 165.0 L486.5 163.7 L489.3 162.6 L492.1 161.5 L495.0 160.7 L497.9 160.0 L500.9 159.4 L503.9 159.1 L506.9 158.8 L509.9 158.7 L512.9 158.5 L515.9 158.4 L518.9 158.3 L521.9 158.0 L524.9 157.7 L527.9 157.3 L530.9 156.8 L533.8 156.2 L536.8 155.7 L539.8 155.2 L542.8 154.8 L545.8 154.5 L548.8 154.4" fill="none" stroke="#b08c68" stroke-width="1.08" stroke-linecap="round" opacity="0.69"/>
<path d="M567.3 166.9 L570.2 167.3 L573.2 167.7 L576.2 168.2 L579.1 168.7 L582.1 169.3 L585.0 169.9 L587.9 170.7 L590.8 171.6 L593.6 172.7 L596.4 173.8 L599.3 174.8 L602.1 175.7 L605.0 176.5 L607.9 177.2 L610.9 177.9 L613.8 178.5 L616.7 179.3 L619.6 180.3" fill="none" stroke="#4e3420" stroke-width="1.64" stroke-linecap="round" opacity="0.72"/>
<path d="M628.1 321.4 L629.6 324.0 L630.9 326.7 L632.2 329.4 L633.5 332.1 L634.6 334.9 L635.7 337.7 L636.6 340.5 L637.4 343.4 L638.0 346.4 L638.5 349.3 L638.8 352.3 L639.0 355.3 L640.4 358.2 L642.4 361.2 L644.4 364.2 L645.6 367.3 L645.6 370.3 L644.3 373.2 L642.0 375.8 L639.3 378.3 L637.0 380.8 L635.5 383.5 L635.2 386.5 L635.6 389.9 L636.4 393.5 L636.7 397.0 L636.1 400.1 L634.4 402.5 L631.6 404.3 L628.2 405.7 L624.9 406.9 L622.1 408.6 L620.1 410.8 L618.9 413.8 L618.2 417.3 L617.4 420.9" fill="none" stroke="#4a301c" stroke-width="1.40" stroke-linecap="round" opacity="0.66"/>
<path d="M552.8 185.3 L555.8 185.5 L558.8 185.7 L561.7 185.9 L564.7 186.2 L567.7 186.6 L570.7 187.0 L573.6 187.4 L576.6 187.9 L579.6 188.5 L582.6 188.4 L585.8 187.8 L589.1 187.0 L592.3 186.4 L595.5 186.2 L598.5 186.6 L601.3 187.7 L603.8 189.4 L606.3 191.7 L608.6 194.1 L611.0 196.3 L613.4 198.2 L616.2 199.5 L619.1 200.2 L622.3 200.5 L625.6 200.5 L628.9 200.5 L632.1 200.9 L635.0 201.8" fill="none" stroke="#d8bc9c" stroke-width="0.80" stroke-linecap="round" opacity="0.63"/>
<path d="M542.5 217.3 L545.5 217.2 L548.5 217.2 L551.5 217.2 L554.5 217.3 L557.5 217.5 L560.5 217.7 L563.5 218.0 L566.5 218.3 L569.4 218.7 L572.4 219.1 L575.4 219.6 L578.3 220.1 L581.3 220.7 L584.2 221.3 L587.1 222.0 L590.0 222.8 L592.9 223.6 L595.8 224.5 L598.6 225.5 L601.4 226.5 L604.2 227.6 L607.0 228.7 L609.8 229.9 L612.5 231.2 L615.2 232.5 L617.9 233.9 L620.5 235.3 L623.1 236.8" fill="none" stroke="#d8bc9c" stroke-width="0.96" stroke-linecap="round" opacity="0.73"/>
<path d="M539.0 250.5 L541.9 250.2 L544.9 250.0 L547.9 249.9 L550.9 249.8 L553.9 249.8 L556.9 249.8 L559.9 249.9 L562.9 250.1 L565.9 250.3 L568.9 250.7 L571.9 251.1 L574.8 251.6 L577.8 252.1 L580.7 252.8 L583.6 253.5 L586.5 254.4" fill="none" stroke="#4a301c" stroke-width="1.90" stroke-linecap="round" opacity="0.94"/>
<path d="M565.3 186.1 L568.3 186.4 L571.3 186.8 L574.2 187.3 L577.2 187.8 L580.1 188.4 L583.1 189.0 L586.0 189.7 L588.9 190.4 L591.8 191.1 L594.7 192.0 L597.6 192.8 L600.4 193.8 L603.3 194.7 L606.1 195.7 L608.9 196.7 L611.7 197.8 L614.5 198.9 L617.3 200.1 L620.0 201.3 L622.7 202.5 L625.5 203.8 L628.1 205.2 L630.8 206.6 L633.4 208.0 L636.0 209.5 L638.6 211.1 L641.1 212.7 L643.6 214.3 L646.1 216.0 L648.5 217.8 L651.0 219.5 L653.4 221.3 L655.7 223.2 L658.1 225.0 L660.4 227.0 L662.6 228.9 L664.8 231.0" fill="none" stroke="#4a301c" stroke-width="2.32" stroke-linecap="round" opacity="0.77"/>
<path d="M477.9 214.8 L480.7 213.6 L483.4 212.4 L486.2 211.3 L489.0 210.2 L491.8 209.2 L494.7 208.2 L497.5 207.3 L500.4 206.4 L503.3 205.6 L506.2 204.8 L509.1 204.1 L512.0 203.5 L514.9 202.8 L517.9 202.2 L520.8 201.6 L523.8 201.1 L526.8 200.7 L529.7 200.3 L532.7 200.0 L535.7 199.7 L538.7 199.5 L541.7 199.3 L544.7 199.2 L547.7 199.1 L550.7 199.1 L553.7 199.1 L556.7 199.2 L559.7 199.3 L562.7 199.5 L565.7 199.8 L568.6 200.1 L571.6 200.5 L574.6 200.9 L577.5 201.4 L580.5 202.0 L583.4 202.6" fill="none" stroke="#2a180c" stroke-width="1.28" stroke-linecap="round" opacity="0.68"/>
<path d="M585.1 200.7 L588.0 201.4 L590.9 202.2 L593.8 203.0 L596.6 203.9 L599.5 204.8 L602.3 205.8 L605.1 206.9 L607.6 209.0 L609.7 211.8 L611.6 214.9 L613.6 217.8 L615.9 220.0 L618.6 221.3 L621.8 221.6 L625.4 221.4 L629.0 221.0 L632.5 220.9 L635.6 221.6 L638.1 223.3 L639.9 226.0 L641.3 229.3" fill="none" stroke="#3e2818" stroke-width="1.66" stroke-linecap="round" opacity="0.83"/>
<path d="M530.2 233.5 L533.2 233.0 L536.2 232.7 L539.2 232.4 L542.2 232.2 L545.2 232.0 L548.2 232.0 L551.2 232.0 L554.2 232.0 L557.1 232.1 L560.1 232.3 L563.1 232.6 L566.1 232.9 L569.0 233.9 L571.8 235.4 L574.6 237.2 L577.3 239.1 L580.0 240.8 L582.8 242.1 L585.7 242.9 L588.7 243.1 L591.9 243.0 L595.2 242.7 L598.5 242.4 L601.7 242.4 L604.7 243.0 L607.5 244.2 L609.9 246.0 L612.1 248.3 L614.1 251.0 L616.0 253.7 L618.0 256.2 L620.1 258.4 L622.6 260.1 L625.3 261.4 L628.4 262.4 L631.6 263.2 L634.8 264.0" fill="none" stroke="#f0e4d4" stroke-width="0.71" stroke-linecap="round" opacity="0.69"/>
<path d="M564.6 189.7 L567.6 190.1 L570.5 190.5 L573.5 191.0 L576.4 191.5 L579.4 192.0 L582.3 192.6 L585.3 193.3 L588.2 194.0 L591.1 194.8 L594.0 195.6 L596.8 196.7 L599.4 198.2 L602.1 199.8 L604.7 201.4 L607.4 202.8 L610.2 203.9 L613.1 204.8 L616.0 205.4 L619.1 206.0 L622.1 206.7 L625.0 207.6 L627.7 208.8 L630.3 210.4 L632.6 212.3 L634.9 214.4 L637.1 216.5 L639.3 218.6 L641.7 220.5 L644.2 222.1 L646.9 223.5 L649.7 224.7" fill="none" stroke="#7a5a40" stroke-width="0.91" stroke-linecap="round" opacity="0.74"/>
<path d="M395.0 224.0 L397.1 221.9 L399.3 219.8 L401.5 217.7 L403.7 215.7 L405.9 213.7 L407.9 211.4 L409.7 208.9 L411.3 206.2 L412.9 203.4 L414.6 200.7 L416.4 198.1 L418.3 195.7 L420.5 193.6 L423.0 191.9 L425.7 190.5" fill="none" stroke="#4a301c" stroke-width="1.81" stroke-linecap="round" opacity="0.71"/>
<path d="M492.2 143.1 L495.2 142.4 L498.1 141.8 L501.0 141.3 L504.0 140.8 L507.0 140.3 L509.9 139.6 L512.8 138.7 L515.7 137.8 L518.6 136.7 L521.5 135.8 L524.4 134.9 L527.4 134.2 L530.4 133.8 L533.4 133.7 L536.4 133.8 L539.4 134.2" fill="none" stroke="#cfb090" stroke-width="1.20" stroke-linecap="round" opacity="0.79"/>
<path d="M423.7 192.5 L426.2 190.8 L428.7 189.2 L431.3 187.6 L433.8 186.1 L436.4 184.5 L439.0 183.0 L441.6 181.6 L444.3 180.2 L446.9 178.8 L449.5 177.2 L452.0 175.5 L454.5 173.7 L456.9 171.9 L459.4 170.1 L462.0 168.4 L464.6 166.9 L467.3 165.6 L470.1 164.6 L473.0 163.7 L476.0 163.1 L479.0 162.7 L482.0 162.3 L485.1 162.0 L488.1 161.7 L491.1 161.3 L494.0 160.7 L496.9 160.0 L499.8 159.1" fill="none" stroke="#cfb090" stroke-width="1.27" stroke-linecap="round" opacity="0.70"/>
<path d="M608.5 331.2 L610.1 333.7 L611.6 336.4 L612.9 339.1 L614.1 341.8 L615.1 344.6 L616.0 347.5 L616.8 350.4 L617.4 353.3 L617.8 356.3 L619.0 359.2 L620.6 362.1 L622.2 365.0 L623.4 368.1 L623.7 371.1 L622.9 374.0 L621.3 376.8 L619.1 379.3 L616.7 381.7 L614.7 384.1 L613.2 386.8 L612.4 389.7 L612.0 392.9 L611.7 396.3 L611.0 399.6 L609.8 402.4 L607.8 404.7 L605.1 406.2" fill="none" stroke="#d8bc9c" stroke-width="1.24" stroke-linecap="round" opacity="0.63"/>
<path d="M526.3 240.3 L529.2 239.8 L532.2 239.3 L535.2 238.9 L538.2 238.6 L541.2 238.3 L544.1 237.6 L547.0 236.5 L550.0 235.2 L553.0 233.9 L556.0 232.7 L559.0 231.9 L562.0 231.6 L565.0 231.9 L568.0 232.7 L570.8 234.0" fill="none" stroke="#2a180c" stroke-width="2.38" stroke-linecap="round" opacity="0.82"/>
<path d="M563.3 272.2 L566.2 272.6 L569.2 273.0 L572.2 273.6 L575.1 274.2 L578.0 275.0 L580.9 275.8 L583.7 276.8 L586.5 277.8 L589.3 278.9 L592.1 280.1 L594.8 281.5 L597.4 282.9 L600.3 283.8 L603.4 284.4 L606.5 285.0 L609.6 285.9 L612.4 287.1 L614.8 288.9 L616.8 291.2 L618.5 293.8 L619.9 296.7 L621.3 299.6 L622.9 302.2 L624.7 304.6 L626.9 306.6 L629.4 308.5 L632.1 310.3 L634.6 312.2 L636.8 314.4 L638.5 316.9 L639.6 319.7 L640.1 322.8 L640.3 326.0 L640.3 329.2 L640.5 332.3 L641.1 335.2 L642.0 338.1" fill="none" stroke="#2e1c10" stroke-width="1.64" stroke-linecap="round" opacity="0.75"/>
<path d="M644.4 349.9 L644.6 352.9 L644.7 355.9 L644.7 358.9 L644.5 361.9 L644.3 364.9 L645.6 368.0 L647.8 371.3 L650.0 374.7 L651.1 377.9 L650.7 380.9 L648.6 383.5 L645.4 385.6 L641.8 387.6 L638.9 389.7 L637.3 392.3" fill="none" stroke="#2a180c" stroke-width="1.61" stroke-linecap="round" opacity="0.64"/>
<path d="M555.8 229.1 L558.8 229.2 L561.8 229.5 L564.8 229.8 L567.8 230.2 L570.7 230.6 L573.7 231.1 L576.6 231.7 L579.6 232.3 L582.5 233.0 L585.4 233.8 L588.2 235.0 L590.9 236.4 L593.5 238.1 L596.1 239.8 L598.7 241.4 L601.4 242.6 L604.3 243.6 L607.2 244.3 L610.3 244.9 L613.3 245.6 L616.3 246.4 L619.0 247.6 L621.6 249.2 L623.9 251.2 L626.0 253.4 L628.0 255.8 L629.9 258.2 L632.0 260.5 L634.2 262.5 L636.7 264.3" fill="none" stroke="#4e3420" stroke-width="1.79" stroke-linecap="round" opacity="0.69"/>
<path d="M513.2 238.4 L516.1 237.5 L519.0 236.8 L521.9 236.1 L524.8 235.5 L527.8 235.0 L530.7 234.5 L533.7 234.1 L536.7 233.7 L539.7 233.6 L542.7 233.9 L545.8 234.3 L548.8 234.9 L551.8 235.5 L554.8 236.0 L557.8 236.4 L560.8 236.6 L563.8 236.5 L566.8 236.4 L569.9 236.1 L573.0 235.8 L576.0 235.6 L579.1 235.7 L582.1 236.0 L585.0 236.6" fill="none" stroke="#7a5a40" stroke-width="1.03" stroke-linecap="round" opacity="0.67"/>
<path d="M622.3 281.7 L624.5 283.8 L626.6 285.9 L628.7 288.0 L630.7 290.2 L632.6 292.5 L634.5 294.9 L636.3 297.3 L639.4 298.7 L643.4 299.6 L647.4 300.6 L650.7 302.1 L652.6 304.5 L652.9 307.7 L652.0 311.5 L650.5 315.4 L649.5 319.1 L649.6 322.2 L651.2 324.9 L654.1 327.1 L657.6 329.3 L660.9 331.7 L662.9 334.3" fill="none" stroke="#b08c68" stroke-width="1.00" stroke-linecap="round" opacity="0.86"/>
<path d="M426.1 196.0 L428.6 194.3 L431.1 192.7 L433.6 191.1 L436.2 189.5 L438.8 188.0 L441.4 186.5 L444.0 185.0 L446.6 183.6 L449.3 182.2 L452.0 180.9 L454.6 179.3 L457.1 177.6 L459.5 175.8 L462.0 173.9 L464.5 172.1 L467.0 170.4 L469.6 168.9 L472.3 167.6 L475.2 166.6 L478.1 165.8 L481.1 165.3 L484.1 165.0 L487.2 164.8 L490.3 164.7 L493.3 164.5 L496.3 164.1 L499.3 163.7 L502.2 163.0 L505.1 162.1 L508.0 161.1 L510.8 160.0" fill="none" stroke="#4a301c" stroke-width="1.03" stroke-linecap="round" opacity="0.91"/>
<path d="M518.2 150.2 L521.2 149.9 L524.2 149.6 L527.2 149.4 L530.2 149.2 L533.2 149.0 L536.2 148.9 L539.2 148.9 L542.2 148.9 L545.2 148.9 L548.2 148.9 L551.2 149.0 L554.2 149.3 L557.1 149.8 L560.1 150.4 L563.1 151.0 L566.0 151.7 L569.0 152.3 L571.9 152.7 L574.9 153.0 L577.9 153.2 L580.9 153.4 L584.0 153.5 L587.0 153.7 L590.0 154.0 L593.0 154.4 L595.9 155.1 L598.8 156.0 L601.6 157.1 L604.4 158.3 L607.1 159.5 L609.9 160.8 L612.6 162.0 L615.4 163.1" fill="none" stroke="#4a301c" stroke-width="1.92" stroke-linecap="round" opacity="0.84"/>
<path d="M636.9 349.3 L637.3 352.3 L637.5 355.3 L637.6 358.3 L637.6 361.3 L637.4 364.2 L638.2 367.3 L639.5 370.4 L640.7 373.6 L641.3 376.8 L640.9 379.8 L639.4 382.5 L637.2 384.9 L634.6 387.2 L632.2 389.5 L630.5 392.0 L629.6 394.9" fill="none" stroke="#2a180c" stroke-width="1.84" stroke-linecap="round" opacity="0.95"/>
<path d="M484.1 188.1 L487.0 187.2 L489.8 186.3 L492.7 185.4 L495.6 184.6 L498.5 183.8 L501.4 183.1 L504.3 182.4 L507.3 181.8 L510.2 181.4 L513.2 181.0 L516.2 180.7 L519.2 180.4 L522.2 180.2 L525.2 179.9 L528.2 179.7 L531.2 179.4 L534.2 179.1 L537.2 178.7 L540.1 178.3 L543.1 178.0 L546.1 177.7" fill="none" stroke="#2a180c" stroke-width="2.02" stroke-linecap="round" opacity="0.80"/>
<path d="M379.1 255.0 L380.8 252.6 L382.6 250.2 L384.4 247.8 L386.3 245.4 L388.2 243.1 L390.1 240.8 L392.1 238.5 L394.0 236.2 L396.1 234.0 L398.1 231.8 L400.2 229.7 L402.3 227.5 L404.3 225.3 L406.2 223.0 L408.1 220.6 L410.0 218.2 L411.9 215.9 L413.9 213.6 L416.0 211.4 L418.2 209.4 L420.5 207.5 L423.0 205.8 L425.6 204.2 L428.2 202.8 L431.0 201.4 L433.7 200.1 L436.4 198.8 L439.1 197.4 L441.7 196.0 L444.3 194.4 L446.8 192.8 L449.3 191.0 L451.7 189.2 L454.1 187.4 L456.6 185.6 L459.1 183.9" fill="none" stroke="#f0e4d4" stroke-width="1.12" stroke-linecap="round" opacity="0.75"/>
<path d="M498.7 141.6 L501.6 141.1 L504.6 140.6 L507.6 140.1 L510.5 139.7 L513.5 139.3 L516.5 138.9 L519.5 138.7 L522.5 138.6 L525.5 138.7 L528.5 138.8 L531.5 139.0 L534.5 139.2 L537.6 139.3 L540.6 139.3 L543.6 139.3 L546.6 139.2 L549.6 139.0 L552.6 138.8 L555.6 138.5" fill="none" stroke="#2a180c" stroke-width="2.37" stroke-linecap="round" opacity="0.85"/>
<path d="M482.2 202.7 L485.0 201.7 L487.8 200.6 L490.6 199.7 L493.5 198.7 L496.3 197.8 L499.2 197.0 L502.1 196.2 L505.0 195.5 L508.0 194.8 L510.9 194.2 L513.8 193.5 L516.7 192.7 L519.6 192.0 L522.6 191.3 L525.5 190.7 L528.5 190.1 L531.4 189.6 L534.4 189.3 L537.4 189.1 L540.4 189.0 L543.4 189.0 L546.4 189.1 L549.4 189.3 L552.4 189.6 L555.4 189.9 L558.4 190.1 L561.4 190.4 L564.4 190.6 L567.4 190.9 L570.4 191.1 L573.4 191.3" fill="none" stroke="#2a180c" stroke-width="1.04" stroke-linecap="round" opacity="0.86"/>
<path d="M553.4 212.1 L556.4 212.2 L559.4 212.4 L562.4 212.7 L565.4 213.0 L568.4 213.4 L571.4 213.8 L574.3 214.3 L577.3 214.8 L580.2 215.5 L583.1 216.1 L586.0 216.9 L588.9 217.7 L591.9 218.1 L595.0 218.3 L598.1 218.5 L601.2 218.8 L604.1 219.3 L607.0 220.3 L609.7 221.7 L612.2 223.4 L614.6 225.3 L616.9 227.3 L619.3 229.3 L621.8 230.9 L624.5 232.3 L627.3 233.4 L630.3 234.4 L633.2 235.4 L636.1 236.5 L638.7 237.9 L641.2 239.7 L643.3 241.8 L645.2 244.2 L647.0 246.7 L648.8 249.3 L650.6 251.7 L652.7 253.9" fill="none" stroke="#d8bc9c" stroke-width="0.95" stroke-linecap="round" opacity="0.77"/>
<path d="M551.3 150.3 L554.3 150.5 L557.3 150.7 L560.3 150.9 L563.3 151.2 L566.3 151.5 L569.3 151.7 L572.3 152.0 L575.3 152.3 L578.2 152.6 L581.2 153.0 L584.2 153.4 L587.1 154.0 L590.1 154.7 L593.0 155.4 L595.8 156.3" fill="none" stroke="#4a301c" stroke-width="1.62" stroke-linecap="round" opacity="0.61"/>
<path d="M506.1 173.7 L509.0 173.1 L512.0 172.6 L515.0 172.1 L517.9 171.7 L520.9 171.3 L523.9 170.9 L526.9 170.7 L529.9 170.4 L532.8 169.9 L535.8 169.2 L538.7 168.3 L541.7 167.5 L544.7 166.7 L547.7 166.0 L550.7 165.7 L553.7 165.6 L556.7 165.9 L559.7 166.5 L562.6 167.3 L565.5 168.3 L568.4 169.4 L571.3 170.5 L574.2 171.4 L577.2 172.1" fill="none" stroke="#7a5a40" stroke-width="0.70" stroke-linecap="round" opacity="0.80"/>
<path d="M621.8 285.9 L624.0 288.0 L626.1 290.2 L628.1 292.4 L630.1 294.7 L632.0 297.0 L634.6 298.7 L637.8 300.1 L641.0 301.5 L643.8 303.3 L645.7 305.6 L646.6 308.6 L646.6 311.9 L646.3 315.4 L646.0 318.8 L646.4 321.9" fill="none" stroke="#4e3420" stroke-width="1.04" stroke-linecap="round" opacity="0.89"/>
<path d="M576.9 267.3 L579.8 268.0 L582.7 268.9 L585.5 269.8 L588.4 270.9 L591.1 272.0 L593.9 273.2 L596.6 274.5 L599.3 275.9 L601.9 277.3 L604.4 278.9 L606.4 281.5 L607.7 284.9 L608.8 288.7 L610.0 292.2 L611.6 295.0 L613.9 296.9 L617.0 297.9 L620.7 298.4 L624.6 298.9 L628.1 299.7 L631.0 301.2 L632.7 303.6 L633.4 306.8 L633.3 310.5 L632.8 314.4 L632.6 318.1 L633.0 321.2 L634.5 323.9 L637.1 326.0 L640.3 327.8" fill="none" stroke="#4e3420" stroke-width="1.45" stroke-linecap="round" opacity="0.83"/>
<path d="M617.0 306.9 L618.9 309.2 L620.8 311.5 L622.6 313.9 L624.3 316.4 L625.9 318.9 L627.4 321.5 L628.9 324.1 L630.3 326.8 L631.6 329.5 L632.8 332.2 L634.0 335.0 L635.1 337.8 L637.2 340.1 L639.9 342.4 L642.5 344.9 L644.3 347.6 L645.1 350.5 L644.6 353.6 L643.2 356.7 L641.3 359.7 L639.6 362.7 L638.8 365.7 L639.0 368.7 L640.0 371.9 L641.4 375.1 L642.6 378.4 L642.9 381.6 L642.1 384.5 L640.1 387.0 L637.3 389.2 L634.4 391.2 L631.9 393.4 L630.2 395.9 L629.5 398.9 L629.3 402.3 L629.3 405.9" fill="none" stroke="#2a180c" stroke-width="2.07" stroke-linecap="round" opacity="0.77"/>
<path d="M513.6 223.3 L516.6 222.6 L519.5 222.0 L522.4 221.4 L525.4 220.9 L528.4 220.4 L531.3 220.0 L534.3 219.7 L537.3 219.4 L540.3 219.2 L543.3 219.1 L546.3 219.0 L549.3 218.7 L552.3 218.2 L555.3 217.7 L558.3 217.3 L561.3 216.9 L564.4 216.8 L567.4 216.9 L570.3 217.3 L573.3 218.0 L576.1 218.9 L579.0 220.0 L581.8 221.2 L584.6 222.3 L587.5 223.4 L590.3 224.3 L593.2 225.0 L596.2 225.6 L599.2 226.1 L602.2 226.6 L605.2 227.2 L608.2 227.9 L611.0 228.8" fill="none" stroke="#b08c68" stroke-width="0.94" stroke-linecap="round" opacity="0.62"/>
<path d="M564.1 251.6 L567.0 252.0 L570.0 252.4 L573.0 253.0 L575.9 253.6 L578.8 254.3 L581.7 255.0 L584.6 255.9 L587.4 256.8 L590.3 257.8 L593.2 258.6 L596.1 259.2 L599.1 259.9 L602.0 260.7 L604.9 261.7 L607.6 263.1 L610.1 264.7 L612.5 266.5 L614.8 268.6 L617.0 270.7 L619.2 272.7 L621.5 274.6 L623.9 276.4 L626.4 278.1 L628.9 279.8 L631.5 281.5 L633.9 283.3 L636.1 285.3" fill="none" stroke="#4e3420" stroke-width="1.86" stroke-linecap="round" opacity="0.79"/>
<path d="M580.7 181.1 L583.6 181.7 L586.6 182.4 L589.5 183.1 L592.4 183.9 L595.3 184.7 L598.3 184.9 L601.5 184.8 L604.7 184.6 L607.9 184.5 L610.9 184.8 L613.8 185.8 L616.4 187.3 L618.8 189.3 L621.1 191.6 L623.4 193.9" fill="none" stroke="#2a180c" stroke-width="1.42" stroke-linecap="round" opacity="0.61"/>
<path d="M410.1 181.5 L412.6 179.8 L415.1 178.1 L417.6 176.5 L420.1 174.8 L422.7 173.3 L425.3 171.7 L427.7 169.9 L430.0 167.8 L432.2 165.6 L434.3 163.4 L436.5 161.1 L438.8 159.0 L441.2 157.1 L443.8 155.5 L446.5 154.3 L449.4 153.3 L452.4 152.7 L455.5 152.3" fill="none" stroke="#4a301c" stroke-width="1.76" stroke-linecap="round" opacity="0.91"/>
<path d="M609.2 320.3 L611.1 322.7 L612.9 325.1 L614.6 327.6 L616.1 330.1 L617.6 332.7 L619.0 335.4 L620.2 338.1 L621.4 340.9 L621.9 343.9 L621.8 347.1 L621.5 350.3 L621.3 353.5 L621.4 356.5 L622.1 359.5 L623.1 362.4 L624.3 365.4 L625.4 368.4 L625.8 371.5 L625.5 374.5 L624.4 377.3 L622.6 379.9 L620.5 382.4 L618.5 384.9 L616.9 387.5 L615.7 390.2" fill="none" stroke="#2a180c" stroke-width="1.51" stroke-linecap="round" opacity="0.69"/>
<path d="M408.2 168.1 L410.7 166.5 L413.2 164.9 L415.8 163.3 L418.4 161.8 L421.0 160.3 L423.6 158.8 L426.2 157.4 L428.8 155.9 L431.5 154.6 L434.1 153.1 L436.7 151.5 L439.2 149.9 L441.8 148.2 L444.3 146.6 L446.9 145.1 L449.6 143.7 L452.3 142.4 L455.1 141.3 L458.0 140.4 L460.9 139.6 L463.8 138.9 L466.8 138.3 L469.7 137.7 L472.7 137.1 L475.7 136.5 L478.6 135.8 L481.5 135.0" fill="none" stroke="#4a301c" stroke-width="1.05" stroke-linecap="round" opacity="0.70"/>
<path d="M490.5 161.4 L493.4 160.6 L496.3 160.0 L499.2 159.3 L502.2 158.7 L505.1 158.2 L508.1 157.6 L511.0 157.2 L514.0 156.7 L517.0 156.3 L519.9 156.0 L522.9 155.7 L525.9 155.4 L528.9 155.4 L532.0 155.7 L535.0 156.2 L538.0 156.9 L541.0 157.5 L544.1 158.1 L547.1 158.5 L550.1 158.8 L553.1 158.7 L556.1 158.5 L559.1 158.1 L562.1 157.6 L565.2 157.1 L568.3 156.7 L571.3 156.4 L574.3 156.5 L577.3 156.8 L580.2 157.5 L583.1 158.4 L585.9 159.6 L588.7 161.0 L591.5 162.4 L594.2 163.7 L597.0 165.0" fill="none" stroke="#7a5a40" stroke-width="1.13" stroke-linecap="round" opacity="0.76"/>
<path d="M616.7 277.0 L619.1 278.9 L621.4 280.8 L623.6 282.8 L625.8 284.9 L627.9 287.0 L629.9 289.2 L631.9 291.5 L633.8 293.8 L635.6 296.2 L637.4 298.6 L639.0 301.1 L639.3 304.6 L638.5 308.6 L637.5 312.7 L637.2 316.3 L638.2 319.2 L640.7 321.3 L644.3 323.0 L648.2 324.8 L651.3 326.9 L653.0 329.6 L652.8 332.7 L651.1 336.1 L648.6 339.6 L646.5 343.0 L645.6 346.1 L646.4 349.1 L648.8 351.8 L651.9 354.7 L654.8 357.6 L656.4 360.7 L656.3 363.7 L654.3 366.5 L651.2 369.2" fill="none" stroke="#d8bc9c" stroke-width="0.61" stroke-linecap="round" opacity="0.85"/>
<path d="M620.9 273.4 L623.2 275.3 L625.5 277.3 L627.7 279.3 L629.8 281.4 L631.9 283.6 L633.9 285.8 L635.9 288.1 L638.3 289.9 L641.0 291.6 L643.7 293.3 L646.1 295.3 L648.0 297.7 L649.2 300.5 L649.8 303.6 L650.3 306.7 L650.8 309.8 L651.7 312.7 L653.1 315.4 L655.0 317.9 L657.1 320.3 L659.0 322.9" fill="none" stroke="#2a180c" stroke-width="1.73" stroke-linecap="round" opacity="0.94"/>
<path d="M401.4 194.6 L403.7 192.7 L406.1 190.9 L408.5 189.1 L410.9 187.3 L413.4 185.6 L415.9 183.9 L418.3 182.2 L420.9 180.6 L423.4 178.9 L425.9 177.4 L428.5 175.8 L431.0 174.1 L433.4 172.2 L435.7 170.2 L438.0 168.2 L440.4 166.3 L442.8 164.4 L445.3 162.7 L447.9 161.2 L450.6 159.9 L453.4 158.9 L456.4 158.1 L459.3 157.5 L462.4 157.0 L465.4 156.5 L468.4 156.0 L471.4 155.4 L474.3 154.6 L477.1 153.7 L479.9 152.6 L482.7 151.3 L485.4 149.9 L488.1 148.5 L490.9 147.1" fill="none" stroke="#2a180c" stroke-width="2.02" stroke-linecap="round" opacity="0.85"/>
<path d="M570.0 208.4 L573.0 208.9 L576.0 209.4 L578.9 210.0 L581.8 210.6 L584.7 211.3 L587.9 211.0 L591.3 210.0 L594.7 208.7 L598.2 207.6 L601.5 207.1 L604.5 207.6 L607.1 209.2 L609.4 211.7 L611.4 214.7 L613.3 217.9 L615.2 220.8" fill="none" stroke="#7a5a40" stroke-width="1.21" stroke-linecap="round" opacity="0.71"/>
<path d="M439.4 186.0 L442.1 184.5 L444.7 183.1 L447.4 181.7 L450.0 180.3 L452.7 179.0 L455.3 177.5 L457.9 175.9 L460.4 174.2 L462.9 172.4 L465.4 170.7 L468.0 169.1 L470.7 167.7 L473.4 166.4 L476.3 165.4 L479.2 164.7 L482.1 164.1" fill="none" stroke="#7a5a40" stroke-width="1.26" stroke-linecap="round" opacity="0.83"/>
<path d="M520.7 159.2 L523.7 158.9 L526.7 158.6 L529.7 158.4 L532.7 158.2 L535.7 158.1 L538.7 158.0 L541.7 157.9 L544.7 157.4 L547.7 156.6 L550.7 155.6 L553.7 154.5 L556.8 153.5 L559.8 152.9 L562.8 152.7 L565.8 153.0 L568.8 153.8 L571.6 155.0 L574.5 156.5 L577.3 158.1 L580.1 159.6 L582.9 160.9" fill="none" stroke="#2a180c" stroke-width="1.85" stroke-linecap="round" opacity="0.80"/>
<path d="M525.7 248.9 L528.6 248.3 L531.6 247.8 L534.5 247.3 L537.5 246.9 L540.5 246.6 L543.5 246.3 L546.5 246.2 L549.5 246.1 L552.5 246.1 L555.5 245.4 L558.5 244.3 L561.6 243.0 L564.7 241.7 L567.8 240.6 L570.9 240.1 L573.9 240.2 L576.8 241.0 L579.6 242.5 L582.2 244.5 L584.7 246.7 L587.2 249.0 L589.7 251.0 L592.4 252.6 L595.2 253.6 L598.2 254.2 L601.4 254.3 L604.7 254.2" fill="none" stroke="#4a301c" stroke-width="2.34" stroke-linecap="round" opacity="0.65"/>
<path d="M462.2 194.9 L464.9 193.6 L467.6 192.4 L470.4 191.2 L473.1 190.0 L475.9 188.9 L478.7 187.9 L481.6 186.8 L484.4 185.9 L487.2 184.8 L490.0 183.7 L492.8 182.5 L495.6 181.4 L498.4 180.3 L501.2 179.3 L504.1 178.4 L507.0 177.7 L509.9 177.1 L512.9 176.6 L515.9 176.3 L518.9 176.0 L521.9 175.9 L524.9 175.8 L527.9 175.7 L530.9 175.6 L533.9 175.5" fill="none" stroke="#2a180c" stroke-width="2.23" stroke-linecap="round" opacity="0.72"/>
<path d="M374.3 220.7 L376.4 218.5 L378.4 216.3 L380.5 214.1 L382.6 212.0 L384.7 209.9 L386.9 207.8 L389.1 205.7 L391.3 203.7 L393.5 201.7 L395.8 199.7 L398.3 198.0 L400.9 196.5 L403.8 195.3 L406.7 194.1 L409.7 193.0 L412.5 191.8 L415.3 190.5 L417.9 189.0 L420.4 187.3 L422.7 185.3 L424.8 183.2 L426.9 180.8 L428.9 178.5 L431.0 176.1 L433.2 173.9 L435.5 171.9 L438.0 170.1 L440.6 168.7 L443.5 167.7 L446.4 166.9" fill="none" stroke="#2a180c" stroke-width="1.20" stroke-linecap="round" opacity="0.85"/>
<path d="M388.6 245.2 L390.5 242.9 L392.5 240.6 L394.4 238.4 L396.4 236.1 L398.5 233.9 L400.5 231.8 L402.6 229.6 L404.8 227.5 L406.9 225.4 L409.1 223.4 L411.3 221.3 L413.6 219.3 L415.8 217.4 L418.3 215.6 L420.9 214.1 L423.6 212.7 L426.4 211.4 L429.2 210.1 L432.0 208.8 L434.7 207.5 L437.3 206.0 L439.8 204.3 L442.2 202.4 L444.5 200.4 L446.7 198.3 L448.9 196.2 L451.2 194.1 L453.5 192.1 L456.0 190.3 L458.5 188.7 L461.2 187.4 L464.0 186.4 L467.0 185.5 L470.0 184.9 L473.0 184.4 L476.1 184.0 L479.1 183.5 L482.1 182.9 L485.0 182.1" fill="none" stroke="#4a301c" stroke-width="1.32" stroke-linecap="round" opacity="0.66"/>
<path d="M575.7 228.9 L578.6 229.5 L581.5 230.2 L584.4 230.9 L587.3 231.7 L590.2 232.6 L593.0 233.6 L595.9 234.6 L598.7 235.6 L601.2 237.3 L603.6 239.4 L605.9 241.7 L608.2 243.9 L610.6 245.8 L613.2 247.3 L616.1 248.2 L619.2 248.9 L622.4 249.4 L625.5 250.1 L628.4 251.2 L630.9 252.9 L633.0 255.0 L634.8 257.7 L636.3 260.5 L637.8 263.3" fill="none" stroke="#3e2818" stroke-width="1.06" stroke-linecap="round" opacity="0.82"/>
<path d="M419.5 225.1 L421.8 223.1 L424.1 221.2 L426.4 219.3 L428.8 217.5 L431.1 215.7 L433.7 214.1 L436.5 212.8 L439.4 211.7 L442.4 210.8 L445.4 209.9 L448.4 208.9 L451.2 207.8 L454.0 206.6 L456.5 205.0 L459.0 203.3" fill="none" stroke="#4a301c" stroke-width="1.55" stroke-linecap="round" opacity="0.79"/>
<path d="M429.2 222.3 L431.6 220.4 L433.9 218.6 L436.4 216.8 L438.8 215.1 L441.3 213.4 L443.8 211.7 L446.3 210.1 L448.9 208.6 L451.4 207.0 L454.0 205.5 L456.7 204.1 L459.4 202.8 L462.3 201.8 L465.2 200.9 L468.2 200.2 L471.2 199.5 L474.1 198.8 L477.1 198.0 L479.9 197.1 L482.7 196.0 L485.4 194.7 L488.1 193.2 L490.7 191.7 L493.4 190.1 L496.1 188.6 L498.8 187.2 L501.6 186.0 L504.4 185.1 L507.3 184.4 L510.3 184.0 L513.4 183.8 L516.4 183.9 L519.5 184.0" fill="none" stroke="#7a5a40" stroke-width="0.73" stroke-linecap="round" opacity="0.74"/>
<path d="M502.2 164.5 L505.2 164.0 L508.1 163.4 L511.1 162.9 L514.0 162.5 L517.0 162.1 L520.0 161.7 L523.0 161.4 L526.0 161.1 L529.0 160.9 L531.9 160.7 L534.9 160.5 L537.9 159.9 L540.9 159.0 L543.9 157.8 L546.9 156.5 L549.9 155.3 L552.9 154.5 L555.9 154.0 L558.9 154.1 L561.9 154.6 L564.8 155.7 L567.7 157.1 L570.5 158.6 L573.3 160.2 L576.2 161.7 L579.0 162.8 L581.9 163.6 L584.9 163.9 L588.0 163.8 L591.2 163.5 L594.4 163.0 L597.6 162.5 L600.8 162.2 L603.9 162.3" fill="none" stroke="#4a301c" stroke-width="1.39" stroke-linecap="round" opacity="0.71"/>
<path d="M523.0 178.0 L525.9 177.6 L528.9 177.3 L531.9 177.1 L534.9 176.9 L537.9 176.8 L540.9 176.7 L543.9 176.7 L546.9 176.7 L549.9 177.2 L552.9 178.1 L555.9 179.3 L558.8 180.6 L561.7 181.8 L564.6 182.8 L567.6 183.5 L570.6 183.7 L573.6 183.5 L576.7 183.1 L579.9 182.4 L583.0 181.9 L586.2 181.5 L589.3 181.5 L592.2 182.0 L595.1 183.0 L597.8 184.4" fill="none" stroke="#f0e4d4" stroke-width="0.78" stroke-linecap="round" opacity="0.73"/>
<path d="M535.3 174.5 L538.3 174.4 L541.3 174.3 L544.3 174.3 L547.3 174.3 L550.3 174.4 L553.3 174.5 L556.3 174.7 L559.3 174.9 L562.3 175.2 L565.3 175.5 L568.3 175.8 L571.3 176.2 L574.3 176.1 L577.4 175.6 L580.6 174.9 L583.7 174.3 L586.9 174.0 L589.9 174.2 L592.8 175.0 L595.6 176.3 L598.2 178.1 L600.7 180.1 L603.3 182.0 L605.8 183.8 L608.5 185.1 L611.4 186.0 L614.5 186.5 L617.6 186.6 L620.9 186.7 L624.1 186.8 L627.1 187.3 L630.0 188.3 L632.6 189.8 L634.9 191.8 L637.1 194.2 L639.1 196.7" fill="none" stroke="#4a301c" stroke-width="1.48" stroke-linecap="round" opacity="0.60"/>
<path d="M435.4 219.1 L437.8 217.3 L440.3 215.6 L442.7 213.9 L445.2 212.3 L447.8 210.7 L450.3 209.1 L452.9 207.6 L455.5 206.1 L458.2 204.7 L460.8 203.3 L463.5 201.9 L466.2 200.6 L468.9 199.3 L471.7 198.1 L474.5 197.1 L477.4 196.2 L480.3 195.3 L483.2 194.6 L486.1 193.8 L489.0 193.0 L491.9 192.1 L494.7 191.2 L497.6 190.2 L500.4 189.2 L503.2 188.1 L506.0 187.1 L508.9 186.1 L511.8 185.2 L514.7 184.4 L517.6 183.8 L520.6 183.3 L523.5 183.0 L526.6 182.8 L529.6 182.8 L532.6 182.8 L535.6 182.9 L538.6 183.0 L541.6 183.1 L544.6 183.1" fill="none" stroke="#2a180c" stroke-width="1.33" stroke-linecap="round" opacity="0.77"/>
<path d="M534.6 168.9 L537.6 168.8 L540.6 168.7 L543.6 168.7 L546.6 168.7 L549.6 168.8 L552.6 168.7 L555.7 168.6 L558.7 168.5 L561.7 168.4 L564.7 168.4 L567.7 168.5 L570.7 168.8 L573.6 169.2 L576.6 169.8 L579.5 170.6" fill="none" stroke="#2a180c" stroke-width="2.02" stroke-linecap="round" opacity="0.80"/>
<path d="M453.0 165.8 L455.8 164.6 L458.6 163.4 L461.3 162.3 L464.1 161.2 L466.9 160.2 L469.8 159.2 L472.6 158.2 L475.5 157.2 L478.3 156.4 L481.2 155.5 L484.0 154.3 L486.7 152.7 L489.3 151.0 L491.9 149.2 L494.6 147.4 L497.3 145.8 L500.1 144.5 L503.0 143.5 L505.9 143.0 L508.9 142.9 L512.0 143.2 L515.1 143.7 L518.2 144.5 L521.4 145.3 L524.4 145.9 L527.5 146.4 L530.5 146.5 L533.5 146.3 L536.5 145.8 L539.5 145.0" fill="none" stroke="#cfb090" stroke-width="1.20" stroke-linecap="round" opacity="0.66"/>
<path d="M446.5 160.9 L449.2 159.7 L452.0 158.5 L454.8 157.3 L457.5 156.2 L460.3 155.1 L463.1 154.0 L466.0 153.0 L468.8 152.0 L471.6 151.1 L474.5 150.2 L477.5 149.5 L480.5 149.2 L483.6 149.1 L486.7 149.1 L489.8 149.2 L492.9 149.2 L495.9 149.0 L498.9 148.7 L501.9 148.1 L504.8 147.2 L507.6 146.1 L510.5 144.9 L513.3 143.6 L516.2 142.4 L519.1 141.3 L522.0 140.4 L524.9 139.8 L527.9 139.6 L530.9 139.7 L534.0 140.1 L537.0 140.8" fill="none" stroke="#d8bc9c" stroke-width="1.05" stroke-linecap="round" opacity="0.73"/>
<path d="M504.6 218.2 L507.5 217.4 L510.4 216.6 L513.3 215.9 L516.3 215.3 L519.2 214.7 L522.1 214.1 L525.1 213.6 L528.1 213.2 L531.0 212.6 L534.0 211.8 L536.9 211.0 L539.8 210.2 L542.8 209.5 L545.8 208.9 L548.8 208.5 L551.8 208.4 L554.8 208.5 L557.7 208.9 L560.7 209.5 L563.7 210.3 L566.6 211.1 L569.5 212.0 L572.4 212.8 L575.4 213.5 L578.3 214.0" fill="none" stroke="#4a301c" stroke-width="1.30" stroke-linecap="round" opacity="0.75"/>
<path d="M582.7 240.9 L585.6 241.7 L588.4 242.6 L591.3 243.5 L594.1 244.6 L596.9 245.7 L599.7 246.8 L602.4 248.0 L605.1 249.3 L607.8 250.7 L610.4 252.1 L613.0 253.6 L615.6 255.2 L618.7 255.9 L622.1 256.1 L625.6 256.2 L628.9 256.8 L631.8 258.0 L633.9 260.1 L635.5 263.0 L636.5 266.3 L637.5 269.7 L638.7 272.7 L640.5 275.2 L643.0 277.0 L646.0 278.3 L649.4 279.4 L652.6 280.7 L655.3 282.4 L657.1 284.7 L658.1 287.7 L658.4 291.1 L658.3 294.6 L658.4 298.0 L659.1 301.1 L660.5 303.7 L662.8 306.0 L665.5 308.0" fill="none" stroke="#3e2818" stroke-width="1.85" stroke-linecap="round" opacity="0.84"/>
<path d="M649.6 318.6 L650.6 321.5 L651.4 324.3 L652.2 327.2 L652.9 330.2 L653.4 333.1 L653.9 336.1 L654.3 339.0 L654.9 342.0 L655.6 344.9 L656.1 347.9 L656.5 350.9 L656.6 353.9 L656.4 356.9 L656.0 359.9 L655.6 362.9 L655.2 365.8 L654.9 368.8 L654.7 371.8 L654.4 374.8 L654.1 377.8 L653.6 380.8" fill="none" stroke="#4a301c" stroke-width="1.55" stroke-linecap="round" opacity="0.92"/>
<path d="M460.3 155.4 L463.1 154.3 L465.9 153.3 L468.7 152.3 L471.6 151.3 L474.4 150.4 L477.3 149.6 L480.2 148.7 L483.1 147.9 L486.0 147.2 L488.9 146.4 L491.7 145.4 L494.5 144.2 L497.3 142.9 L500.1 141.5 L502.9 140.1 L505.7 138.9 L508.6 137.9 L511.5 137.1 L514.5 136.7 L517.5 136.7 L520.5 136.9 L523.6 137.3 L526.7 137.9 L529.7 138.5 L532.7 139.0 L535.8 139.4 L538.8 139.6 L541.8 139.6 L544.8 139.2 L547.8 138.7 L550.8 138.0" fill="none" stroke="#2a180c" stroke-width="1.84" stroke-linecap="round" opacity="0.87"/>
<path d="M478.9 212.8 L481.7 211.6 L484.4 210.5 L487.2 209.4 L490.0 208.4 L492.9 207.4 L495.7 206.4 L498.6 205.5 L501.5 204.7 L504.4 204.1 L507.5 203.9 L510.6 204.0 L513.7 204.2 L516.8 204.4 L519.9 204.6 L523.0 204.7 L526.0 204.5 L529.0 204.1 L531.9 203.4 L534.8 202.5 L537.8 201.4 L540.7 200.3 L543.6 199.2 L546.6 198.3 L549.6 197.7" fill="none" stroke="#cfb090" stroke-width="0.94" stroke-linecap="round" opacity="0.65"/>
<path d="M542.1 181.6 L545.1 181.5 L548.1 181.6 L551.1 181.6 L554.1 181.7 L557.1 181.9 L560.1 182.1 L563.0 182.4 L566.0 182.7 L569.0 183.2 L571.9 183.9 L574.8 184.7 L577.7 185.6 L580.6 186.4 L583.6 187.2 L586.5 187.8 L589.5 188.3 L592.4 188.7 L595.4 189.1 L598.4 189.6 L601.4 190.1 L604.3 190.9 L607.2 191.8 L609.9 193.0 L612.6 194.4 L615.3 195.8" fill="none" stroke="#2a180c" stroke-width="2.31" stroke-linecap="round" opacity="0.72"/>
<path d="M523.9 255.2 L526.8 254.5 L529.7 253.9 L532.7 253.3 L535.6 252.9 L538.6 252.5 L541.6 252.1 L544.6 251.9 L547.6 251.7 L550.6 251.7 L553.6 251.7 L556.6 251.8 L559.6 251.9 L562.5 252.5 L565.4 253.6 L568.3 254.9 L571.2 256.4 L574.0 257.7 L576.8 258.8 L579.7 259.6 L582.7 260.0 L585.8 260.1 L588.9 260.1 L592.1 260.1 L595.3 260.3 L598.3 260.8 L601.1 261.8 L603.7 263.3 L606.1 265.2 L608.3 267.5 L610.3 269.9 L612.4 272.4 L614.5 274.6 L616.7 276.7 L619.2 278.4 L621.8 279.8 L624.7 281.1 L627.6 282.3" fill="none" stroke="#2a180c" stroke-width="1.06" stroke-linecap="round" opacity="0.81"/>
<path d="M474.9 218.5 L477.6 217.2 L480.4 216.0 L483.1 214.8 L485.9 213.7 L488.7 212.6 L491.5 211.5 L494.3 210.5 L497.2 209.6 L500.0 208.7 L502.9 207.8 L505.8 207.0 L508.7 206.3 L511.6 205.3 L514.4 204.2 L517.2 203.0 L520.0 201.7 L522.8 200.5 L525.7 199.5 L528.6 198.6 L531.6 198.0 L534.6 197.8 L537.6 197.8 L540.6 198.0 L543.6 198.5 L546.6 199.1 L549.6 199.7 L552.6 200.4 L555.6 200.9 L558.6 201.2 L561.6 201.4 L564.6 201.4 L567.6 201.3 L570.7 201.0 L573.8 200.7 L576.8 200.5 L579.9 200.5 L582.9 200.6" fill="none" stroke="#4a301c" stroke-width="1.10" stroke-linecap="round" opacity="0.92"/>
<path d="M628.8 276.1 L631.0 278.2 L633.1 280.3 L635.1 282.5 L637.1 284.8 L639.0 287.1 L640.9 289.5 L642.6 291.9 L643.8 294.8 L644.4 298.0 L644.9 301.3 L645.7 304.3 L647.0 307.0 L649.0 309.3 L651.5 311.5 L654.0 313.6 L656.1 316.0 L657.4 318.7 L657.9 321.7 L657.6 324.9 L657.0 328.2 L656.6 331.4 L656.7 334.4" fill="none" stroke="#d8bc9c" stroke-width="0.63" stroke-linecap="round" opacity="0.78"/>
<path d="M640.5 337.7 L641.2 340.7 L641.8 343.6 L642.2 346.6 L642.6 349.5 L642.9 352.5 L643.0 355.5 L643.0 358.5 L642.8 361.5 L642.4 364.5 L641.9 367.5 L641.4 370.5 L640.9 373.4 L640.5 376.4 L640.2 379.4 L639.7 382.4 L639.1 385.3 L638.1 388.2 L636.9 390.9 L635.5 393.5 L633.9 396.1 L632.2 398.6" fill="none" stroke="#4e3420" stroke-width="1.37" stroke-linecap="round" opacity="0.68"/>
<path d="M421.6 203.9 L424.1 202.1 L426.5 200.4 L429.0 198.7 L431.5 197.0 L434.0 195.4 L436.6 193.8 L439.1 192.2 L441.7 190.7 L444.4 189.5 L447.3 188.4 L450.3 187.6 L453.3 187.0 L456.4 186.3 L459.4 185.6 L462.3 184.8 L465.2 183.8 L467.9 182.6 L470.5 181.2 L473.1 179.5 L475.7 177.8 L478.2 176.0 L480.7 174.2 L483.4 172.6 L486.1 171.1 L488.8 170.0" fill="none" stroke="#4a301c" stroke-width="1.11" stroke-linecap="round" opacity="0.68"/>
<path d="M531.9 192.5 L534.8 192.3 L537.8 192.1 L540.8 192.0 L543.8 191.9 L546.8 191.9 L549.8 191.9 L552.8 192.0 L555.8 192.1 L558.8 192.2 L561.8 192.4 L564.8 192.7 L567.8 193.0 L570.8 193.4 L573.7 193.8 L576.7 194.2 L579.7 194.7" fill="none" stroke="#4a301c" stroke-width="2.37" stroke-linecap="round" opacity="0.89"/>
<path d="M461.7 202.8 L464.4 201.5 L467.1 200.2 L469.8 198.9 L472.6 197.7 L475.3 196.5 L478.1 195.4 L480.9 194.3 L483.7 193.3 L486.6 192.3 L489.4 191.4 L492.3 190.5 L495.2 189.6 L498.0 188.8 L501.0 188.3 L504.1 188.2 L507.2 188.3 L510.3 188.6 L513.5 188.9 L516.6 189.2 L519.7 189.3 L522.7 189.2 L525.6 188.7 L528.6 188.0 L531.5 187.1 L534.4 186.0 L537.3 184.8 L540.3 183.6 L543.2 182.7 L546.2 182.0 L549.2 181.7 L552.2 181.7 L555.2 182.2 L558.2 183.0 L561.1 184.0 L564.0 185.2 L566.9 186.5 L569.8 187.6 L572.7 188.6 L575.6 189.4" fill="none" stroke="#e6d4bc" stroke-width="0.85" stroke-linecap="round" opacity="0.72"/>
<path d="M434.9 218.6 L437.4 216.8 L439.8 215.1 L442.3 213.4 L444.8 211.8 L447.3 210.1 L450.0 208.7 L452.8 207.6 L455.7 206.6 L458.7 205.7 L461.6 204.9 L464.6 204.0 L467.5 203.1 L470.3 202.0 L473.0 200.7 L475.6 199.2 L478.2 197.6" fill="none" stroke="#d8bc9c" stroke-width="0.81" stroke-linecap="round" opacity="0.73"/>
<path d="M376.3 216.2 L378.4 214.0 L380.5 211.8 L382.6 209.7 L384.7 207.6 L386.9 205.5 L389.1 203.5 L391.3 201.5 L393.6 199.5 L395.9 197.6 L398.2 195.6 L400.5 193.7 L402.7 191.7 L404.8 189.5 L406.8 187.2 L408.8 184.9 L410.9 182.6 L413.0 180.4 L415.2 178.3 L417.6 176.5 L420.1 174.8 L422.7 173.4 L425.5 172.2 L428.4 171.2 L431.3 170.2 L434.2 169.3 L437.1 168.3 L440.0 167.3 L442.7 166.1 L445.4 164.8 L448.0 163.2 L450.6 161.6 L453.1 159.8 L455.5 158.0" fill="none" stroke="#d8bc9c" stroke-width="0.93" stroke-linecap="round" opacity="0.67"/>
<path d="M584.5 207.8 L587.4 208.5 L590.3 209.3 L593.2 210.2 L596.1 211.1 L598.9 212.0 L601.7 213.1 L604.9 213.2 L608.3 212.7 L611.7 212.1 L615.2 211.7 L618.3 212.1 L621.0 213.3 L623.3 215.5 L625.2 218.3 L626.9 221.5 L628.7 224.4 L630.7 226.8 L633.2 228.5 L636.2 229.4" fill="none" stroke="#2a180c" stroke-width="1.84" stroke-linecap="round" opacity="0.61"/>
<path d="M443.9 142.8 L446.7 141.6 L449.5 140.5 L452.3 139.4 L455.1 138.3 L457.9 137.3 L460.7 136.3 L463.6 135.3 L466.4 134.4 L469.2 133.4 L472.0 132.3 L474.8 131.1 L477.6 130.0 L480.4 128.8 L483.3 127.8 L486.1 126.9 L489.0 126.1 L491.9 125.5 L494.9 125.0 L497.9 124.6 L500.9 124.4 L503.9 124.2 L506.9 124.1 L510.0 124.0 L513.0 123.8 L515.9 123.6" fill="none" stroke="#f0e4d4" stroke-width="1.25" stroke-linecap="round" opacity="0.90"/>
<path d="M505.0 162.5 L508.0 162.0 L511.0 161.5 L513.9 161.0 L516.9 160.6 L519.9 160.3 L522.9 159.9 L525.8 159.7 L528.8 159.4 L531.8 159.3 L534.8 159.1 L537.8 159.0 L540.8 158.5 L543.8 157.5 L546.8 156.4 L549.8 155.2 L552.8 154.2 L555.9 153.4 L558.9 153.1 L561.9 153.2 L564.8 153.9 L567.7 155.0 L570.6 156.4 L573.4 158.0 L576.2 159.6 L579.0 161.0 L581.9 162.0 L584.8 162.7 L587.8 163.0 L590.9 162.8 L594.1 162.5 L597.3 162.1 L600.5 161.7 L603.7 161.6 L606.7 161.9" fill="none" stroke="#4a301c" stroke-width="1.14" stroke-linecap="round" opacity="0.63"/>
<path d="M455.3 180.5 L458.1 179.2 L460.8 178.0 L463.6 176.8 L466.3 175.7 L469.1 174.6 L471.9 173.5 L474.8 172.5 L477.6 171.5 L480.4 170.6 L483.3 169.7 L486.2 168.8 L489.1 168.0 L492.0 167.2 L494.9 166.5 L497.8 165.9 L500.8 165.3 L503.7 164.9 L506.7 164.4 L509.7 164.0 L512.7 163.6 L515.6 163.2 L518.6 162.8 L521.6 162.3 L524.5 161.9 L527.5 161.4 L530.5 161.0 L533.5 160.6 L536.4 160.2 L539.4 160.0 L542.4 159.9 L545.4 159.8 L548.4 159.9 L551.4 160.1 L554.4 160.4 L557.4 160.7 L560.4 161.1 L563.4 161.5 L566.3 161.9 L569.3 162.2" fill="none" stroke="#d8bc9c" stroke-width="1.13" stroke-linecap="round" opacity="0.83"/>
<path d="M537.5 166.7 L540.5 166.6 L543.5 166.6 L546.5 166.6 L549.5 166.6 L552.5 166.8 L555.5 166.9 L558.4 167.1 L561.4 167.4 L564.4 167.7 L567.4 167.8 L570.4 167.9 L573.4 168.0 L576.5 168.1 L579.5 168.3 L582.4 168.7 L585.4 169.2 L588.3 170.0 L591.2 170.9 L594.0 171.9 L596.8 173.0 L599.7 174.0 L602.5 175.0 L605.3 176.0 L608.2 176.8 L611.1 177.5 L614.1 178.3 L617.0 179.0" fill="none" stroke="#4a301c" stroke-width="2.00" stroke-linecap="round" opacity="0.84"/>
<path d="M494.7 155.1 L497.7 154.5 L500.6 153.9 L503.6 153.3 L506.5 152.8 L509.5 152.3 L512.4 151.9 L515.4 151.5 L518.4 151.1 L521.4 150.8 L524.4 150.6 L527.4 150.3 L530.4 150.1 L533.3 149.5 L536.3 148.6 L539.2 147.4 L542.2 146.2 L545.2 145.0 L548.2 144.1 L551.2 143.6 L554.2 143.5 L557.2 143.9 L560.2 144.7 L563.1 145.9 L566.0 147.3 L568.8 148.8 L571.7 150.2 L574.6 151.4 L577.5 152.2 L580.4 152.6 L583.5 152.7 L586.6 152.4 L589.7 152.0 L592.9 151.5 L596.1 151.1 L599.2 151.0 L602.3 151.2" fill="none" stroke="#2a180c" stroke-width="2.08" stroke-linecap="round" opacity="0.81"/>
<path d="M536.8 236.5 L539.8 236.3 L542.8 236.0 L545.8 235.9 L548.8 235.8 L551.8 235.8 L554.8 235.9 L557.8 236.0 L560.8 236.2 L563.7 236.5 L566.8 236.3 L569.9 235.8 L573.0 235.2 L576.1 234.6 L579.2 234.2 L582.3 234.4 L585.2 235.0 L588.0 236.2 L590.7 237.8 L593.2 239.8 L595.7 241.8 L598.1 243.7 L600.7 245.4 L603.4 246.7 L606.3 247.6 L609.4 248.2 L612.5 248.6 L615.7 249.0" fill="none" stroke="#4a301c" stroke-width="1.36" stroke-linecap="round" opacity="0.84"/>
<path d="M650.1 326.8 L650.8 329.7 L651.4 332.7 L651.9 335.6 L652.4 338.6 L652.7 341.6 L653.0 344.6 L653.3 347.6 L653.4 350.6 L654.9 353.5 L657.1 356.5 L659.2 359.5 L660.4 362.6 L660.1 365.6 L658.5 368.4 L655.9 371.1 L653.3 373.7 L651.4 376.4 L650.8 379.3 L651.3 382.5 L652.5 386.0 L653.6 389.5 L653.9 392.8 L652.7 395.6 L650.3 397.8" fill="none" stroke="#b08c68" stroke-width="0.72" stroke-linecap="round" opacity="0.86"/>
<path d="M609.2 360.4 L609.2 363.4 L608.9 366.4 L608.5 369.4 L607.9 372.3 L607.1 375.2 L606.0 378.0 L605.9 381.2 L606.3 384.6 L606.7 388.2 L606.5 391.6 L605.6 394.6 L603.7 397.0 L600.9 398.5 L597.6 399.5 L594.1 400.0 L590.7 400.7 L587.8 401.7 L585.3 403.4 L583.2 405.8" fill="none" stroke="#2e1c10" stroke-width="2.27" stroke-linecap="round" opacity="0.77"/>
<path d="M397.7 234.9 L399.7 232.7 L401.8 230.5 L403.9 228.4 L406.1 226.3 L408.3 224.2 L410.5 222.2 L412.7 220.2 L415.0 218.3 L417.4 216.5 L419.9 214.8 L422.5 213.2 L425.0 211.6 L427.6 210.0 L430.1 208.4 L432.6 206.7 L435.1 205.0 L437.5 203.2 L439.9 201.3 L442.2 199.4 L444.6 197.6 L447.0 195.7" fill="none" stroke="#7a5a40" stroke-width="1.14" stroke-linecap="round" opacity="0.75"/>
<path d="M439.5 173.1 L442.2 171.8 L444.9 170.4 L447.6 169.1 L450.3 167.8 L453.0 166.6 L455.8 165.4 L458.5 164.2 L461.3 163.1 L464.1 162.0 L467.0 161.2 L470.0 160.6 L473.1 160.3 L476.2 160.1 L479.3 159.9 L482.3 159.6 L485.4 159.3 L488.3 158.7 L491.2 157.9 L494.1 156.9 L496.8 155.7 L499.6 154.4 L502.4 152.9 L505.2 151.6 L508.0 150.4 L510.9 149.4 L513.8 148.7 L516.8 148.3 L519.8 148.2" fill="none" stroke="#4a301c" stroke-width="1.15" stroke-linecap="round" opacity="0.61"/>
<path d="M558.8 181.8 L561.8 182.1 L564.8 182.4 L567.8 182.7 L570.7 183.1 L573.7 183.6 L576.7 184.1 L579.6 184.6 L582.5 185.2 L585.5 185.9 L588.4 186.6 L591.3 187.3 L594.0 188.7 L596.6 190.6 L599.1 192.7 L601.6 194.8 L604.2 196.5 L607.0 197.7 L609.9 198.3 L613.1 198.5 L616.4 198.4 L619.7 198.4 L622.8 198.7 L625.7 199.7 L628.2 201.2 L630.5 203.4 L632.5 205.9 L634.5 208.6 L636.5 211.1 L638.8 213.1 L641.3 214.7 L644.2 215.7 L647.4 216.5 L650.6 217.1" fill="none" stroke="#3e2818" stroke-width="1.66" stroke-linecap="round" opacity="0.63"/>
<path d="M499.1 151.5 L502.1 150.9 L505.0 150.4 L508.0 149.9 L511.0 149.5 L513.9 149.1 L517.0 149.0 L520.0 149.4 L523.1 150.0 L526.2 150.8 L529.3 151.7 L532.3 152.5 L535.4 153.0 L538.4 153.3 L541.4 153.2 L544.4 152.7 L547.4 152.0" fill="none" stroke="#d8bc9c" stroke-width="0.64" stroke-linecap="round" opacity="0.70"/>
<path d="M526.5 212.5 L529.5 212.1 L532.5 211.8 L535.4 211.5 L538.4 211.3 L541.4 211.1 L544.4 210.9 L547.4 210.6 L550.4 210.3 L553.4 210.1 L556.4 209.9 L559.4 209.9 L562.4 210.0 L565.4 210.2 L568.4 210.6 L571.3 211.2 L574.3 211.9" fill="none" stroke="#b08c68" stroke-width="0.62" stroke-linecap="round" opacity="0.70"/>
<path d="M622.3 321.1 L623.9 323.7 L625.4 326.3 L626.8 328.9 L628.1 331.6 L629.4 334.3 L630.5 337.1 L631.6 339.9 L632.5 342.8 L634.8 345.2 L637.8 347.5 L640.8 350.0 L643.0 352.7 L643.8 355.7 L643.0 358.7 L641.0 361.7 L638.3 364.7 L636.0 367.5 L634.6 370.4 L634.6 373.4 L635.7 376.7 L637.4 380.2 L638.9 383.7 L639.5 387.0 L638.6 389.9" fill="none" stroke="#3e2818" stroke-width="1.34" stroke-linecap="round" opacity="0.86"/>
<path d="M458.6 192.5 L461.3 191.2 L464.1 190.0 L466.8 188.7 L469.6 187.6 L472.3 186.4 L475.0 184.9 L477.5 183.2 L480.0 181.3 L482.4 179.3 L484.9 177.3 L487.5 175.5 L490.2 173.9 L493.0 172.8 L495.9 172.0 L498.9 171.6 L501.9 171.6" fill="none" stroke="#4a301c" stroke-width="1.56" stroke-linecap="round" opacity="0.80"/>
<path d="M538.9 214.9 L541.9 214.7 L544.9 214.6 L547.9 214.6 L550.9 214.6 L553.9 214.7 L556.9 214.8 L559.9 215.1 L562.8 215.3 L565.8 215.6 L568.8 215.8 L571.9 215.8 L574.9 215.8 L577.9 215.8 L580.9 216.0 L583.9 216.5 L586.8 217.1 L589.7 218.1 L592.5 219.2 L595.2 220.6 L597.9 221.9 L600.6 223.3 L603.4 224.5 L606.2 225.6 L609.0 226.6 L611.9 227.5 L614.8 228.4 L617.7 229.3" fill="none" stroke="#2a180c" stroke-width="1.07" stroke-linecap="round" opacity="0.70"/>
<path d="M446.6 161.9 L449.4 160.6 L452.1 159.4 L454.9 158.3 L457.6 157.1 L460.4 156.0 L463.2 154.9 L466.0 153.8 L468.8 152.8 L471.6 151.7 L474.5 150.7 L477.3 149.8 L480.2 148.9 L483.1 148.0 L486.0 147.2 L488.9 146.5" fill="none" stroke="#2a180c" stroke-width="1.50" stroke-linecap="round" opacity="0.76"/>
<path d="M603.1 334.9 L604.6 337.5 L606.0 340.2 L607.3 342.9 L608.4 345.7 L609.3 348.5 L610.1 351.4 L610.6 354.4 L611.0 357.4 L611.2 360.4 L611.2 363.4 L611.0 366.3 L610.3 369.3 L609.1 372.2 L607.6 374.9 L606.1 377.6 L604.7 380.3 L603.6 383.1 L602.7 386.0 L601.9 389.0 L601.0 392.0 L599.7 394.8 L597.9 397.3 L595.6 399.2 L592.9 400.7 L590.0 401.9 L587.0 402.8 L584.1 403.8 L581.3 404.9 L578.7 406.3 L576.1 408.0 L573.4 409.7 L570.7 411.1 L567.8 412.2" fill="none" stroke="#4e3420" stroke-width="2.17" stroke-linecap="round" opacity="0.78"/>
<path d="M612.0 275.2 L614.4 277.0 L616.8 278.8 L619.1 280.7 L621.4 282.7 L623.6 284.7 L625.7 286.8 L629.0 287.8 L632.9 288.2 L637.0 288.5 L640.6 289.4 L643.1 291.3 L644.2 294.2 L644.2 297.9 L643.5 301.9 L642.8 305.8 L643.0 309.2 L644.4 311.9 L647.1 313.9" fill="none" stroke="#4a301c" stroke-width="1.38" stroke-linecap="round" opacity="0.91"/>
<path d="M465.1 228.6 L467.7 227.0 L470.3 225.6 L473.0 224.1 L475.6 222.8 L478.3 221.5 L481.0 220.2 L483.8 219.0 L486.5 217.8 L489.3 216.7 L492.1 215.6 L495.0 214.6 L497.8 213.6 L500.6 212.6 L503.4 211.5 L506.2 210.4 L509.0 209.3 L511.9 208.3 L514.7 207.3 L517.6 206.5 L520.5 205.8 L523.5 205.3 L526.5 204.9 L529.5 204.7 L532.5 204.6 L535.5 204.6 L538.5 204.6 L541.5 204.7 L544.5 204.7 L547.5 204.7 L550.5 204.7 L553.5 204.6 L556.5 204.5 L559.5 204.4 L562.5 204.3 L565.6 204.3 L568.6 204.4" fill="none" stroke="#7a5a40" stroke-width="1.14" stroke-linecap="round" opacity="0.94"/>
<path d="M615.1 264.1 L617.6 265.8 L620.0 267.5 L622.4 269.4 L624.7 271.3 L627.0 273.2 L629.2 275.2 L631.4 277.3 L633.5 279.5 L635.5 281.7 L637.5 283.9 L640.6 285.2 L644.4 286.0 L648.2 286.8 L651.4 288.1 L653.5 290.4 L654.2 293.5 L653.9 297.2 L653.1 301.1 L652.7 304.7 L653.3 307.8 L655.2 310.2 L658.2 312.2 L661.7 314.0 L664.9 316.0 L667.0 318.5 L667.7 321.4 L666.8 324.8 L665.1 328.3 L663.3 331.7 L662.2 335.0 L662.5 337.9" fill="none" stroke="#2e1c10" stroke-width="1.15" stroke-linecap="round" opacity="0.91"/>
<path d="M473.6 209.1 L476.3 207.8 L479.1 206.6 L481.9 205.5 L484.7 204.4 L487.5 203.3 L490.3 202.3 L493.1 201.4 L496.0 200.5 L498.9 199.6 L501.8 198.8 L504.6 197.7 L507.3 196.4 L510.1 194.9 L512.8 193.3 L515.5 191.8 L518.3 190.5 L521.2 189.4 L524.1 188.6 L527.1 188.3 L530.1 188.2 L533.2 188.6 L536.2 189.1 L539.3 189.9 L542.3 190.6 L545.3 191.3 L548.3 191.9 L551.3 192.2 L554.3 192.3 L557.4 192.0 L560.4 191.6 L563.4 191.0" fill="none" stroke="#2a180c" stroke-width="1.66" stroke-linecap="round" opacity="0.75"/>
<path d="M635.1 337.4 L636.1 340.3 L636.9 343.2 L637.5 346.1 L638.0 349.1 L638.4 352.0 L638.6 355.0 L638.7 358.0 L638.6 361.0 L638.5 364.0 L638.2 367.0 L637.8 370.0 L638.3 373.1 L639.4 376.3 L640.3 379.6 L640.6 382.8 L640.0 385.7 L638.3 388.3 L635.9 390.6 L633.2 392.7 L630.7 394.8 L628.8 397.2 L627.7 400.0 L627.1 403.2 L626.8 406.6 L626.1 409.9 L624.8 412.8 L622.7 414.9 L619.9 416.3 L616.6 417.2 L613.3 418.1 L610.3 419.2 L607.9 421.0 L606.0 423.4 L604.3 426.3" fill="none" stroke="#4e3420" stroke-width="1.68" stroke-linecap="round" opacity="0.85"/>
<path d="M530.9 204.8 L533.8 204.5 L536.8 204.3 L539.8 204.1 L542.8 204.0 L545.8 203.9 L548.8 203.9 L551.8 204.0 L554.8 204.1 L557.8 204.3 L560.8 204.5 L563.8 204.2 L566.9 203.4 L570.1 202.4 L573.2 201.5 L576.4 200.8 L579.4 200.7 L582.4 201.1 L585.2 202.2 L587.9 203.8 L590.5 205.8 L593.1 207.9 L595.6 209.9 L598.2 211.6 L601.0 212.8 L603.9 213.4 L607.1 213.7 L610.3 213.7 L613.6 213.6 L616.8 213.7 L619.9 214.1" fill="none" stroke="#d8bc9c" stroke-width="1.29" stroke-linecap="round" opacity="0.93"/>
<path d="M632.5 290.6 L634.4 292.9 L636.3 295.3 L638.0 297.7 L639.7 300.2 L641.3 302.8 L644.1 304.6 L647.5 306.0 L651.0 307.6 L653.8 309.5 L655.3 312.2 L655.4 315.3 L654.5 318.9 L653.2 322.5 L652.4 325.9 L652.6 329.0 L654.1 331.7" fill="none" stroke="#2a180c" stroke-width="1.77" stroke-linecap="round" opacity="0.76"/>
<path d="M518.6 161.0 L521.6 160.7 L524.6 160.4 L527.6 160.1 L530.6 159.9 L533.6 159.8 L536.6 159.6 L539.6 159.6 L542.6 160.0 L545.6 160.8 L548.6 161.9 L551.5 163.2 L554.5 164.5 L557.5 165.5 L560.4 166.2 L563.4 166.4 L566.4 166.3 L569.5 165.7 L572.6 165.0 L575.8 164.2 L578.9 163.5 L582.0 163.1 L585.1 163.2" fill="none" stroke="#7a5a40" stroke-width="1.27" stroke-linecap="round" opacity="0.81"/>
<path d="M387.9 218.0 L390.0 215.9 L392.2 213.8 L394.4 211.7 L396.6 209.7 L398.8 207.7 L401.1 205.7 L403.4 203.7 L405.7 201.8 L408.0 199.9 L410.4 198.1 L412.7 196.3 L415.2 194.5 L417.4 192.5 L419.5 190.3 L421.6 188.0 L423.7 185.7 L425.7 183.4 L427.9 181.2 L430.2 179.2 L432.6 177.5 L435.2 176.0 L438.0 174.7 L440.8 173.7 L443.8 172.9 L446.8 172.2 L449.9 171.6 L452.9 170.9 L455.8 170.1 L458.6 169.1 L461.4 167.9 L464.0 166.4 L466.6 164.9 L469.2 163.1 L471.7 161.4 L474.3 159.7 L476.9 158.1 L479.6 156.7" fill="none" stroke="#cfb090" stroke-width="1.25" stroke-linecap="round" opacity="0.89"/>
<path d="M502.9 148.5 L505.8 147.9 L508.8 147.5 L511.8 147.0 L514.7 146.7 L517.7 146.3 L520.7 146.0 L523.7 145.7 L526.7 145.5 L529.7 145.3 L532.7 145.2 L535.7 145.1 L538.7 145.3 L541.7 145.9 L544.7 146.8 L547.7 147.8 L550.7 148.8 L553.7 149.6 L556.6 150.2 L559.6 150.4 L562.6 150.4 L565.7 150.0 L568.7 149.5 L571.8 148.9 L574.9 148.3 L578.0 148.0 L581.1 148.0 L584.0 148.4 L586.9 149.1 L589.8 150.3 L592.5 151.7 L595.2 153.4 L597.9 155.0 L600.6 156.6" fill="none" stroke="#b08c68" stroke-width="0.63" stroke-linecap="round" opacity="0.62"/>
<path d="M545.9 252.9 L548.9 252.7 L551.9 252.7 L554.9 252.7 L557.9 252.8 L560.9 253.0 L563.9 253.3 L566.9 253.7 L569.9 254.1 L572.8 254.7 L575.8 255.3 L578.7 256.0 L581.6 256.7 L584.2 258.5 L586.6 261.0 L588.8 263.9 L590.9 266.8 L593.2 269.3 L595.8 271.0 L598.7 271.8 L602.0 271.9 L605.5 271.6 L609.2 271.2 L612.7 271.3 L615.8 272.0 L618.4 273.6 L620.3 276.1 L621.6 279.3 L622.5 282.8 L623.4 286.3 L624.5 289.5 L626.2 292.1 L628.4 294.1 L631.4 295.5 L634.8 296.6 L638.3 297.7 L641.6 299.0" fill="none" stroke="#4a301c" stroke-width="1.95" stroke-linecap="round" opacity="0.83"/>
<path d="M541.3 222.7 L544.3 222.6 L547.3 222.5 L550.3 222.5 L553.3 222.5 L556.3 222.7 L559.3 222.9 L562.3 223.1 L565.3 223.4 L568.3 223.8 L571.2 224.3 L574.3 223.9 L577.5 223.1 L580.8 222.0 L584.1 221.0 L587.3 220.4 L590.4 220.5 L593.2 221.4 L595.8 223.1 L598.2 225.5 L600.5 228.1 L602.7 230.7 L605.0 233.0 L607.5 234.7 L610.3 235.8 L613.4 236.3 L616.8 236.3 L620.3 236.2 L623.7 236.3 L626.8 236.8 L629.7 238.0" fill="none" stroke="#d8bc9c" stroke-width="1.11" stroke-linecap="round" opacity="0.88"/>
<path d="M483.3 186.7 L486.2 185.8 L489.0 184.9 L491.9 184.0 L494.8 183.2 L497.7 182.4 L500.6 181.7 L503.5 181.0 L506.4 180.4 L509.4 179.9 L512.4 179.6 L515.4 179.4 L518.4 179.3 L521.5 179.3 L524.5 179.3 L527.5 179.2 L530.5 179.0 L533.5 178.8 L536.5 178.4 L539.5 178.0 L542.4 177.5 L545.4 177.0 L548.4 176.5 L551.4 176.2 L554.4 176.0 L557.4 176.0" fill="none" stroke="#cfb090" stroke-width="1.29" stroke-linecap="round" opacity="0.92"/>
<path d="M642.2 320.2 L643.3 323.0 L644.3 325.8 L645.1 328.7 L645.8 331.6 L646.4 334.6 L646.9 337.5 L647.4 340.5 L647.8 343.5 L648.1 346.5 L649.8 349.3 L652.3 352.1 L654.7 355.0 L656.2 358.0 L656.2 361.0 L654.8 363.9 L652.3 366.7 L649.7 369.5 L647.7 372.2 L646.9 375.1 L647.4 378.3 L648.8 381.7 L650.2 385.2 L650.9 388.6 L650.2 391.6 L648.2 394.0 L645.1 395.9 L641.6 397.6 L638.7 399.4" fill="none" stroke="#b08c68" stroke-width="1.09" stroke-linecap="round" opacity="0.66"/>
<path d="M449.2 178.5 L451.9 177.2 L454.6 175.9 L457.3 174.6 L460.1 173.4 L462.9 172.3 L465.7 171.2 L468.5 170.3 L471.4 169.5 L474.4 168.7 L477.3 168.0 L480.2 167.3 L483.1 166.6 L486.0 165.8 L488.9 165.0 L491.8 164.1 L494.6 163.1" fill="none" stroke="#2a180c" stroke-width="2.19" stroke-linecap="round" opacity="0.79"/>
<path d="M477.6 152.4 L480.5 151.6 L483.4 150.8 L486.3 150.0 L489.2 149.3 L492.1 148.6 L495.0 148.0 L498.0 147.3 L500.9 146.8 L503.9 146.2 L506.8 145.8 L509.8 145.3 L512.8 144.9 L515.8 144.7 L518.8 144.9 L521.9 145.2 L524.9 145.7 L528.0 146.2 L531.0 146.6 L534.0 146.9 L537.1 147.1 L540.1 147.0 L543.0 146.7 L546.0 146.2 L549.1 145.5 L552.1 144.8 L555.1 144.2 L558.1 143.7 L561.2 143.4 L564.2 143.4 L567.2 143.7 L570.1 144.3 L573.0 145.2 L575.9 146.3 L578.7 147.5 L581.6 148.7 L584.4 149.9 L587.3 151.0" fill="none" stroke="#4a301c" stroke-width="2.09" stroke-linecap="round" opacity="0.81"/>
<path d="M512.7 173.5 L515.6 173.0 L518.6 172.6 L521.6 172.2 L524.6 171.9 L527.6 171.6 L530.5 171.4 L533.5 171.2 L536.5 171.0 L539.5 170.9 L542.5 170.9 L545.5 170.9 L548.5 170.7 L551.5 170.4 L554.5 170.1 L557.6 169.8 L560.6 169.6 L563.6 169.6 L566.6 169.7 L569.6 170.1 L572.5 170.7 L575.4 171.4 L578.3 172.3 L581.2 173.3 L584.1 174.2 L587.0 175.0 L589.9 175.8 L592.8 176.4 L595.8 176.9 L598.8 177.4 L601.8 177.8 L604.8 178.3 L607.7 178.9 L610.6 179.7 L613.5 180.6" fill="none" stroke="#2a180c" stroke-width="1.90" stroke-linecap="round" opacity="0.71"/>
<path d="M509.3 185.2 L512.2 184.6 L515.2 184.1 L518.1 183.6 L521.1 183.2 L524.1 182.8 L527.1 182.5 L530.0 182.2 L533.0 182.0 L536.0 181.8 L539.0 181.7 L542.0 181.6 L545.0 181.6 L548.0 181.8 L551.0 182.1 L554.0 182.6 L557.0 183.1 L560.0 183.7 L562.9 184.2 L565.9 184.6 L568.9 184.9 L571.9 185.0 L574.9 185.1 L577.9 185.2 L581.0 185.3 L584.0 185.5 L587.0 185.9 L589.9 186.5 L592.8 187.2 L595.7 188.2 L598.4 189.4 L601.2 190.7 L603.9 192.0 L606.6 193.3 L609.4 194.5 L612.2 195.7 L615.0 196.7 L617.9 197.6" fill="none" stroke="#7a5a40" stroke-width="0.99" stroke-linecap="round" opacity="0.92"/>
<path d="M432.4 156.4 L435.1 155.0 L437.8 153.7 L440.5 152.4 L443.2 151.2 L446.0 150.0 L448.7 148.8 L451.5 147.6 L454.3 146.5 L457.1 145.5 L459.9 144.4 L462.7 143.4 L465.6 142.4 L468.4 141.5 L471.3 140.7 L474.2 140.0 L477.1 139.3 L480.1 138.6 L483.0 138.0 L485.9 137.3 L488.9 136.7 L491.8 136.0 L494.7 135.3 L497.6 134.6 L500.5 133.8 L503.5 133.1 L506.4 132.5 L509.3 131.8 L512.3 131.3 L515.3 130.9 L518.2 130.5 L521.2 130.3 L524.2 130.2 L527.2 130.1 L530.2 130.1 L533.2 130.1 L536.2 130.2" fill="none" stroke="#7a5a40" stroke-width="0.66" stroke-linecap="round" opacity="0.78"/>
<path d="M448.6 147.2 L451.4 146.0 L454.2 144.9 L457.0 143.8 L459.8 142.8 L462.6 141.8 L465.5 140.8 L468.3 139.9 L471.2 139.0 L474.0 138.2 L476.9 137.3 L479.9 136.7 L482.8 136.2 L485.8 135.8 L488.8 135.5 L491.9 135.2 L494.9 135.0 L497.9 134.6 L500.8 134.2 L503.8 133.7 L506.7 133.0 L509.7 132.3 L512.6 131.5 L515.5 130.7 L518.4 129.9 L521.4 129.3 L524.3 128.7 L527.3 128.4 L530.3 128.2 L533.3 128.2 L536.3 128.4" fill="none" stroke="#4a301c" stroke-width="1.45" stroke-linecap="round" opacity="0.78"/>
<path d="M630.1 349.5 L630.5 352.5 L630.9 355.5 L631.0 358.5 L631.1 361.5 L630.9 364.5 L630.7 367.5 L630.3 370.4 L629.7 373.4 L629.0 376.3 L628.2 379.2 L627.3 382.0 L625.4 384.6 L622.8 386.8 L620.0 388.9 L617.5 391.0 L615.6 393.4 L614.5 396.2 L613.9 399.4 L613.5 402.9 L612.8 406.2 L611.4 409.0 L609.2 411.1 L606.3 412.3 L602.9 413.0 L599.5 413.4 L596.3 414.0 L593.5 415.2 L591.1 417.1 L589.0 419.7 L587.0 422.4 L584.7 425.0 L582.1 426.7 L579.2 427.4" fill="none" stroke="#3e2818" stroke-width="2.04" stroke-linecap="round" opacity="0.62"/>
<path d="M621.6 361.0 L621.5 364.0 L621.3 367.0 L620.9 369.9 L620.3 372.9 L619.6 375.8 L618.7 378.7 L617.7 381.5 L616.6 384.3 L615.2 387.0 L613.8 389.6 L612.2 392.1 L611.4 395.2 L611.0 398.5 L610.5 402.0 L609.7 405.3 L608.2 408.0 L605.8 409.9 L602.8 411.0 L599.4 411.5 L595.9 411.7 L592.7 412.2 L589.8 413.1 L587.3 414.9 L585.0 417.2 L582.8 419.9 L580.5 422.5 L577.9 424.5 L575.1 425.5 L572.0 425.4 L568.9 424.4 L565.8 422.8 L562.7 421.2 L559.8 420.0" fill="none" stroke="#4a301c" stroke-width="1.85" stroke-linecap="round" opacity="0.65"/>
<path d="M456.2 153.2 L459.0 152.1 L461.8 151.0 L464.7 150.0 L467.5 149.0 L470.3 148.1 L473.2 147.2 L476.1 146.3 L478.9 145.4 L481.8 144.7 L484.7 143.9 L487.6 142.9 L490.4 141.9 L493.2 140.7 L496.0 139.5 L498.9 138.3 L501.7 137.3 L504.6 136.4 L507.5 135.7 L510.5 135.3 L513.5 135.0 L516.5 135.0 L519.5 135.2 L522.6 135.5 L525.6 135.8 L528.7 136.1 L531.7 136.2 L534.7 136.3 L537.7 136.2 L540.7 135.9 L543.7 135.5 L546.7 135.0" fill="none" stroke="#2a180c" stroke-width="1.85" stroke-linecap="round" opacity="0.71"/>
<path d="M524.9 146.1 L527.9 145.8 L530.9 145.7 L533.9 145.5 L536.9 145.4 L539.9 145.4 L542.9 145.9 L545.9 146.8 L548.9 148.1 L551.9 149.6 L554.8 150.9 L557.8 152.1 L560.7 152.8 L563.7 153.0 L566.7 152.8 L569.8 152.2 L573.0 151.3" fill="none" stroke="#2a180c" stroke-width="2.00" stroke-linecap="round" opacity="0.78"/>
<path d="M584.0 249.9 L586.9 250.8 L589.7 251.7 L592.6 252.7 L595.4 253.9 L598.1 255.0 L600.8 256.3 L603.5 257.6 L606.2 259.0 L609.4 259.3 L613.1 258.9 L616.9 258.4 L620.5 258.2 L623.7 258.9 L626.1 260.8 L627.7 263.6 L628.7 267.2 L629.4 271.0 L630.4 274.5 L631.8 277.3 L634.1 279.2 L637.2 280.4 L640.9 281.1 L644.7 281.8 L648.1 282.9 L650.7 284.6" fill="none" stroke="#4e3420" stroke-width="1.01" stroke-linecap="round" opacity="0.76"/>
<path d="M554.8 202.8 L557.8 202.9 L560.7 203.2 L563.7 203.5 L566.7 203.8 L569.7 204.2 L572.7 204.4 L575.7 204.5 L578.7 204.6 L581.7 204.8 L584.7 205.1 L587.7 205.6 L590.6 206.4 L593.5 207.4 L596.2 208.5 L599.0 209.8 L601.7 211.2" fill="none" stroke="#2a180c" stroke-width="2.29" stroke-linecap="round" opacity="0.64"/>
<path d="M571.4 250.0 L574.4 250.6 L577.3 251.2 L580.2 251.9 L583.1 252.7 L586.0 253.6 L588.8 254.5 L591.6 255.6 L594.4 256.7 L596.9 258.6 L599.0 261.3 L600.9 264.3 L602.9 267.2 L605.0 269.6 L607.5 271.3 L610.5 272.2 L613.8 272.5 L617.4 272.6 L620.9 272.9 L624.0 273.7 L626.6 275.3 L628.5 277.7 L629.8 280.7 L630.6 284.1 L631.4 287.6 L632.4 290.8" fill="none" stroke="#3e2818" stroke-width="2.34" stroke-linecap="round" opacity="0.70"/>
<path d="M426.9 194.1 L429.5 192.4 L432.0 190.8 L434.5 189.2 L437.1 187.7 L439.7 186.2 L442.3 184.7 L444.7 182.9 L447.0 180.8 L449.2 178.6 L451.4 176.2 L453.6 173.9 L455.9 171.8 L458.3 169.9 L460.9 168.3 L463.7 167.2 L466.6 166.4 L469.7 166.0 L472.9 165.9" fill="none" stroke="#4a301c" stroke-width="1.52" stroke-linecap="round" opacity="0.93"/>
<path d="M511.2 154.5 L514.2 154.0 L517.1 153.7 L520.1 153.3 L523.1 153.0 L526.1 152.8 L529.1 152.6 L532.1 152.6 L535.1 152.7 L538.1 152.8 L541.1 153.0 L544.1 153.2 L547.1 153.4 L550.1 153.5 L553.1 153.5 L556.1 153.5" fill="none" stroke="#d8bc9c" stroke-width="0.64" stroke-linecap="round" opacity="0.85"/>
<path d="M412.0 187.0 L414.4 185.3 L416.9 183.6 L419.4 181.9 L421.9 180.3 L424.5 178.7 L427.0 177.1 L429.6 175.6 L432.2 174.1 L434.8 172.6 L437.5 171.2 L440.1 169.8 L442.8 168.5 L445.5 167.1 L448.3 166.1 L451.3 165.4 L454.4 165.0 L457.5 164.6 L460.7 164.4 L463.8 164.0 L466.8 163.5 L469.7 162.7 L472.6 161.7 L475.3 160.4 L477.9 158.8 L480.5 157.1 L483.1 155.3 L485.7 153.5 L488.4 151.9 L491.1 150.5 L494.0 149.5 L496.9 148.8 L499.9 148.6 L503.0 148.6 L506.1 148.9 L509.2 149.4 L512.3 149.9 L515.4 150.3 L518.5 150.5 L521.5 150.5" fill="none" stroke="#d8bc9c" stroke-width="0.64" stroke-linecap="round" opacity="0.73"/>
<path d="M426.7 150.7 L429.3 149.3 L432.0 148.0 L434.7 146.7 L437.4 145.4 L440.2 144.2 L442.9 143.0 L445.7 141.8 L448.5 140.6 L451.2 139.5 L454.0 138.5 L456.9 137.4 L459.7 136.4 L462.5 135.3 L465.2 134.1 L468.0 132.9 L470.7 131.7 L473.5 130.5 L476.3 129.3 L479.2 128.3 L482.0 127.5 L484.9 126.7 L487.9 126.2 L490.9 125.7 L493.9 125.4 L496.9 125.2 L499.9 125.0 L502.9 124.8 L505.9 124.5 L508.9 124.2 L511.8 123.8 L514.8 123.3 L517.8 122.7 L520.7 122.1 L523.7 121.5 L526.7 121.0 L529.6 120.5" fill="none" stroke="#2a180c" stroke-width="1.29" stroke-linecap="round" opacity="0.75"/>
<path d="M571.2 188.0 L574.2 188.4 L577.2 188.9 L580.1 189.5 L583.0 190.1 L586.0 190.8 L588.9 191.5 L591.8 192.3 L594.7 193.1 L597.5 194.0 L600.4 194.9 L603.2 195.9 L606.3 196.2 L609.5 196.2 L612.7 196.1 L615.9 196.1 L619.0 196.7 L621.7 197.9 L624.1 199.8 L626.4 202.1 L628.4 204.6 L630.6 207.0 L632.9 209.1 L635.5 210.6 L638.4 211.5 L641.5 212.2 L644.7 212.7 L647.8 213.5 L650.7 214.7 L653.1 216.5 L655.1 218.8 L656.8 221.5 L658.3 224.4 L659.8 227.2 L661.7 229.7" fill="none" stroke="#4a301c" stroke-width="1.01" stroke-linecap="round" opacity="0.79"/>
<path d="M632.9 297.3 L634.7 299.7 L636.4 302.1 L638.0 304.7 L639.6 307.2 L641.0 309.8 L642.4 312.5 L644.7 314.7 L647.6 316.7 L650.5 318.7 L652.7 321.1 L653.9 323.9 L653.9 327.0 L653.0 330.3 L651.8 333.7 L651.0 336.9 L651.1 339.9 L652.2 342.8 L654.1 345.6 L656.3 348.4" fill="none" stroke="#4e3420" stroke-width="2.38" stroke-linecap="round" opacity="0.78"/>
<path d="M495.4 143.0 L498.3 142.4 L501.3 141.9 L504.2 141.4 L507.2 140.9 L510.2 140.5 L513.1 140.1 L516.1 139.7 L519.1 139.4 L522.1 139.1 L525.1 138.9 L528.1 138.6 L531.1 138.4 L534.0 138.1 L537.0 137.9 L540.0 137.8 L543.0 137.6 L546.0 137.6 L549.0 137.6 L552.0 137.7 L555.0 137.9 L558.0 138.1 L561.0 138.4 L564.0 138.8 L567.0 139.1 L569.9 139.5 L572.9 139.9 L575.9 140.4 L578.9 140.8 L581.8 141.2 L584.8 141.7" fill="none" stroke="#7a5a40" stroke-width="1.29" stroke-linecap="round" opacity="0.68"/>
<path d="M575.9 225.8 L578.9 226.5 L581.8 227.1 L584.7 227.9 L587.6 228.7 L590.5 229.5 L593.3 230.5 L596.2 231.5 L599.0 232.5 L601.7 233.7 L604.5 234.8 L607.2 236.1 L609.9 237.4 L613.2 237.5 L616.9 236.9 L620.8 236.1 L624.4 235.7 L627.6 236.3 L630.0 238.1 L631.7 241.0 L632.8 244.6 L633.7 248.4 L634.9 251.9 L636.7 254.5 L639.2 256.1 L642.6 256.8 L646.4 257.0 L650.3 257.3 L653.8 258.1 L656.4 259.8 L657.9 262.4 L658.5 265.9 L658.5 269.8 L658.5 273.6 L658.9 277.1 L660.2 279.8 L662.6 281.8 L665.9 283.3" fill="none" stroke="#3e2818" stroke-width="1.90" stroke-linecap="round" opacity="0.88"/>
<path d="M437.7 175.3 L440.3 173.9 L443.0 172.5 L445.7 171.1 L448.4 169.8 L451.1 168.6 L453.8 167.3 L456.6 166.1 L459.3 165.0 L462.1 163.9 L464.8 162.4 L467.3 160.6 L469.8 158.6 L472.2 156.6 L474.7 154.6 L477.2 152.7 L479.9 151.1 L482.7 149.9 L485.6 149.1 L488.6 148.7 L491.7 148.7 L494.8 149.0 L498.0 149.4 L501.1 149.9 L504.3 150.2 L507.3 150.4 L510.4 150.3 L513.3 149.8" fill="none" stroke="#d8bc9c" stroke-width="1.17" stroke-linecap="round" opacity="0.77"/>
<path d="M619.6 320.3 L621.2 322.8 L622.8 325.4 L624.2 328.0 L625.6 330.6 L627.0 333.3 L628.2 336.1 L629.3 338.9 L630.3 341.7 L631.1 344.6 L631.8 347.5 L632.4 350.4 L631.9 353.6 L630.7 356.8 L629.1 359.9 L627.9 363.0 L627.5 365.9 L628.0 369.0 L629.1 372.1 L630.4 375.4 L631.3 378.6 L631.3 381.8 L630.2 384.5 L628.0 386.9 L625.2 389.0 L622.4 391.0 L620.0 393.2 L618.4 395.7 L617.5 398.7 L617.1 402.1 L616.7 405.6 L615.8 408.8 L614.2 411.3 L611.6 413.1 L608.5 414.0" fill="none" stroke="#2e1c10" stroke-width="1.62" stroke-linecap="round" opacity="0.76"/>
<path d="M479.7 167.0 L482.6 166.1 L485.4 165.2 L488.3 164.4 L491.2 163.7 L494.1 162.9 L497.1 162.2 L500.0 161.6 L503.0 161.2 L506.0 161.0 L509.0 161.0 L512.1 161.1 L515.2 161.2 L518.2 161.4 L521.2 161.4 L524.3 161.2 L527.2 160.9 L530.2 160.4 L533.2 159.8 L536.1 159.1 L539.1 158.3 L542.1 157.6" fill="none" stroke="#f0e4d4" stroke-width="0.73" stroke-linecap="round" opacity="0.87"/>
<path d="M601.1 262.0 L603.7 263.4 L606.4 264.8 L608.9 266.3 L611.5 267.9 L614.0 269.6 L616.4 271.3 L618.8 273.1 L621.2 275.0 L623.5 276.9 L625.7 278.9 L627.8 281.1 L629.8 283.3 L631.7 285.7 L633.6 288.0 L635.5 290.3 L637.5 292.6 L639.5 294.8 L641.6 297.0 L643.5 299.3 L645.3 301.7 L646.9 304.3 L648.2 307.0 L649.3 309.8 L650.3 312.6 L651.3 315.5 L652.4 318.3 L653.5 321.1 L654.6 323.9 L655.8 326.6 L656.8 329.5" fill="none" stroke="#2e1c10" stroke-width="2.06" stroke-linecap="round" opacity="0.77"/>
<path d="M414.2 159.3 L416.8 157.8 L419.4 156.3 L422.0 154.8 L424.7 153.4 L427.3 152.0 L430.0 150.6 L432.7 149.3 L435.4 148.0 L438.1 146.7 L440.8 145.4 L443.5 144.2 L446.3 143.0 L449.0 141.8 L451.8 140.7 L454.6 139.6 L457.4 138.5 L460.2 137.5 L463.1 136.5 L465.9 135.5 L468.7 134.6 L471.6 133.7 L474.5 132.8 L477.3 131.9 L480.2 131.1" fill="none" stroke="#b08c68" stroke-width="0.69" stroke-linecap="round" opacity="0.82"/>
<path d="M552.0 159.1 L555.0 159.2 L558.0 159.4 L561.0 159.7 L563.9 160.0 L566.9 160.3 L569.9 160.7 L572.9 161.1 L575.8 161.6 L578.8 162.1 L581.7 162.9 L584.6 163.9 L587.4 165.2 L590.2 166.4 L593.0 167.6 L595.8 168.5 L598.8 169.2 L601.8 169.6 L604.8 169.9 L607.9 170.2 L610.9 170.6 L613.8 171.2 L616.7 172.2 L619.4 173.4 L622.0 175.0 L624.5 176.8 L627.0 178.6 L629.5 180.3" fill="none" stroke="#2a180c" stroke-width="1.15" stroke-linecap="round" opacity="0.63"/>
<path d="M606.2 267.9 L608.8 269.5 L611.3 271.1 L613.8 272.8 L616.2 274.6 L618.6 276.4 L620.9 278.3 L623.2 280.3 L625.4 282.3 L627.5 284.4 L629.6 286.6 L631.6 288.8 L633.6 291.1 L635.4 293.5 L636.9 296.1 L638.4 298.7 L639.9 301.4 L641.5 303.9 L643.2 306.4 L645.0 308.8 L646.8 311.3 L648.4 313.8 L649.8 316.5 L650.8 319.3 L651.6 322.2 L652.1 325.2 L652.6 328.2 L653.1 331.1 L653.7 334.1 L654.5 337.0 L655.3 339.9 L656.1 342.8 L656.7 345.8 L657.1 348.7 L657.1 351.7 L656.8 354.7 L656.4 357.7 L655.9 360.7" fill="none" stroke="#3e2818" stroke-width="1.60" stroke-linecap="round" opacity="0.90"/>
<path d="M626.5 269.6 L628.8 271.6 L631.0 273.6 L633.1 275.7 L635.2 277.8 L637.3 280.0 L639.3 282.3 L641.2 284.6 L644.3 285.9 L648.3 286.6 L652.3 287.4 L655.5 288.8 L657.5 291.1 L657.9 294.4 L657.2 298.2 L656.2 302.2 L655.6 305.9 L656.2 308.9 L658.3 311.2 L661.6 313.1 L665.3 315.0 L668.5 317.1" fill="none" stroke="#4e3420" stroke-width="1.29" stroke-linecap="round" opacity="0.67"/>
<path d="M508.7 195.5 L511.6 194.9 L514.5 194.3 L517.5 193.8 L520.5 193.3 L523.4 192.9 L526.4 192.5 L529.4 192.2 L532.4 191.9 L535.4 191.7 L538.4 191.5 L541.4 191.8 L544.4 192.6 L547.4 193.7 L550.4 194.9 L553.4 196.1 L556.4 197.1 L559.4 197.7 L562.3 198.0 L565.4 197.8 L568.4 197.3 L571.6 196.6 L574.7 195.8 L577.8 195.1 L581.0 194.7 L584.0 194.8 L587.0 195.4 L589.8 196.4 L592.5 197.9 L595.1 199.8 L597.6 201.8" fill="none" stroke="#7a5a40" stroke-width="0.80" stroke-linecap="round" opacity="0.81"/>
<path d="M510.3 198.2 L513.2 197.6 L516.2 197.1 L519.1 196.6 L522.1 196.1 L525.1 195.7 L528.1 195.3 L531.0 195.0 L534.0 194.8 L537.0 194.6 L540.0 194.5 L543.0 194.1 L546.0 193.6 L549.0 193.0 L552.0 192.5 L555.0 192.0 L558.0 191.8 L561.0 191.7 L564.0 191.9 L567.0 192.4 L569.9 193.2 L572.8 194.1 L575.7 195.1 L578.6 196.1 L581.4 197.1 L584.3 197.9 L587.3 198.6 L590.2 199.1 L593.2 199.5 L596.3 199.8 L599.3 200.1" fill="none" stroke="#2a180c" stroke-width="1.06" stroke-linecap="round" opacity="0.81"/>
<path d="M415.6 167.5 L418.2 165.9 L420.7 164.4 L423.3 162.9 L425.9 161.4 L428.6 160.0 L431.2 158.5 L433.9 157.2 L436.6 155.8 L439.3 154.5 L442.0 153.3 L444.7 152.0 L447.3 150.5 L449.9 148.8 L452.3 146.9 L454.8 145.0 L457.3 143.1 L459.8 141.4 L462.5 139.8 L465.2 138.6 L468.0 137.6 L471.0 137.0 L474.0 136.6 L477.1 136.5 L480.2 136.5 L483.3 136.5 L486.4 136.5 L489.5 136.3 L492.5 135.9 L495.4 135.3 L498.3 134.4 L501.1 133.3 L503.9 132.0 L506.8 130.7" fill="none" stroke="#7a5a40" stroke-width="0.85" stroke-linecap="round" opacity="0.93"/>
<path d="M620.1 273.7 L622.5 275.6 L624.7 277.6 L626.9 279.6 L629.1 281.7 L631.2 283.9 L633.2 286.1 L635.2 288.4 L637.0 290.7 L638.9 293.1 L641.2 295.1 L643.8 296.9 L646.3 298.8 L648.5 301.0 L650.2 303.5 L651.2 306.3 L651.7 309.5 L652.0 312.6 L652.4 315.7 L653.2 318.6 L654.5 321.4 L656.2 324.0 L658.1 326.5 L659.7 329.2 L660.8 332.1 L661.2 335.0 L661.0 338.1 L660.3 341.2 L659.6 344.3" fill="none" stroke="#2a180c" stroke-width="1.35" stroke-linecap="round" opacity="0.82"/>
<path d="M590.2 260.1 L593.0 261.2 L595.8 262.4 L598.5 263.6 L601.2 264.9 L603.9 266.3 L606.5 267.8 L609.0 269.4 L611.6 271.0 L614.0 272.7 L616.3 274.6 L618.5 276.8 L620.5 279.1 L622.5 281.4 L624.6 283.5 L626.9 285.5 L629.3 287.3 L631.7 289.1 L634.2 291.0 L636.4 293.0 L638.4 295.3 L640.1 297.7 L641.5 300.4 L642.6 303.3 L643.7 306.1 L644.9 308.9 L646.2 311.6 L647.8 314.2" fill="none" stroke="#4a301c" stroke-width="1.78" stroke-linecap="round" opacity="0.79"/>
<path d="M421.9 169.6 L424.5 168.1 L427.1 166.6 L429.7 165.2 L432.3 163.7 L435.0 162.3 L437.7 161.0 L440.4 159.6 L443.1 158.4 L445.9 157.3 L448.9 156.6 L452.0 156.1 L455.1 155.8 L458.2 155.5 L461.3 155.1 L464.3 154.6 L467.2 153.8 L470.0 152.8 L472.8 151.5 L475.4 150.0 L478.0 148.3 L480.7 146.6 L483.3 144.9 L486.0 143.4 L488.7 142.1 L491.6 141.1" fill="none" stroke="#d8bc9c" stroke-width="1.00" stroke-linecap="round" opacity="0.78"/>
<path d="M472.5 182.5 L475.3 181.5 L478.2 180.4 L481.0 179.4 L483.8 178.5 L486.7 177.6 L489.6 176.7 L492.5 175.9 L495.4 175.2 L498.3 174.4 L501.2 173.8 L504.1 173.1 L507.0 172.2 L509.8 170.9 L512.6 169.5 L515.4 168.1 L518.2 166.7 L521.1 165.4 L524.0 164.4 L526.9 163.8 L529.9 163.5 L532.9 163.6 L536.0 164.1 L539.0 164.8 L542.0 165.7 L545.0 166.6 L548.0 167.5 L551.0 168.2 L554.0 168.6 L557.0 168.7 L560.0 168.5 L563.1 168.1 L566.1 167.5 L569.2 166.8 L572.3 166.2" fill="none" stroke="#2a180c" stroke-width="1.28" stroke-linecap="round" opacity="0.67"/>
<path d="M536.9 181.6 L539.9 181.5 L542.9 181.5 L545.9 181.5 L548.9 181.5 L551.9 181.6 L554.9 181.7 L557.9 181.9 L560.9 182.1 L563.8 182.4 L566.8 182.8 L569.8 183.1 L572.8 183.7 L575.7 184.4 L578.6 185.2 L581.5 186.1 L584.4 186.9 L587.3 187.7 L590.2 188.3 L593.1 188.9 L596.1 189.4 L599.1 189.9 L602.1 190.5 L605.0 191.2 L607.9 192.1 L610.7 193.1 L613.4 194.4 L616.1 195.7 L618.7 197.2 L621.3 198.8 L623.9 200.2 L626.6 201.7 L629.3 203.0 L632.0 204.2" fill="none" stroke="#f0e4d4" stroke-width="1.03" stroke-linecap="round" opacity="0.79"/>
<path d="M568.6 197.9 L571.6 198.4 L574.6 198.8 L577.5 199.4 L580.4 200.0 L583.4 200.6 L586.3 201.3 L589.2 202.1 L592.1 202.9 L595.0 203.5 L598.0 204.1 L600.9 204.7 L603.9 205.4 L606.7 206.3 L609.6 207.3 L612.3 208.5 L615.0 209.9 L617.6 211.5 L620.2 213.0 L622.7 214.5 L625.4 216.0 L628.0 217.4 L630.8 218.7 L633.5 219.9 L636.2 221.3" fill="none" stroke="#7a5a40" stroke-width="0.73" stroke-linecap="round" opacity="0.93"/>
<path d="M470.3 152.8 L473.2 151.8 L476.0 150.9 L478.9 150.1 L481.8 149.3 L484.7 148.5 L487.6 147.8 L490.5 147.2 L493.5 146.6 L496.5 146.2 L499.5 145.8 L502.4 145.4 L505.4 145.0 L508.4 144.5 L511.3 144.1 L514.3 143.6" fill="none" stroke="#7a5a40" stroke-width="1.15" stroke-linecap="round" opacity="0.75"/>
<path d="M555.5 282.3 L558.5 282.4 L561.5 282.6 L564.5 282.9 L567.5 283.3 L570.4 283.8 L573.3 284.5 L576.2 285.2 L579.1 286.1 L582.0 287.0 L584.8 288.1 L587.5 289.2 L590.2 290.5 L592.9 292.0 L595.4 293.6 L598.0 295.1 L600.5 296.8 L603.1 298.4 L605.6 300.0 L608.1 301.7 L610.5 303.4 L612.9 305.3 L615.1 307.4 L617.1 309.5 L619.0 311.8 L620.8 314.3 L622.5 316.8 L624.0 319.4 L625.6 321.9 L627.1 324.5 L628.6 327.1" fill="none" stroke="#4a301c" stroke-width="1.78" stroke-linecap="round" opacity="0.63"/>
<path d="M485.4 176.1 L488.3 175.3 L491.2 174.4 L494.1 173.7 L497.0 172.9 L499.9 172.2 L502.8 171.6 L505.8 171.0 L508.7 170.4 L511.7 169.9 L514.6 169.3 L517.5 168.6 L520.5 167.9 L523.4 167.2 L526.4 166.5 L529.3 165.9 L532.3 165.5 L535.3 165.2 L538.3 165.0 L541.3 165.0 L544.3 165.2 L547.3 165.5 L550.3 165.8 L553.3 166.3 L556.2 166.7 L559.2 167.1 L562.2 167.4 L565.2 167.6" fill="none" stroke="#2a180c" stroke-width="2.24" stroke-linecap="round" opacity="0.66"/>
<path d="M549.6 168.3 L552.6 168.4 L555.6 168.5 L558.6 168.7 L561.6 169.0 L564.6 169.3 L567.5 169.6 L570.5 170.0 L573.5 170.4 L576.4 170.9 L579.2 172.3 L581.9 174.5 L584.5 177.1 L587.0 179.7 L589.6 181.8 L592.3 183.2 L595.3 183.7 L598.5 183.4 L601.9 182.5 L605.4 181.4 L608.8 180.5 L612.1 180.3 L615.1 180.9 L617.7 182.5 L619.9 185.0 L621.9 187.9 L623.8 191.1 L625.8 193.9" fill="none" stroke="#2a180c" stroke-width="2.20" stroke-linecap="round" opacity="0.60"/>
<path d="M485.4 174.3 L488.3 173.4 L491.2 172.6 L494.1 171.9 L497.0 171.1 L499.9 170.4 L502.8 169.8 L505.8 169.2 L508.7 168.6 L511.6 167.9 L514.6 167.3 L517.5 166.7 L520.5 166.1 L523.4 165.7 L526.4 165.2 L529.4 164.9 L532.4 164.7 L535.4 164.5 L538.4 164.5 L541.4 164.5 L544.4 164.6 L547.4 164.7 L550.4 164.9" fill="none" stroke="#b8946e" stroke-width="1.29" stroke-linecap="round" opacity="0.89"/>
<path d="M459.3 189.2 L462.0 187.9 L464.8 186.7 L467.5 185.5 L470.3 184.3 L473.1 183.2 L475.9 182.1 L478.7 181.1 L481.5 180.1 L484.4 179.2 L487.3 178.3 L490.1 177.4 L493.0 176.6 L495.9 175.9 L498.9 175.3 L501.8 174.8 L504.9 174.5 L507.9 174.3 L510.9 174.1 L513.9 174.0 L516.9 173.7 L519.9 173.4 L522.9 173.0 L525.8 172.5 L528.8 171.9 L531.8 171.3 L534.7 170.6 L537.7 170.0 L540.7 169.5 L543.7 169.2 L546.7 169.0 L549.7 169.0 L552.7 169.2 L555.6 169.6 L558.6 170.2 L561.6 170.8 L564.5 171.5 L567.5 172.2 L570.4 172.8 L573.4 173.3" fill="none" stroke="#2a180c" stroke-width="1.83" stroke-linecap="round" opacity="0.92"/>
<path d="M417.9 198.9 L420.4 197.2 L422.8 195.4 L425.3 193.8 L427.8 192.1 L430.3 190.5 L432.9 188.9 L435.4 187.3 L438.1 186.0 L441.0 185.0 L444.0 184.3 L447.1 183.6 L450.2 183.0 L453.2 182.4 L456.2 181.5 L459.0 180.5 L461.7 179.3 L464.3 177.7 L466.9 176.0 L469.3 174.1 L471.8 172.2 L474.3 170.2 L476.8 168.5" fill="none" stroke="#4a301c" stroke-width="1.89" stroke-linecap="round" opacity="0.93"/>
<path d="M512.8 233.4 L515.7 232.7 L518.6 231.9 L521.5 231.3 L524.5 230.7 L527.4 230.2 L530.4 229.7 L533.4 229.3 L536.3 229.0 L539.3 228.7 L542.3 228.5 L545.3 228.4 L548.3 228.3 L551.3 228.3 L554.3 228.2 L557.3 228.0 L560.3 227.8 L563.4 227.6 L566.4 227.6 L569.4 227.7 L572.4 228.0 L575.3 228.6 L578.2 229.3 L581.1 230.2 L584.0 231.2 L586.8 232.3 L589.6 233.4 L592.4 234.4 L595.3 235.4 L598.1 236.2 L601.0 237.1 L603.9 237.9 L606.8 238.7 L609.7 239.7 L612.5 240.8 L615.2 242.1 L617.8 243.6 L620.3 245.2 L622.7 247.0 L625.1 249.0" fill="none" stroke="#4a301c" stroke-width="1.20" stroke-linecap="round" opacity="0.92"/>
<path d="M481.6 193.7 L484.4 192.7 L487.2 191.7 L490.1 190.8 L493.0 189.9 L495.8 189.1 L498.7 188.3 L501.6 187.2 L504.4 186.0 L507.1 184.7 L509.9 183.4 L512.7 182.1 L515.5 180.9 L518.4 179.9 L521.3 179.2 L524.3 178.8 L527.3 178.7 L530.4 178.9 L533.4 179.3" fill="none" stroke="#b8946e" stroke-width="0.64" stroke-linecap="round" opacity="0.89"/>
<path d="M373.4 229.7 L375.4 227.4 L377.4 225.1 L379.4 222.9 L381.4 220.7 L383.5 218.5 L385.5 216.4 L387.7 214.3 L389.8 212.2 L392.0 210.1 L394.4 208.3 L397.1 206.8 L400.0 205.5 L403.0 204.4 L406.0 203.2 L408.9 202.1 L411.7 200.7 L414.3 199.2 L416.6 197.3 L418.8 195.2 L420.8 192.9 L422.7 190.3 L424.5 187.7 L426.4 185.2 L428.4 182.7 L430.6 180.5 L433.0 178.7 L435.6 177.2" fill="none" stroke="#4a301c" stroke-width="2.20" stroke-linecap="round" opacity="0.81"/>
<path d="M620.4 292.9 L622.5 295.1 L624.6 297.3 L626.5 299.6 L628.4 301.9 L630.2 304.3 L631.9 306.8 L634.0 309.0 L636.2 311.1 L638.4 313.3 L640.3 315.7 L641.8 318.3 L642.8 321.1 L643.4 324.2 L643.7 327.2 L644.0 330.3 L644.5 333.3 L645.2 336.2 L646.3 339.0 L647.5 341.8" fill="none" stroke="#3e2818" stroke-width="1.68" stroke-linecap="round" opacity="0.67"/>
<path d="M388.8 201.7 L391.1 199.7 L393.3 197.8 L395.6 195.8 L397.9 193.9 L400.3 192.0 L402.6 190.2 L405.0 188.3 L407.4 186.5 L409.8 184.7 L412.2 183.0 L414.7 181.3 L417.2 179.6 L419.7 177.9 L422.2 176.3 L424.7 174.7 L427.3 173.1 L429.9 171.6 L432.5 170.1 L435.1 168.6" fill="none" stroke="#7a5a40" stroke-width="1.08" stroke-linecap="round" opacity="0.81"/>
<path d="M542.7 152.3 L545.7 152.3 L548.7 152.4 L551.7 152.5 L554.7 152.6 L557.7 152.8 L560.7 152.4 L563.8 151.5 L567.0 150.4 L570.1 149.2 L573.2 148.3 L576.3 147.9 L579.3 148.2 L582.2 149.1 L585.0 150.6 L587.6 152.5" fill="none" stroke="#4a301c" stroke-width="1.27" stroke-linecap="round" opacity="0.69"/>
<path d="M574.4 240.8 L577.4 241.4 L580.3 242.1 L583.2 242.8 L586.1 243.6 L588.9 244.5 L591.8 245.5 L594.5 246.9 L597.1 248.6 L599.5 250.5 L602.0 252.4 L604.5 254.1 L607.2 255.5 L609.9 256.6 L612.9 257.5 L615.9 258.3 L618.9 259.2 L621.7 260.4 L624.3 261.9" fill="none" stroke="#f0e4d4" stroke-width="0.91" stroke-linecap="round" opacity="0.79"/>
<path d="M564.7 185.4 L567.7 185.7 L570.7 186.1 L573.6 186.6 L576.6 187.1 L579.5 187.6 L582.5 188.2 L585.4 188.9 L588.3 189.6 L591.2 190.4 L594.1 191.2 L597.0 192.0 L600.1 192.0 L603.5 191.3 L606.9 190.5 L610.3 189.8 L613.5 189.9 L616.4 190.9 L618.8 192.8 L620.9 195.4 L622.9 198.4 L624.8 201.3 L627.0 203.7 L629.5 205.3 L632.5 206.2 L635.8 206.4 L639.3 206.3 L642.9 206.3 L646.1 206.8 L648.8 208.1 L651.0 210.2 L652.7 213.0 L654.0 216.3 L655.2 219.6 L656.7 222.6" fill="none" stroke="#2e1c10" stroke-width="1.87" stroke-linecap="round" opacity="0.69"/>
<path d="M617.6 298.5 L619.7 300.7 L621.7 302.9 L623.6 305.2 L625.4 307.6 L627.2 310.0 L628.9 312.5 L630.5 315.1 L632.0 317.6 L633.4 320.3 L634.7 323.0 L636.8 325.3 L639.2 327.5 L641.6 329.8 L643.5 332.4 L644.5 335.2 L644.6 338.3 L643.9 341.4 L643.0 344.6 L642.4 347.8 L642.2 350.9 L642.8 353.8 L644.1 356.7 L645.6 359.7 L646.9 362.7 L647.5 365.8 L647.2 368.8 L646.1 371.6 L644.2 374.4 L642.2 377.0 L640.6 379.7 L639.5 382.5" fill="none" stroke="#2a180c" stroke-width="1.37" stroke-linecap="round" opacity="0.74"/>
<path d="M569.9 207.8 L572.8 208.2 L575.8 208.7 L578.7 209.3 L581.6 209.9 L584.6 210.6 L587.5 211.4 L590.4 212.2 L593.2 213.1 L596.4 213.0 L599.8 212.2 L603.3 211.3 L606.7 210.6 L610.0 210.6 L612.8 211.5 L615.3 213.4 L617.4 216.1 L619.2 219.2 L621.0 222.3 L623.0 224.9 L625.4 226.8 L628.2 227.9 L631.5 228.2 L635.1 228.2 L638.7 228.2" fill="none" stroke="#b08c68" stroke-width="0.75" stroke-linecap="round" opacity="0.72"/>
<path d="M566.3 198.8 L569.3 199.1 L572.3 199.6 L575.2 200.1 L578.2 200.6 L581.1 201.2 L584.0 201.9 L587.0 202.6 L589.9 203.4 L592.7 204.2 L595.6 205.1 L598.5 206.0 L601.4 206.8 L604.2 207.7 L607.1 208.5 L610.0 209.4 L612.8 210.5 L615.6 211.6 L618.3 213.0 L620.9 214.4 L623.5 216.0 L626.0 217.5 L628.6 219.1 L631.2 220.6 L633.8 222.1 L636.4 223.6 L639.0 225.0 L641.6 226.6 L644.1 228.2 L646.6 230.0 L648.9 231.9 L651.1 233.9 L653.3 235.9 L655.4 238.1 L657.6 240.2" fill="none" stroke="#4a301c" stroke-width="1.02" stroke-linecap="round" opacity="0.71"/>
<path d="M562.1 235.5 L565.1 235.8 L568.1 236.2 L571.1 236.7 L574.0 237.2 L576.9 237.8 L579.9 238.4 L582.8 239.2 L585.7 240.0 L588.5 240.9 L591.7 240.9 L595.0 240.3 L598.5 239.5 L601.9 238.9 L605.2 238.9 L608.1 239.8 L610.5 241.7 L612.6 244.2 L614.4 247.3 L616.1 250.4 L617.9 253.2 L620.1 255.4 L622.7 256.8 L625.8 257.6 L629.3 258.0 L632.8 258.3 L636.2 258.9 L639.1 260.1 L641.4 262.0" fill="none" stroke="#2a180c" stroke-width="2.27" stroke-linecap="round" opacity="0.74"/>
<path d="M573.9 253.8 L576.8 254.5 L579.7 255.2 L582.6 256.0 L585.5 256.9 L588.3 257.8 L591.2 258.9 L593.9 260.0 L596.7 261.3 L599.3 262.7 L602.0 264.1 L604.6 265.6 L607.2 267.0 L609.9 268.4 L612.5 269.9 L615.1 271.3 L617.7 272.8 L620.2 274.5 L622.7 276.3" fill="none" stroke="#2e1c10" stroke-width="2.09" stroke-linecap="round" opacity="0.87"/>
<path d="M509.2 177.1 L512.2 176.6 L515.1 176.1 L518.1 175.7 L521.1 175.3 L524.1 174.9 L527.0 174.3 L529.9 173.5 L532.9 172.5 L535.8 171.6 L538.8 170.6 L541.7 169.9 L544.7 169.3 L547.7 169.1 L550.7 169.2 L553.7 169.6 L556.7 170.3" fill="none" stroke="#4a301c" stroke-width="1.83" stroke-linecap="round" opacity="0.76"/>
<path d="M522.0 239.0 L524.9 238.3 L527.9 237.8 L530.8 237.3 L533.8 236.8 L536.8 236.5 L539.8 236.2 L542.8 236.0 L545.8 235.8 L548.8 235.8 L551.8 235.8 L554.8 235.8 L557.8 236.0 L560.8 236.2 L563.7 236.5 L566.7 236.8 L569.7 237.3 L572.6 237.8 L575.6 238.4 L578.5 239.0 L581.5 239.6 L584.4 240.2 L587.3 240.9 L590.2 241.6 L593.1 242.4 L596.0 243.4 L598.8 244.4 L601.6 245.5 L604.3 246.8 L607.0 248.1 L609.6 249.5 L612.2 251.0 L614.8 252.5 L617.4 254.1 L619.9 255.7 L622.5 257.3 L625.0 258.9" fill="none" stroke="#d8bc9c" stroke-width="1.29" stroke-linecap="round" opacity="0.89"/>
<path d="M516.8 193.8 L519.7 193.3 L522.7 192.8 L525.7 192.5 L528.6 192.1 L531.6 191.9 L534.6 191.7 L537.7 191.8 L540.7 192.0 L543.7 192.4 L546.7 192.7 L549.7 193.0 L552.7 193.3 L555.7 193.5 L558.7 193.5 L561.7 193.4 L564.7 193.3" fill="none" stroke="#2a180c" stroke-width="1.86" stroke-linecap="round" opacity="0.79"/>
<path d="M529.1 242.8 L532.1 242.3 L535.1 241.9 L538.0 241.5 L541.0 241.2 L544.0 241.0 L547.0 240.9 L550.0 240.5 L553.0 240.0 L556.0 239.4 L559.0 238.9 L562.0 238.5 L565.1 238.3 L568.1 238.4 L571.0 238.9 L573.9 239.6 L576.8 240.7 L579.6 241.9 L582.4 243.2 L585.2 244.4" fill="none" stroke="#7a5a40" stroke-width="1.22" stroke-linecap="round" opacity="0.71"/>
<path d="M508.0 226.9 L510.8 226.0 L513.7 225.3 L516.7 224.6 L519.6 223.9 L522.5 223.3 L525.4 222.5 L528.3 221.7 L531.2 220.7 L534.1 219.8 L537.0 218.9 L540.0 218.2 L543.0 217.6 L545.9 217.3 L548.9 217.3 L551.9 217.5" fill="none" stroke="#4a301c" stroke-width="2.33" stroke-linecap="round" opacity="0.65"/>
<path d="M584.1 196.4 L587.0 197.1 L589.9 197.9 L592.8 198.7 L595.7 199.6 L598.5 200.5 L601.1 202.2 L603.4 204.7 L605.6 207.5 L607.8 210.1 L610.3 212.2 L613.0 213.4 L616.1 213.9 L619.4 213.8 L622.9 213.4 L626.4 213.3" fill="none" stroke="#4e3420" stroke-width="1.94" stroke-linecap="round" opacity="0.89"/>
<path d="M494.6 154.5 L497.5 153.9 L500.5 153.3 L503.4 152.7 L506.4 152.2 L509.3 151.7 L512.3 151.3 L515.3 150.9 L518.2 150.5 L521.2 150.2 L524.2 149.8 L527.2 149.6 L530.2 149.3 L533.2 149.1 L536.2 149.0 L539.2 148.8 L542.2 148.8 L545.2 148.8 L548.2 148.8 L551.2 148.9 L554.2 149.0 L557.2 149.1 L560.2 149.3 L563.1 149.6 L566.1 149.9" fill="none" stroke="#b08c68" stroke-width="0.80" stroke-linecap="round" opacity="0.83"/>
<path d="M404.6 203.5 L407.0 201.6 L409.3 199.7 L411.7 197.8 L414.1 196.0 L416.5 194.3 L418.9 192.5 L421.5 190.9 L424.0 189.3 L426.6 187.8 L429.2 186.3 L431.9 184.9 L434.5 183.4 L437.1 181.9 L439.7 180.4 L442.3 178.9" fill="none" stroke="#4a301c" stroke-width="1.59" stroke-linecap="round" opacity="0.93"/>
<path d="M543.7 275.4 L546.7 275.1 L549.6 274.9 L552.6 274.8 L555.6 274.8 L558.6 274.9 L561.6 275.1 L564.6 275.4 L567.6 275.8 L570.5 276.3 L573.5 276.9 L576.4 277.7 L579.3 278.5 L582.4 278.7 L585.5 278.5 L588.8 278.2 L592.1 278.1 L595.2 278.4 L598.1 279.4 L600.7 281.0 L602.9 283.2 L604.8 285.8 L606.6 288.6 L608.4 291.3 L610.3 293.7 L612.5 295.7 L615.1 297.3 L618.0 298.6 L621.1 299.7 L624.1 301.0 L626.9 302.5 L629.2 304.5 L631.0 306.9 L632.2 309.8 L632.9 312.9 L633.3 316.2 L633.7 319.4" fill="none" stroke="#2a180c" stroke-width="1.77" stroke-linecap="round" opacity="0.81"/>
<path d="M636.6 295.7 L638.3 298.1 L640.0 300.6 L641.6 303.1 L643.1 305.7 L644.5 308.4 L644.5 311.8 L643.5 315.7 L642.3 319.5 L641.8 323.0 L642.6 325.9 L645.0 328.3 L648.3 330.4 L651.7 332.7 L654.3 335.2 L655.3 338.1" fill="none" stroke="#4e3420" stroke-width="1.88" stroke-linecap="round" opacity="0.90"/>
<path d="M507.7 197.8 L510.6 197.1 L513.6 196.5 L516.5 196.0 L519.5 195.5 L522.4 195.0 L525.4 194.6 L528.4 194.3 L531.4 194.0 L534.3 193.7 L537.3 193.4 L540.3 193.1 L543.3 192.9 L546.3 192.7 L549.3 192.6 L552.3 192.6 L555.3 192.7 L558.3 192.8 L561.3 193.0 L564.3 193.4 L567.3 193.8 L570.2 194.2 L573.2 194.7 L576.1 195.2 L579.1 195.7 L582.0 196.3" fill="none" stroke="#2a180c" stroke-width="1.81" stroke-linecap="round" opacity="0.65"/>
<path d="M434.4 163.5 L437.0 162.1 L439.7 160.8 L442.4 159.5 L445.1 158.2 L447.9 157.0 L450.6 155.8 L453.4 154.6 L456.2 153.5 L459.0 152.4 L461.8 151.4 L464.6 150.4 L467.4 149.4 L470.3 148.4 L473.1 147.5 L476.0 146.5" fill="none" stroke="#7a5a40" stroke-width="1.23" stroke-linecap="round" opacity="0.81"/>
<path d="M525.4 203.1 L528.4 202.7 L531.4 202.4 L534.4 202.1 L537.4 201.9 L540.4 201.8 L543.4 201.7 L546.4 201.6 L549.4 201.7 L552.4 201.7 L555.4 201.9 L558.4 202.0 L561.4 202.3 L564.4 202.3 L567.4 202.1 L570.4 201.9 L573.5 201.8 L576.5 201.8 L579.5 202.1 L582.5 202.6 L585.4 203.4 L588.2 204.5 L591.0 205.7 L593.7 207.1 L596.5 208.4 L599.2 209.6 L602.0 210.7 L604.9 211.5 L607.8 212.3 L610.8 212.9 L613.8 213.6 L616.7 214.3 L619.6 215.3 L622.4 216.5 L625.0 218.0 L627.5 219.7 L629.8 221.6" fill="none" stroke="#b08c68" stroke-width="0.77" stroke-linecap="round" opacity="0.93"/>
<path d="M535.3 171.9 L538.3 171.7 L541.3 171.7 L544.3 171.7 L547.3 171.7 L550.3 171.7 L553.3 171.9 L556.3 172.0 L559.3 172.2 L562.3 172.5 L565.3 172.8 L568.3 173.2 L571.3 172.9 L574.4 172.3 L577.6 171.4 L580.8 170.6 L583.9 170.1 L587.0 170.2 L589.9 170.8 L592.7 172.1 L595.3 173.9 L597.9 176.0 L600.4 178.0 L603.0 179.9 L605.6 181.4 L608.5 182.3 L611.5 182.7 L614.7 182.7 L618.0 182.6 L621.3 182.5 L624.4 182.8 L627.4 183.5 L630.1 184.8 L632.5 186.7" fill="none" stroke="#4a301c" stroke-width="1.53" stroke-linecap="round" opacity="0.72"/>
<path d="M456.0 177.1 L458.7 175.9 L461.5 174.7 L464.2 173.5 L467.0 172.4 L469.8 171.4 L472.6 170.3 L475.5 169.3 L478.3 168.4 L481.1 167.1 L483.7 165.6 L486.3 163.9 L489.0 162.1 L491.6 160.4 L494.3 158.9 L497.1 157.6 L499.9 156.6 L502.9 156.0 L505.9 155.7 L508.9 155.8 L512.0 156.1 L515.1 156.6 L518.2 157.2 L521.3 157.6 L524.4 157.9" fill="none" stroke="#b08c68" stroke-width="1.10" stroke-linecap="round" opacity="0.75"/>
<path d="M634.4 352.4 L634.7 355.4 L634.8 358.4 L634.8 361.4 L634.7 364.4 L634.4 367.3 L634.0 370.3 L633.5 373.3 L632.8 376.2 L631.8 379.0 L630.6 381.8 L629.1 384.5 L627.7 387.2 L626.4 389.9 L625.3 392.7 L624.3 395.6 L623.3 398.4 L622.1 401.2 L620.5 403.8 L618.6 406.1 L616.4 408.2 L614.0 410.0 L611.5 411.8 L609.1 413.5 L606.7 415.4" fill="none" stroke="#3e2818" stroke-width="1.56" stroke-linecap="round" opacity="0.73"/>
<path d="M559.3 186.4 L562.2 186.6 L565.2 186.9 L568.2 187.3 L571.2 187.7 L574.1 188.2 L577.1 188.7 L580.0 189.3 L583.0 189.9 L585.9 190.5 L588.7 191.9 L591.3 193.9 L593.8 196.2 L596.2 198.5 L598.8 200.3 L601.6 201.5 L604.6 202.1 L607.7 202.1 L611.1 201.8 L614.5 201.4 L617.7 201.5 L620.7 202.1 L623.4 203.4 L625.7 205.5 L627.8 208.1 L629.7 210.9 L631.6 213.6 L633.7 215.9" fill="none" stroke="#2e1c10" stroke-width="1.75" stroke-linecap="round" opacity="0.83"/>
<path d="M443.2 183.3 L445.8 181.9 L448.5 180.5 L451.2 179.2 L453.9 177.9 L456.6 176.6 L459.4 175.4 L462.1 174.2 L464.8 172.7 L467.3 171.0 L469.8 169.2 L472.3 167.3 L474.8 165.4 L477.4 163.6 L480.0 162.1 L482.8 160.9 L485.7 160.1 L488.6 159.6 L491.7 159.4 L494.8 159.4 L497.9 159.6 L501.0 159.8" fill="none" stroke="#2a180c" stroke-width="2.06" stroke-linecap="round" opacity="0.66"/>
<path d="M482.9 215.1 L485.7 213.9 L488.5 212.8 L491.3 211.8 L494.1 210.8 L497.0 209.8 L499.8 208.9 L502.7 208.1 L505.6 207.3 L508.5 206.5 L511.4 205.9 L514.4 205.2 L517.3 204.6 L520.2 204.0 L523.2 203.5 L526.2 203.1 L529.1 202.7 L532.1 202.3 L535.1 202.0 L538.1 201.8 L541.1 201.6 L544.1 201.4 L547.1 201.3 L550.1 201.3 L553.1 201.3 L556.1 201.4 L559.1 201.5 L562.1 201.7 L565.1 201.9 L568.0 202.2 L571.0 202.6 L574.0 203.0 L577.0 203.5 L579.9 204.1 L582.8 204.7" fill="none" stroke="#4a301c" stroke-width="1.52" stroke-linecap="round" opacity="0.61"/>
<path d="M575.4 220.3 L578.4 220.9 L581.3 221.5 L584.2 222.2 L587.1 223.0 L590.0 223.9 L592.8 224.8 L595.7 225.7 L598.5 226.7 L601.3 227.8 L604.1 229.0 L606.8 230.2 L610.0 230.4 L613.5 230.1 L617.1 229.6 L620.5 229.4 L623.6 230.0 L626.2 231.6 L628.2 234.1 L629.7 237.2 L631.1 240.6 L632.6 243.7 L634.5 246.1 L637.0 247.8 L640.1 248.7 L643.6 249.2 L647.2 249.6 L650.5 250.4 L653.3 251.9 L655.2 254.2 L656.4 257.3 L657.0 260.8 L657.5 264.3 L658.2 267.7 L659.6 270.4" fill="none" stroke="#2e1c10" stroke-width="2.00" stroke-linecap="round" opacity="0.76"/>
<path d="M478.7 166.9 L481.6 166.0 L484.5 165.2 L487.4 164.3 L490.3 163.6 L493.2 162.8 L496.1 162.1 L499.0 161.5 L501.9 160.5 L504.7 159.4 L507.5 158.1 L510.3 156.8 L513.1 155.4 L516.0 154.3 L518.9 153.4 L521.9 152.7 L524.8 152.4 L527.9 152.4 L530.9 152.8 L533.9 153.3 L537.0 154.0 L540.0 154.7" fill="none" stroke="#2a180c" stroke-width="1.64" stroke-linecap="round" opacity="0.95"/>
<path d="M418.1 230.3 L420.3 228.3 L422.6 226.3 L424.9 224.4 L427.2 222.5 L429.5 220.6 L431.9 218.8 L434.3 217.0 L436.8 215.2 L439.2 213.5 L441.7 211.8 L444.2 210.2 L446.6 208.4 L449.0 206.6 L451.4 204.8 L453.8 202.9 L456.3 201.1 L458.7 199.4 L461.3 197.8 L463.9 196.3 L466.6 195.0 L469.4 193.8 L472.2 192.8 L475.1 192.0 L478.0 191.2 L480.9 190.4 L483.9 189.7 L486.8 188.9 L489.7 188.1 L492.5 187.1 L495.3 186.1 L498.2 185.1 L501.0 184.0 L503.8 182.9" fill="none" stroke="#4a301c" stroke-width="1.51" stroke-linecap="round" opacity="0.85"/>
<path d="M595.2 263.3 L598.0 264.5 L600.7 265.8 L603.3 267.2 L605.9 268.7 L608.5 270.3 L611.0 271.9 L613.5 273.6 L615.9 275.4 L618.3 277.2 L620.6 279.1 L622.9 281.1 L624.9 283.3 L626.6 285.9 L628.3 288.5 L629.9 291.0 L631.8 293.4 L633.9 295.6 L636.1 297.6 L638.5 299.6 L640.8 301.6 L642.8 303.9 L644.4 306.5 L645.6 309.2 L646.4 312.2 L647.0 315.2 L647.7 318.2 L648.6 321.1 L649.7 323.9 L651.1 326.6 L652.5 329.3 L653.9 332.0 L655.0 334.9 L655.6 337.8 L655.8 340.8" fill="none" stroke="#2a180c" stroke-width="1.63" stroke-linecap="round" opacity="0.84"/>
<path d="M591.3 249.7 L594.1 250.8 L596.9 251.9 L599.7 253.1 L602.4 254.4 L605.1 255.7 L607.7 257.2 L610.0 259.4 L611.8 262.2 L613.5 265.2 L615.2 268.1 L617.3 270.4 L619.8 272.1 L622.7 273.1 L626.1 273.8 L629.5 274.4 L632.7 275.3 L635.3 276.9 L637.3 279.2 L638.6 282.1" fill="none" stroke="#7a5a40" stroke-width="1.04" stroke-linecap="round" opacity="0.94"/>
<path d="M641.7 312.9 L642.9 315.6 L644.1 318.4 L645.2 321.2 L646.2 324.0 L647.0 326.9 L647.8 329.8 L648.4 332.8 L649.0 335.7 L649.4 338.7 L649.8 341.6 L650.2 344.6 L650.5 347.6 L650.8 350.6 L651.1 353.6 L651.3 356.6 L651.3 359.6 L651.2 362.6 L651.0 365.6 L650.6 368.5 L650.1 371.5 L649.6 374.5 L649.0 377.4" fill="none" stroke="#4a301c" stroke-width="1.53" stroke-linecap="round" opacity="0.86"/>
<path d="M558.3 163.8 L561.3 164.0 L564.3 164.3 L567.3 164.7 L570.3 165.1 L573.2 165.5 L576.2 166.1 L579.1 167.0 L581.9 168.0 L584.8 169.0 L587.7 169.9 L590.6 170.7 L593.5 171.4 L596.4 171.9 L599.4 172.3 L602.5 172.7 L605.5 173.2" fill="none" stroke="#4a301c" stroke-width="2.23" stroke-linecap="round" opacity="0.62"/>
<path d="M424.7 152.8 L427.3 151.4 L430.0 150.0 L432.7 148.7 L435.4 147.4 L438.1 146.1 L440.9 144.9 L443.6 143.7 L446.4 142.5 L449.1 141.3 L451.9 140.2 L454.7 139.2 L457.6 138.1 L460.3 137.0 L463.1 135.7 L465.8 134.4 L468.5 133.0 L471.2 131.7 L474.0 130.5 L476.8 129.4 L479.6 128.5 L482.6 127.7 L485.5 127.1 L488.5 126.7 L491.5 126.5 L494.5 126.3 L497.6 126.1 L500.6 126.0 L503.6 125.7 L506.6 125.4 L509.5 125.0 L512.5 124.4 L515.4 123.8 L518.4 123.1 L521.3 122.3 L524.3 121.7 L527.2 121.1" fill="none" stroke="#d8bc9c" stroke-width="1.27" stroke-linecap="round" opacity="0.90"/>
<path d="M540.0 228.1 L543.0 227.9 L546.0 227.8 L549.0 227.7 L552.0 227.8 L555.0 227.8 L558.0 228.0 L561.0 228.2 L564.0 228.5 L567.0 228.9 L569.9 229.3 L572.9 229.8 L575.8 230.3 L578.8 230.8 L581.8 231.4 L584.7 231.9 L587.6 232.6 L590.5 233.3 L593.4 234.2 L596.3 235.2 L599.1 236.2 L601.8 237.4 L604.5 238.6 L607.3 240.0 L609.9 241.3 L612.6 242.6 L615.3 244.0 L617.9 245.4 L620.6 246.8 L623.2 248.3 L625.8 249.9 L628.3 251.5 L630.7 253.3 L633.1 255.1 L635.4 257.0 L637.6 259.0 L639.8 261.1 L641.9 263.2" fill="none" stroke="#2a180c" stroke-width="2.21" stroke-linecap="round" opacity="0.66"/>
<path d="M628.6 286.5 L630.6 288.7 L632.6 291.0 L634.5 293.3 L636.3 295.7 L638.0 298.1 L639.7 300.6 L641.3 303.2 L642.8 305.8 L644.3 308.4 L645.6 311.1 L646.9 313.8 L646.6 317.2 L645.2 321.1 L643.6 324.9 L642.8 328.4 L643.6 331.3 L645.8 333.8 L649.1 336.2 L652.4 338.6 L654.9 341.3 L655.7 344.2 L654.6 347.3 L652.2 350.5 L649.4 353.6 L647.4 356.7 L646.8 359.7 L647.9 362.7 L650.2 365.9 L652.8 369.2 L654.7 372.5 L655.0 375.6 L653.4 378.3 L650.4 380.6 L646.7 382.8" fill="none" stroke="#4e3420" stroke-width="1.84" stroke-linecap="round" opacity="0.64"/>
<path d="M552.7 168.0 L555.7 168.2 L558.7 168.4 L561.7 168.6 L564.7 168.9 L567.7 169.3 L570.6 169.7 L573.6 170.1 L576.6 170.6 L579.5 171.1 L582.5 171.7 L585.4 172.3 L588.3 173.2 L591.1 174.3 L593.9 175.6 L596.7 176.8 L599.5 178.0 L602.3 178.9 L605.2 179.7 L608.2 180.3 L611.2 180.8 L614.2 181.3 L617.1 182.0 L620.0 182.9 L622.8 184.1 L625.4 185.6 L627.9 187.2 L630.4 189.0 L632.8 190.8 L635.3 192.5 L637.9 194.1 L640.6 195.4 L643.4 196.6 L646.2 197.7 L649.1 198.8" fill="none" stroke="#3e2818" stroke-width="2.02" stroke-linecap="round" opacity="0.80"/>
<path d="M535.3 228.8 L538.2 228.5 L541.2 228.3 L544.2 228.1 L547.2 228.0 L550.2 228.0 L553.2 228.1 L556.2 228.4 L559.2 229.0 L562.2 229.8 L565.1 230.7 L568.0 231.5 L571.0 232.3 L573.9 232.9 L576.9 233.2 L579.9 233.5 L582.9 233.6 L586.0 233.7 L589.1 233.8" fill="none" stroke="#7a5a40" stroke-width="0.78" stroke-linecap="round" opacity="0.87"/>
<path d="M588.3 216.6 L591.2 217.4 L594.1 218.3 L596.9 219.3 L599.7 220.3 L602.5 221.3 L605.3 222.5 L608.1 223.7 L610.8 224.9 L613.5 226.2 L616.2 227.5 L618.8 229.0 L621.6 230.1 L624.5 231.1 L627.4 232.1 L630.2 233.2 L632.9 234.7 L635.3 236.5 L637.5 238.5 L639.5 240.8 L641.6 243.1 L643.6 245.3 L645.9 247.3 L648.3 249.1 L650.8 250.8 L653.4 252.4 L655.9 254.1 L658.2 256.1 L660.2 258.3 L662.0 260.8 L663.5 263.4 L664.9 266.2 L666.3 268.8 L667.9 271.4 L669.8 273.7" fill="none" stroke="#4a301c" stroke-width="2.31" stroke-linecap="round" opacity="0.94"/>
<path d="M459.9 194.5 L462.7 193.2 L465.4 191.9 L468.1 190.7 L470.9 189.5 L473.6 188.4 L476.4 187.3 L479.3 186.3 L482.1 185.3 L484.8 184.0 L487.5 182.5 L490.1 180.9 L492.8 179.3 L495.4 177.7 L498.1 176.2 L500.9 175.0 L503.8 174.0 L506.7 173.4 L509.7 173.1 L512.7 173.0 L515.8 173.2 L518.9 173.6 L522.0 173.9 L525.1 174.3 L528.1 174.4 L531.1 174.4" fill="none" stroke="#e6d4bc" stroke-width="1.24" stroke-linecap="round" opacity="0.80"/>
<path d="M551.4 254.0 L554.4 254.1 L557.4 254.2 L560.4 254.4 L563.4 254.6 L566.4 255.0 L569.4 255.4 L572.3 255.9 L575.3 256.5 L578.2 257.2 L581.1 258.0 L584.0 258.8 L586.8 259.7 L589.6 260.7 L592.5 261.7 L595.3 262.6 L598.2 263.6 L601.0 264.7 L603.7 265.9 L606.4 267.3 L609.0 268.8 L611.5 270.5 L613.9 272.2 L616.3 274.1 L618.6 275.9 L621.0 277.8 L623.3 279.7 L625.7 281.6 L628.0 283.5 L630.3 285.5 L632.4 287.5 L634.5 289.7 L636.5 292.0 L638.3 294.3 L640.0 296.8 L641.6 299.4 L643.1 302.0 L644.6 304.6 L646.1 307.2 L647.5 309.8" fill="none" stroke="#4a301c" stroke-width="2.10" stroke-linecap="round" opacity="0.81"/>
<path d="M624.6 341.5 L625.6 344.4 L626.4 347.3 L627.0 350.2 L627.5 353.2 L627.8 356.1 L628.0 359.1 L628.0 362.1 L629.5 365.1 L631.9 368.3 L634.3 371.5 L635.9 374.8 L636.0 377.9 L634.4 380.6 L631.5 382.9 L628.0 384.9 L624.6 386.8 L622.2 389.0 L621.0 391.7 L620.9 395.1 L621.6 399.0 L622.2 403.0 L622.0 406.6" fill="none" stroke="#4a301c" stroke-width="2.34" stroke-linecap="round" opacity="0.80"/>
<path d="M479.7 189.6 L482.5 188.5 L485.4 187.6 L488.2 186.6 L491.1 185.8 L494.0 184.9 L496.9 184.1 L499.8 183.4 L502.6 182.5 L505.5 181.6 L508.4 180.7 L511.2 179.7 L514.1 178.9 L517.0 178.1 L520.0 177.4 L522.9 176.9 L525.9 176.5 L528.9 176.3 L531.9 176.2 L534.9 176.3 L537.9 176.4 L540.9 176.6" fill="none" stroke="#7a5a40" stroke-width="0.82" stroke-linecap="round" opacity="0.62"/>
<path d="M384 254 L393 233 L411 223 L433 217 L459 211 L483 211 L501 216 L521 226 L540 238 L556 260 L568 278 L580 291 L570 285 L552 262 L536 248 L515 240 L495 232 L470 228 L440 232 L412 240 L395 252Z" fill="#b8704a" filter="url(#bl3)" opacity="0.85"/>
<path d="M554.0 257.2 L557.6 256.5 L561.3 254.1 L563.7 252.7 L566.2 252.3 L568.5 250.0 L571.4 247.8 L573.2 247.0 L576.4 246.1" fill="none" stroke="#a86038" stroke-width="1.14" opacity="0.8"/>
<path d="M490.0 212.9 L491.8 209.5 L494.8 207.1 L497.0 204.6 L501.1 203.3 L503.2 200.8 L505.8 199.7 L509.8 197.5 L512.4 195.6" fill="none" stroke="#904e2c" stroke-width="1.44" opacity="0.8"/>
<path d="M578.3 289.2 L581.9 288.2 L584.2 288.0 L586.1 286.7 L587.9 286.7 L590.4 287.4 L593.9 287.2 L596.2 286.6 L597.8 285.6" fill="none" stroke="#c07848" stroke-width="1.01" opacity="0.8"/>
<path d="M394.5 232.2 L397.7 228.2 L400.4 224.4 L403.6 219.8 L405.8 216.6 L406.8 214.0 L408.7 211.0 L409.9 206.5 L411.3 203.8" fill="none" stroke="#904e2c" stroke-width="1.44" opacity="0.8"/>
<path d="M507.1 219.1 L509.0 217.4 L511.9 215.8 L515.2 213.7 L517.3 210.7 L519.2 208.4 L521.7 207.4 L523.6 206.0 L525.6 203.1" fill="none" stroke="#c07848" stroke-width="0.95" opacity="0.8"/>
<path d="M520.0 225.5 L523.1 223.1 L525.7 220.2 L529.1 217.9 L532.4 216.7 L534.3 214.7 L536.9 213.9 L540.2 211.4 L543.1 208.5" fill="none" stroke="#904e2c" stroke-width="1.05" opacity="0.8"/>
<path d="M462.8 211.0 L465.2 208.5 L468.1 205.6 L471.4 202.6 L475.1 199.7 L478.1 196.2 L480.7 194.7 L482.3 192.4 L485.0 190.4" fill="none" stroke="#a86038" stroke-width="1.25" opacity="0.8"/>
<path d="M429.0 218.1 L431.6 214.7 L435.0 210.8 L437.8 207.8 L439.0 203.8 L441.8 200.8 L443.5 197.2 L446.5 195.3 L449.8 192.7" fill="none" stroke="#904e2c" stroke-width="1.23" opacity="0.8"/>
<path d="M526.0 229.1 L529.0 226.4 L531.4 223.5 L533.3 221.8 L535.3 220.8 L539.3 218.1 L543.5 216.7 L545.3 214.8 L547.9 212.7" fill="none" stroke="#a86038" stroke-width="1.39" opacity="0.8"/>
<path d="M497.4 215.0 L499.1 212.8 L501.5 210.9 L504.3 207.8 L508.4 205.4 L512.3 202.8 L514.3 199.8 L516.3 198.4 L520.0 196.1" fill="none" stroke="#c07848" stroke-width="1.30" opacity="0.8"/>
<path d="M446.5 213.9 L449.0 211.5 L451.7 209.4 L454.8 206.8 L458.0 204.2 L461.6 201.5 L464.7 198.8 L467.5 197.0 L469.7 193.5" fill="none" stroke="#904e2c" stroke-width="1.20" opacity="0.8"/>
<path d="M438.6 215.7 L440.7 212.5 L442.7 208.5 L446.0 205.3 L449.0 201.9 L452.7 198.6 L454.9 195.7 L457.4 193.6 L459.2 191.1" fill="none" stroke="#c07848" stroke-width="1.49" opacity="0.8"/>
<path d="M564.6 273.0 L567.5 272.5 L570.9 272.2 L575.0 270.1 L577.2 268.6 L580.9 268.8 L583.2 268.1 L587.0 268.0 L590.0 268.4" fill="none" stroke="#904e2c" stroke-width="0.86" opacity="0.8"/>
<path d="M575.9 286.6 L578.3 286.1 L581.8 284.9 L584.2 285.3 L587.7 286.0 L589.5 285.9 L592.8 286.7 L596.1 286.0 L597.8 285.1" fill="none" stroke="#c07848" stroke-width="1.28" opacity="0.8"/>
<path d="M523.1 227.4 L525.8 224.2 L528.5 222.1 L530.7 221.0 L532.6 218.5 L534.6 217.1 L536.5 215.8 L539.6 214.3 L543.5 211.8" fill="none" stroke="#904e2c" stroke-width="0.84" opacity="0.8"/>
<path d="M407.8 224.8 L410.3 222.3 L411.7 218.0 L413.8 215.2 L416.2 212.1 L417.5 208.0 L420.0 205.2 L421.4 200.9 L423.4 197.4" fill="none" stroke="#c07848" stroke-width="1.20" opacity="0.8"/>
<path d="M518.1 224.5 L519.8 221.3 L523.5 219.4 L527.7 217.4 L531.1 214.7 L534.7 213.7 L538.5 211.1 L541.9 208.7 L544.2 208.3" fill="none" stroke="#a86038" stroke-width="0.81" opacity="0.8"/>
<path d="M561.5 268.2 L564.8 266.7 L568.0 264.6 L570.3 263.5 L572.3 262.9 L576.5 263.1 L579.2 261.3 L582.1 259.4 L586.0 258.8" fill="none" stroke="#c07848" stroke-width="1.26" opacity="0.8"/>
<path d="M571.2 281.5 L573.8 280.2 L576.0 279.9 L578.6 278.4 L580.8 277.5 L584.5 276.7 L588.1 276.1 L591.1 275.1 L593.6 275.3" fill="none" stroke="#a86038" stroke-width="1.30" opacity="0.8"/>
<path d="M435.7 216.4 L437.2 212.0 L438.5 208.4 L440.7 204.5 L444.0 201.8 L447.2 197.9 L450.8 193.7 L452.3 189.6 L455.2 186.4" fill="none" stroke="#a86038" stroke-width="1.38" opacity="0.8"/>
<path d="M563.2 270.8 L565.0 268.4 L567.6 267.1 L569.4 265.6 L571.5 265.4 L573.7 264.0 L575.9 263.9 L577.9 262.9 L580.1 261.5" fill="none" stroke="#a86038" stroke-width="1.30" opacity="0.8"/>
<path d="M545.8 246.0 L548.5 245.5 L552.6 244.2 L554.9 241.6 L558.0 240.1 L561.9 240.0 L565.7 238.1 L569.8 237.2 L571.7 235.4" fill="none" stroke="#904e2c" stroke-width="1.32" opacity="0.8"/>
</g>
<path d="M538 236 C548 248 554 262 556 278 C559 295 556 310 561 325 C564 336 569 343 571 352" fill="none" stroke="#7a4428" stroke-width="1.4" opacity="0.85"/>
<path d="M548 245 C556 270 560 300 560 320" fill="none" stroke="#b07048" stroke-width="1" opacity="0.6"/>
<path d="M589 322 C589 308 594 292 603 286 C611 282 621 285 626 294 C630 304 628 322 622 338 C617 350 610 357 602 357 C595 356 591 348 590 336 Z" fill="#f0c0a6"/>
<path d="M600 300 C608 292 618 296 619 310 C619 326 614 340 606 344 C603 334 604 322 600 312 Z" fill="#d8866c" opacity="0.75"/>
<path d="M598 292 C606 284 618 285 623 293" fill="none" stroke="#fbe2d6" stroke-width="2" opacity="0.8"/>
<path d="M589 322 C589 308 594 292 603 286 C611 282 621 285 626 294 C630 304 628 322 622 338 C617 350 610 357 602 357" fill="none" stroke="#6a4434" stroke-width="1"/>
<ellipse cx="599" cy="365" rx="12.5" ry="12" fill="url(#ringG)"/>
<path d="M589 362 C594 352 604 352 610 362 M592 368 L596 374 M599 368 L599 376 M606 368 L602 374" fill="none" stroke="#5a4428" stroke-width="0.9"/>
<ellipse cx="597" cy="359" rx="5" ry="3" fill="#f4ecd0" opacity="0.7" filter="url(#bl05)"/>
<path d="M456 287 C466 274 482 267 500 265 C515 264 528 267 536 272 C520 270 500 272 484 276 C474 280 464 285 458 291 Z" fill="#7a4a2e" filter="url(#bl05)"/>
<path d="M462 281 C478 271 500 267 528 270" fill="none" stroke="#9a6646" stroke-width="3" opacity="0.7"/>
<path d="M386 296 C396 288 414 287 434 298 C420 296 402 296 388 302 Z" fill="#7a4a30" filter="url(#bl05)"/>
<path d="M388 295 C400 290 416 290 432 297" fill="none" stroke="#94603e" stroke-width="4" opacity="0.75"/>
<ellipse cx="498" cy="292" rx="27" ry="9" fill="#5e463e" filter="url(#bl3)" opacity="0.75"/>
<ellipse cx="496" cy="308" rx="20" ry="4" fill="#a87060" filter="url(#bl1)" opacity="0.6"/>
<path d="M475 299 C485 289 505 287 517 296 C507 304 487 306 475 299Z" fill="#f2eceb"/>
<circle cx="493" cy="297" r="7.2" fill="#6e84a4"/><circle cx="493" cy="297" r="4.5" fill="#3c4c6a" opacity="0.6"/><circle cx="493" cy="297" r="2.6" fill="#121218"/><circle cx="491" cy="295" r="1" fill="#fff"/>
<path d="M472 300 C483 286 506 283 521 293" fill="none" stroke="#261a18" stroke-width="3.6"/>
<path d="M474 296 C484 285 506 283 522 292" fill="none" stroke="#3a2a26" stroke-width="5" opacity="0.45" filter="url(#bl1)"/>
<path d="M477 302 C490 308 506 306 517 298" fill="none" stroke="#5a3a32" stroke-width="1.8" opacity="0.85"/>
<ellipse cx="420" cy="312" rx="22" ry="10" fill="#5e463e" filter="url(#bl3)" opacity="0.7"/>
<ellipse cx="424" cy="328" rx="16" ry="4" fill="#a87060" filter="url(#bl1)" opacity="0.55"/>
<path d="M407 318 C414 309 430 307 439 314 C430 323 416 325 407 318Z" fill="#efe8e6"/>
<circle cx="422" cy="317" r="6.6" fill="#6e84a4"/><circle cx="422" cy="317" r="4" fill="#3c4c6a" opacity="0.6"/><circle cx="422" cy="317" r="2.3" fill="#121218"/><circle cx="420" cy="315" r="0.9" fill="#fff"/>
<path d="M403 319 C411 305 432 302 443 313" fill="none" stroke="#261a18" stroke-width="3.3"/>
<path d="M404 316 C412 303 432 300 444 311" fill="none" stroke="#3a2a26" stroke-width="5" opacity="0.45" filter="url(#bl1)"/>
<path d="M409 323 C418 330 432 328 439 318" fill="none" stroke="#5a3a32" stroke-width="1.6" opacity="0.85"/>
<path d="M437 357 C434 364 435 374 441 377 C446 375 447 368 446 362 C445 359 441 356 437 357Z" fill="#9a6448" filter="url(#bl05)" opacity="0.9"/>
<path d="M434 345 C436 354 442 358 448 360" fill="none" stroke="#c07a60" stroke-width="1.2" opacity="0.7"/>
<path d="M470 340 C476 348 475 356 468 360" fill="none" stroke="#d89070" stroke-width="1.5" opacity="0.6" filter="url(#bl05)"/>
<path d="M446 338 C440 350 446 358 457 358 C468 358 476 352 474 342 C468 334 452 332 446 338Z" fill="#f7d2bc" filter="url(#bl3)" opacity="0.6"/>
<path d="M450 352 C455 349 463 350 467 355 C462 356 455 356 450 352Z" fill="#5a2c24"/>
<path d="M445 305 C452 318 455 330 452 340" fill="none" stroke="#d8a088" stroke-width="2" opacity="0.5" filter="url(#bl1)"/>
<ellipse cx="515" cy="323" rx="7" ry="4" fill="#fff4ee" filter="url(#bl1)" opacity="0.95"/>
<path d="M445 401 C447 392 450 384 455 382 C459 380 462 379 465 380 C470 380 474 382 477 382 C482 381 492 383 502 387 C490 389 470 393 455 398 Z" fill="#b8544a"/>
<path d="M446 392 C448 386 452 382 457 381 C458 387 454 395 446 401Z" fill="#98403a" opacity="0.8"/>
<path d="M446 402 C462 395 484 390 502 387 C496 395 482 404 468 409 C458 413 448 410 446 402Z" fill="#f0a08a"/>
<path d="M446 401 C460 394 482 389 502 387 C488 390 470 396 450 403Z" fill="#3a1616"/>
<path d="M457 396 C466 392 476 390 485 389 C478 392 468 395 459 398Z" fill="#d8c4b4"/>
<path d="M462 415 C470 415 478 413 482 411" fill="none" stroke="#b07058" stroke-width="2" opacity="0.55" filter="url(#bl05)"/>
<circle cx="525" cy="558" r="1.1" fill="#c07a4a"/>
<circle cx="553" cy="545" r="0.7" fill="#c07a4a"/>
<circle cx="562" cy="540" r="1.3" fill="#c07a4a"/>
<circle cx="480" cy="602" r="0.9" fill="#c07a4a"/>
<circle cx="485" cy="615" r="1.2" fill="#c07a4a"/>
<circle cx="470" cy="630" r="1.0" fill="#c07a4a"/>
<circle cx="500" cy="620" r="1.0" fill="#c07a4a"/>
<circle cx="515" cy="590" r="1.0" fill="#c07a4a"/>
<circle cx="455" cy="628" r="1.3" fill="#c07a4a"/>
<circle cx="355" cy="604" r="1.2" fill="#c07a4a"/>
<circle cx="520" cy="634" r="0.9" fill="#c07a4a"/>
<circle cx="490" cy="585" r="1.2" fill="#c07a4a"/>
<circle cx="540" cy="610" r="0.8" fill="#c07a4a"/>
<circle cx="470" cy="590" r="0.9" fill="#c07a4a"/>
<circle cx="505" cy="600" r="0.9" fill="#c07a4a"/>
</svg>
<div class="a" style="left:765px;top:152px;width:140px;height:258px;background:#535353;"></div>
<div class="a" style="left:765px;top:152px;width:140px;height:7px;background:#3e3e3e;"></div>
<div class="t" style="left:889px;top:151px;font-size:5px;line-height:7px;color:#ccc;line-height:7px">»</div>
<svg class="a" style="left:898px;top:153px" width="5" height="5"><path d="M0.5 0.5 L4.5 4.5 M4.5 0.5 L0.5 4.5" stroke="#ccc" stroke-width="0.9"/></svg>
<div class="a" style="left:765px;top:159px;width:140px;height:13px;background:#464646;"></div>
<div class="a" style="left:765px;top:159px;width:59px;height:13px;background:#535353;"></div>
<div class="t" style="left:768px;top:161px;font-size:5.5px;line-height:7.5px;color:#e4e4e4;line-height:9px">PROACTIONS - Clone</div>
<div class="a" style="left:896px;top:163px;width:4px;height:1px;background:#aaa;"></div>
<div class="a" style="left:896px;top:165px;width:4px;height:1px;background:#aaa;"></div>
<div class="a" style="left:896px;top:167px;width:4px;height:1px;background:#aaa;"></div>
<div class="t" style="left:791px;top:184px;font-size:6px;line-height:8px;color:#a8a8a8;">HOME</div>
<div class="t" style="left:864px;top:184px;font-size:6px;line-height:8px;color:#f0f0f0;font-weight:bold">编辑</div>
<div class="a" style="left:765px;top:195px;width:140px;height:1px;background:#474747;"></div>
<div class="a" style="left:834px;top:194px;width:71px;height:2px;background:#4a7bb0;"></div>
<div class="t" style="left:774px;top:205px;font-size:6px;line-height:8px;color:#8a8a8a;">卡通化类型</div>
<div class="a" style="left:774px;top:220px;width:121px;height:17px;border:1.3px solid #b4b4b4;border-radius:8.5px"></div>
<div class="t" style="left:786px;top:220px;height:17px;line-height:17px;font-size:6px;color:#e8e8e8">选择类型</div>
<svg class="a" style="left:878px;top:226px" width="8" height="5"><path d="M1 1 L4 4 L7 1" stroke="#ddd" fill="none" stroke-width="1.2"/></svg>
<div class="a" style="left:765px;top:246px;width:140px;height:1px;background:#4c4c4c;"></div>
<div class="t" style="left:774px;top:254px;font-size:6px;line-height:8px;color:#8a8a8a;">热门卡通</div>
<div class="a" style="left:774px;top:270px;width:58px;height:17px;border:1.3px solid #b4b4b4;border-radius:8.5px"></div>
<div class="t" style="left:774px;top:270px;width:58px;height:17px;line-height:17px;font-size:6px;color:#eeeeee;text-align:center">大眼睛</div>
<div class="a" style="left:837px;top:270px;width:58px;height:17px;border:1.3px solid #b4b4b4;border-radius:8.5px"></div>
<div class="t" style="left:837px;top:270px;width:58px;height:17px;line-height:17px;font-size:6px;color:#eeeeee;text-align:center">小眼睛</div>
<div class="a" style="left:774px;top:291px;width:58px;height:17px;border:1.3px solid #b4b4b4;border-radius:8.5px"></div>
<div class="t" style="left:774px;top:291px;width:58px;height:17px;line-height:17px;font-size:6px;color:#eeeeee;text-align:center">大嘴巴</div>
<div class="a" style="left:837px;top:291px;width:58px;height:17px;border:1.3px solid #b4b4b4;border-radius:8.5px"></div>
<div class="t" style="left:837px;top:291px;width:58px;height:17px;line-height:17px;font-size:6px;color:#eeeeee;text-align:center">小嘴巴</div>
<div class="a" style="left:774px;top:312px;width:58px;height:17px;border:1.3px solid #b4b4b4;border-radius:8.5px"></div>
<div class="t" style="left:774px;top:312px;width:58px;height:17px;line-height:17px;font-size:6px;color:#eeeeee;text-align:center">微笑</div>
<div class="a" style="left:837px;top:312px;width:58px;height:17px;border:1.3px solid #b4b4b4;border-radius:8.5px"></div>
<div class="t" style="left:837px;top:312px;width:58px;height:17px;line-height:17px;font-size:6px;color:#eeeeee;text-align:center">伤心</div>
<div class="a" style="left:765px;top:338px;width:140px;height:1px;background:#4c4c4c;"></div>
<div class="t" style="left:774px;top:346px;font-size:6px;line-height:8px;color:#8a8a8a;">高级卡通化</div>
<div class="a" style="left:774px;top:361px;width:121px;height:17px;border:1.3px solid #b4b4b4;border-radius:8.5px"></div>
<div class="t" style="left:774px;top:361px;width:121px;height:17px;line-height:17px;font-size:6px;color:#eeeeee;text-align:center">自定义卡通脸</div>
<div class="a" style="left:765px;top:384px;width:140px;height:1px;background:#4c4c4c;"></div>
<div class="t" style="left:774px;top:392px;font-size:5px;line-height:7px;color:#6e6e6e;">由 ProActions 卡通化插件提供 Clone</div>
<div class="t" style="left:880px;top:392px;font-size:5px;line-height:7px;color:#6e6e6e;">v 1.1.0</div>
<div class="a" style="left:3px;top:30px;width:18px;height:623px;background:#535353;"></div>
<div class="a" style="left:20px;top:30px;width:1px;height:623px;background:#3c3c3c;"></div>
<div class="a" style="left:3px;top:30px;width:18px;height:5px;background:#474747;"></div>
<div class="t" style="left:6px;top:29px;font-size:6px;line-height:8px;color:#aaa;line-height:7px">»</div>
<div class="a" style="left:4px;top:139px;width:15px;height:13px;background:#383838"></div>
<svg class="a" style="left:3px;top:30px" width="18" height="340" viewBox="3 30 18 340">
<g stroke="#cfcfcf" fill="none" stroke-width="1" transform="translate(11 0) scale(0.85 1) translate(-11 0)">
 <!-- move -->
 <path d="M11 45 L11 55 M6 50 L16 50 M9 47 L11 45 L13 47 M9 53 L11 55 L13 53 M8 48 L6 50 L8 52 M14 48 L16 50 L14 52"/>
 <!-- marquee -->
 <rect x="6.5" y="58.5" width="9" height="7" stroke-dasharray="1.5 1.2"/>
 <!-- lasso -->
 <ellipse cx="11" cy="72" rx="4.5" ry="3"/><path d="M8 74 L7 77"/>
 <!-- quick select -->
 <path d="M7 89 L14 82" stroke-width="1.8"/><circle cx="14.5" cy="82" r="1.5" stroke-dasharray="1 1"/>
 <!-- crop -->
 <path d="M8 93 L8 102 L15 102 M6 95 L14 95 L14 104"/>
 <!-- frame -->
 <rect x="6.5" y="106.5" width="9" height="7"/><path d="M6.5 106.5 L15.5 113.5 M15.5 106.5 L6.5 113.5"/>
 <!-- eyedropper -->
 <path d="M7 126 L14 119" stroke-width="1.8"/><path d="M13 117 L16 120"/>
 <!-- healing -->
 <path d="M7 137 L15 129" stroke-width="3"/>
 <!-- brush -->
 <path d="M7 150 L14 141" stroke-width="1.3"/><circle cx="7.5" cy="149.5" r="1.3" fill="#d8d8d8"/>
 <!-- stamp -->
 <circle cx="11" cy="155" r="2" fill="#d8d8d8"/><path d="M11 157 L11 159 M6.5 160.5 L15.5 160.5" stroke-width="2"/>
 <!-- history brush -->
 <path d="M7 174 L14 166" stroke-width="1.3"/><path d="M6 168 L9 165"/>
 <!-- eraser -->
 <path d="M7 185 L13 179 L16 182 L10 188 Z" fill="#d8d8d8"/>
 <!-- gradient -->
 <rect x="6.5" y="190.5" width="9" height="8" fill="#888"/>
 <!-- blur -->
 <path d="M8 210 L13 203 L15 205 Z" fill="#d8d8d8"/><path d="M7 212 L9 210"/>
 <!-- dodge -->
 <circle cx="12" cy="217" r="3" fill="#d8d8d8"/><path d="M10 219 L6 224" stroke-width="1.5"/>
 <!-- pen -->
 <path d="M8 236 L11 228 L14 236 L11 237 Z"/><path d="M7 236 L6 238"/>
 <!-- type -->
 <path d="M7 239.5 L15 239.5 M11 239.5 L11 248" stroke-width="1.8"/>
 <!-- path select -->
 <path d="M8 250 L8 260 L10.5 257.5 L13 261 L14 260 L12 256.5 L15 256.5 Z" fill="#d8d8d8"/>
 <!-- rect shape -->
 <rect x="7.5" y="264.5" width="7" height="7" rx="1.5" fill="none"/>
 <!-- hand -->
 <path d="M8 281 C8 278 9 277 9.5 279 L9.5 276 C9.5 275 11 275 11 276 L11 275.5 C11 274.5 12.5 274.5 12.5 275.5 L12.5 277 C12.5 276 14 276 14 277 L14 282 C14 284 12.5 285 11 285 C9.5 285 8 284 8 281Z" fill="#cfcfcf"/>
 <!-- zoom -->
 <circle cx="10.5" cy="290" r="3.5" stroke-width="1.5"/><path d="M13 292.5 L16 295.5" stroke-width="1.8"/>
</g>
<g fill="#d8d8d8">
 <circle cx="7" cy="304" r="1"/><circle cx="11" cy="304" r="1"/><circle cx="15" cy="304" r="1"/>
</g>
<path d="M5 314 L8 312 L8 316 Z" fill="#ccc"/><path d="M14 312 L17 315 L15 317" stroke="#ccc" fill="none"/>
<rect x="9.5" y="323.5" width="8" height="8" fill="#f2f2f2" stroke="#333"/>
<rect x="5.5" y="319.5" width="7" height="7" fill="#000" stroke="#aaa"/>
<rect x="6.5" y="338.5" width="9" height="7" fill="none" stroke="#ccc" stroke-width="1.1"/><circle cx="11" cy="342" r="2" fill="none" stroke="#ccc"/>
<rect x="8.5" y="350.5" width="7" height="5" fill="none" stroke="#ccc"/><rect x="5.5" y="353.5" width="7" height="5" fill="#535353" stroke="#ccc"/>
</svg>

<div class="a" style="left:21px;top:645px;width:945px;height:8px;background:#525252;"></div>
<div class="a" style="left:3px;top:645px;width:18px;height:8px;background:#535353;"></div>
<div class="t" style="left:27px;top:645px;font-size:6px;line-height:8px;color:#cfcfcf;line-height:8px">56%</div>
<div class="a" style="left:43px;top:645px;width:64px;height:8px;background:#4c4c4c;"></div>
<div class="t" style="left:61px;top:645px;font-size:6px;line-height:8px;color:#bdbdbd;line-height:8px">文档:5.60M/13.2M</div>
<div class="t" style="left:124px;top:645px;font-size:7px;line-height:9px;color:#aaa;line-height:8px">›</div>
<div class="a" style="left:958px;top:30px;width:8px;height:615px;background:#4a4a4a;"></div>
<div class="a" style="left:966px;top:37px;width:18px;height:616px;background:#535353;"></div>
<div class="a" style="left:966px;top:37px;width:1px;height:616px;background:#3f3f3f;"></div>
<div class="a" style="left:984px;top:30px;width:2px;height:623px;background:#3a3a3a;"></div>
<div class="t" style="left:977px;top:30px;font-size:5px;line-height:7px;color:#bbb;line-height:6px">‹‹</div>
<div class="a" style="left:966px;top:37px;width:18px;height:171px;background:#535353;"></div>
<div class="a" style="left:967px;top:68px;width:17px;height:1px;background:#454545;"></div>
<div class="a" style="left:967px;top:101px;width:17px;height:1px;background:#454545;"></div>
<div class="a" style="left:967px;top:133px;width:17px;height:1px;background:#454545;"></div>
<div class="a" style="left:967px;top:151px;width:17px;height:1px;background:#454545;"></div>
<div class="a" style="left:967px;top:173px;width:17px;height:1px;background:#454545;"></div>
<div class="a" style="left:967px;top:190px;width:17px;height:1px;background:#454545;"></div>
<div class="a" style="left:967px;top:151px;width:17px;height:22px;background:#5a4a4a;"></div>
<svg class="a" style="left:966px;top:37px" width="18" height="171" viewBox="966 37 18 171">
<g fill="none" stroke="#dcdcdc" stroke-width="1.2">
<path d="M973 44 L975 44 M973 47 L975 47 M973 50 L975 50" stroke-width="2"/><path d="M977 43 C980 45 980 49 977 51"/>
<path d="M972 55 L972 64 L980 59.5 Z" fill="#dcdcdc"/>
<path d="M972 83 L979 76" stroke-width="1.5"/><path d="M971 76 L974 76 M971 78 L973 78" stroke-width="1"/>
<path d="M971 89 L979 89 M971 94 L979 94" stroke-width="1.5"/><circle cx="978" cy="89" r="1.2" fill="#dcdcdc"/><circle cx="978" cy="94" r="1.2" fill="#dcdcdc"/>
<path d="M971 115 L974 107 L977 115 M972.5 112 L975.5 112 M979 106 L979 116"/>
<path d="M978 119 L978 128 M976 119 L976 128 M976 119 C972 119 972 124 976 124" fill="#dcdcdc"/>
<circle cx="975" cy="143" r="4.5" fill="#eeeeee" stroke="none"/>
<path d="M971.5 158.5 L978.5 165.5 M978.5 158.5 L971.5 165.5" stroke-width="1.5"/>
<path d="M975 176 L975 186 M970 181 L980 181 M971.5 177.5 L978.5 184.5 M978.5 177.5 L971.5 184.5"/>
<rect x="971" y="197" width="8" height="6" stroke-width="1"/><path d="M972 202 L974 199 L976 201 L978 198"/>
</g></svg>
<div class="a" style="left:986px;top:30px;width:211px;height:623px;background:#535353;"></div>
<div class="a" style="left:1196px;top:30px;width:1px;height:623px;background:#3a3a3a;"></div>
<div class="a" style="left:986px;top:30px;width:210px;height:19px;background:#424242;"></div>
<div class="a" style="left:986px;top:31px;width:20px;height:18px;background:#4b4b4b;"></div>
<div class="t" style="left:990px;top:36px;font-size:6px;line-height:8px;color:#e0e0e0;">颜色</div>
<div class="t" style="left:1010px;top:36px;font-size:6px;line-height:8px;color:#a8a8a8;">色板</div>
<div class="t" style="left:1190px;top:31px;font-size:5px;line-height:7px;color:#bbb;line-height:5px">»</div>
<div class="a" style="left:1189px;top:41px;width:6px;height:3px;background:#cfcfcf;"></div>
<div class="a" style="left:995px;top:58px;width:9px;height:9px;background:#f4f4f4;"></div>
<div class="a" style="left:990px;top:53px;width:9px;height:9px;background:#000;outline:1px solid #b0b0b0"></div>
<div class="a" style="left:1007px;top:52px;width:165px;height:125px;background:linear-gradient(to bottom,rgba(0,0,0,0) 0%,rgba(0,0,0,0.12) 30%,rgba(0,0,0,0.4) 58%,rgba(0,0,0,0.75) 82%,#000 100%),linear-gradient(to right,#fff,#ff1a00)"></div>
<div class="a" style="left:1179px;top:52px;width:10px;height:125px;background:linear-gradient(to bottom,#ff1010 0%,#ff10ff 17%,#2020ff 33%,#10ffff 50%,#10ff10 67%,#ffff10 83%,#ff1010 100%)"></div>
<svg class="a" style="left:1005px;top:175px" width="6" height="6"><path d="M1 1 L4 4" stroke="#ccc"/></svg>
<svg class="a" style="left:1175px;top:174px" width="5" height="6"><path d="M0 0 L4 3 L0 6Z" fill="#eee"/></svg>
<div class="a" style="left:986px;top:188px;width:210px;height:13px;background:#424242;"></div>
<div class="a" style="left:986px;top:188px;width:21px;height:13px;background:#535353;"></div>
<div class="t" style="left:990px;top:190px;font-size:6px;line-height:8px;color:#e0e0e0;">属性</div>
<div class="t" style="left:1011px;top:190px;font-size:6px;line-height:8px;color:#a8a8a8;">调整</div>
<div class="t" style="left:1031px;top:190px;font-size:6px;line-height:8px;color:#a8a8a8;">样式</div>
<div class="a" style="left:1190px;top:193px;width:5px;height:3px;background:#cfcfcf;"></div>
<div class="a" style="left:991px;top:205px;width:9px;height:9px;background:#2e2e2e;border:1px solid #777"></div>
<svg class="a" style="left:992px;top:206px" width="8" height="8"><path d="M1 6 L3 3 L5 5 L7 2 L7 7 L1 7Z" fill="#ddd"/></svg>
<div class="t" style="left:1005px;top:205px;font-size:6px;line-height:8px;color:#dcdcdc;">像素图层属性</div>
<div class="a" style="left:986px;top:216px;width:198px;height:1px;background:#474747;"></div>
<div class="a" style="left:1184px;top:217px;width:12px;height:146px;background:#4f4f4f;"></div>
<div class="a" style="left:1190px;top:330px;width:5px;height:22px;background:#666;"></div>
<div class="t" style="left:989px;top:223px;font-size:6px;line-height:8px;color:#9a9a9a;">W:</div>
<div class="a" style="left:1001px;top:222px;width:25px;height:11px;background:#4d4d4d;"></div>
<div class="t" style="left:1003px;top:223px;font-size:5px;line-height:7px;color:#8a8a8a;">0 像素</div>
<div class="a" style="left:1032px;top:221px;width:10px;height:12px;background:#333333;"></div>
<div class="t" style="left:1033px;top:223px;font-size:8px;line-height:10px;color:#ddd;line-height:8px">∞</div>
<div class="t" style="left:1046px;top:223px;font-size:6px;line-height:8px;color:#9a9a9a;">H:</div>
<div class="a" style="left:1055px;top:222px;width:26px;height:11px;background:#4d4d4d;"></div>
<div class="t" style="left:1057px;top:223px;font-size:5px;line-height:7px;color:#8a8a8a;">0 像素</div>
<div class="t" style="left:991px;top:238px;font-size:6px;line-height:8px;color:#9a9a9a;">X:</div>
<div class="a" style="left:1001px;top:236px;width:25px;height:11px;background:#4d4d4d;"></div>
<div class="t" style="left:1003px;top:238px;font-size:5px;line-height:7px;color:#8a8a8a;">0 像素</div>
<div class="t" style="left:1046px;top:238px;font-size:6px;line-height:8px;color:#9a9a9a;">Y:</div>
<div class="a" style="left:1055px;top:236px;width:26px;height:11px;background:#4d4d4d;"></div>
<div class="t" style="left:1057px;top:238px;font-size:5px;line-height:7px;color:#8a8a8a;">0 像素</div>
<div class="a" style="left:986px;top:363px;width:210px;height:15px;background:#424242;"></div>
<div class="a" style="left:986px;top:364px;width:20px;height:14px;background:#535353;"></div>
<div class="t" style="left:990px;top:366px;font-size:6px;line-height:8px;color:#e0e0e0;">图层</div>
<div class="t" style="left:1008px;top:366px;font-size:6px;line-height:8px;color:#a8a8a8;">通道</div>
<div class="t" style="left:1027px;top:366px;font-size:6px;line-height:8px;color:#a8a8a8;">路径</div>
<div class="a" style="left:1190px;top:370px;width:5px;height:2px;background:#cfcfcf;"></div>
<div class="a" style="left:986px;top:393px;width:210px;height:1px;background:#474747;"></div>
<div class="a" style="left:988px;top:382px;width:39px;height:10px;background:#3f3f3f;"></div>
<svg class="a" style="left:990px;top:384px" width="7" height="7"><circle cx="3" cy="3" r="2" stroke="#ddd" fill="none" stroke-width="1"/><path d="M4.5 4.5 L6.5 6.5" stroke="#ddd"/></svg>
<div class="t" style="left:998px;top:382px;font-size:6px;line-height:8px;color:#dedede;line-height:10px">类型</div>
<svg class="a" style="left:1021px;top:386px" width="5" height="3"><path d="M0.5 0.5 L2.5 2.5 L4.5 0.5" stroke="#888" fill="none" stroke-width="0.9"/></svg>
<svg class="a" style="left:1032px;top:380px" width="70" height="13"><g fill="none" stroke="#d8d8d8" stroke-width="1">
<rect x="1.5" y="2.5" width="7" height="6"/><circle cx="18" cy="6" r="3"/><path d="M25 3 L31 3 M28 3 L28 9" stroke-width="1.5"/>
<rect x="36.5" y="2.5" width="6" height="7"/><path d="M48 2 L52 2 L53 5 L53 10 L48 10Z"/><circle cx="61" cy="4" r="2" fill="#eee"/></g></svg>
<div class="a" style="left:986px;top:406px;width:210px;height:1px;background:#474747;"></div>
<div class="t" style="left:991px;top:397px;font-size:6px;line-height:8px;color:#8a8a8a;">正常</div>
<div class="t" style="left:1043px;top:397px;font-size:6px;line-height:8px;color:#7a7a7a;">不透明度:</div>
<div class="a" style="left:1069px;top:396px;width:24px;height:9px;background:#4e4e4e;"></div>
<div class="t" style="left:1071px;top:397px;font-size:5px;line-height:7px;color:#777;">100%</div>
<div class="t" style="left:989px;top:409px;font-size:6px;line-height:8px;color:#8a8a8a;">锁定:</div>
<svg class="a" style="left:1000px;top:408px" width="60" height="10"><g fill="none" stroke="#9a9a9a" stroke-width="1">
<rect x="1.5" y="1.5" width="6" height="6"/><path d="M12 8 L17 2"/><path d="M24 1 L24 9 M20 5 L28 5"/><rect x="32.5" y="3.5" width="6" height="5"/><rect x="44.5" y="4.5" width="6" height="4"/><path d="M46 4 L46 2 L49 2 L49 4"/></g></svg>
<div class="t" style="left:1058px;top:409px;font-size:6px;line-height:8px;color:#8a8a8a;">填充:</div>
<div class="a" style="left:1069px;top:408px;width:24px;height:9px;background:#4e4e4e;"></div>
<div class="t" style="left:1071px;top:409px;font-size:5px;line-height:7px;color:#777;">100%</div>
<div class="a" style="left:986px;top:418px;width:204px;height:1px;background:#4a4a4a;"></div>
<div class="a" style="left:999px;top:421px;width:1px;height:20px;background:#464646;"></div>
<div class="a" style="left:986px;top:440px;width:203px;height:1px;background:#464646;"></div>
<div class="a" style="left:1001px;top:424px;width:11px;height:14px;background:#ff1a10;border:1px solid #333"></div>
<div class="t" style="left:1015px;top:427px;font-size:6px;line-height:8px;color:#e8e8e8;">prefactions</div>
<div class="a" style="left:999px;top:441px;width:1px;height:20px;background:#464646;"></div>
<div class="a" style="left:986px;top:460px;width:203px;height:1px;background:#464646;"></div>
<svg class="a" style="left:989px;top:447px" width="9" height="8"><path d="M0.5 4 C2.5 1 6.5 1 8.5 4 C6.5 7 2.5 7 0.5 4Z" fill="#eee"/><circle cx="4.5" cy="4" r="1.5" fill="#555"/></svg>
<svg class="a" style="left:1002px;top:450px" width="5" height="3"><path d="M0.5 0.5 L2.5 2.5 L4.5 0.5" stroke="#bbb" fill="none" stroke-width="0.9"/></svg>
<div class="a" style="left:1007px;top:448px;width:7px;height:5px;background:#e8e8e8;"></div>
<div class="a" style="left:1016px;top:448px;width:4px;height:7px;background:#777;border-radius:2px"></div>
<div class="a" style="left:1023px;top:444px;width:10px;height:15px;background:#ffffff;border:1px solid #333"></div>
<div class="t" style="left:1037px;top:447px;font-size:6px;line-height:8px;color:#d8d8d8;">CLONE</div>
<div class="a" style="left:987px;top:460px;width:12px;height:20px;background:#4a73aa;"></div>
<div class="a" style="left:999px;top:460px;width:1px;height:20px;background:#464646;"></div>
<div class="a" style="left:986px;top:480px;width:203px;height:1px;background:#464646;"></div>
<svg class="a" style="left:989px;top:466px" width="9" height="8"><path d="M0.5 4 C2.5 1 6.5 1 8.5 4 C6.5 7 2.5 7 0.5 4Z" fill="#eee"/><circle cx="4.5" cy="4" r="1.5" fill="#555"/></svg>
<div class="t" style="left:1012px;top:466px;font-size:5px;line-height:7px;color:#ccc;">↓</div>
<div class="a" style="left:1017px;top:462px;width:10px;height:16px;background:#fbf4ef;border:1px solid #333"><div class="a" style="left:2px;top:3px;width:5px;height:6px;border-radius:50%;background:#d8a080"></div><div class="a" style="left:2px;top:1px;width:6px;height:3px;border-radius:3px 3px 0 0;background:#5a3a2a"></div><div class="a" style="left:2px;top:9px;width:6px;height:6px;background:#eec0a8"></div></div>
<div class="a" style="left:1029px;top:467px;width:3px;height:6px;background:#888;border-radius:1px"></div>
<div class="a" style="left:1034px;top:462px;width:10px;height:16px;background:#ffffff;border:1px solid #333"></div>
<div class="t" style="left:1048px;top:466px;font-size:5.5px;line-height:7.5px;color:#dcdcdc;">Stroke color</div>
<div class="a" style="left:987px;top:480px;width:12px;height:20px;background:#5d8a3c;"></div>
<div class="a" style="left:999px;top:480px;width:1px;height:20px;background:#464646;"></div>
<div class="a" style="left:986px;top:499px;width:203px;height:1px;background:#464646;"></div>
<div class="t" style="left:1012px;top:486px;font-size:5px;line-height:7px;color:#ccc;">↓</div>
<div class="a" style="left:1017px;top:482px;width:10px;height:16px;background:#f8f8f8;border:1px solid #333"><div class="a" style="left:2px;top:2px;width:5px;height:7px;border:1px solid #777;border-radius:50%"></div></div>
<div class="a" style="left:1029px;top:487px;width:3px;height:6px;background:#888;border-radius:1px"></div>
<div class="a" style="left:1034px;top:482px;width:10px;height:16px;background:#ffffff;border:1px solid #333"></div>
<div class="t" style="left:1048px;top:486px;font-size:5.5px;line-height:7.5px;color:#dcdcdc;">Cartoon stroke - More details</div>
<div class="a" style="left:987px;top:500px;width:12px;height:20px;background:#5d8a3c;"></div>
<div class="a" style="left:999px;top:500px;width:1px;height:20px;background:#464646;"></div>
<div class="a" style="left:986px;top:519px;width:203px;height:1px;background:#464646;"></div>
<svg class="a" style="left:989px;top:506px" width="9" height="8"><path d="M0.5 4 C2.5 1 6.5 1 8.5 4 C6.5 7 2.5 7 0.5 4Z" fill="#eee"/><circle cx="4.5" cy="4" r="1.5" fill="#555"/></svg>
<div class="t" style="left:1012px;top:506px;font-size:5px;line-height:7px;color:#ccc;">↓</div>
<div class="a" style="left:1017px;top:502px;width:10px;height:16px;background:#f8f8f8;border:1px solid #333"><div class="a" style="left:2px;top:2px;width:5px;height:7px;border:1px solid #777;border-radius:50%"></div></div>
<div class="a" style="left:1029px;top:507px;width:3px;height:6px;background:#888;border-radius:1px"></div>
<div class="a" style="left:1034px;top:502px;width:10px;height:16px;background:#ffffff;border:1px solid #333"></div>
<div class="t" style="left:1048px;top:506px;font-size:5.5px;line-height:7.5px;color:#dcdcdc;">Cartoon stroke - Default</div>
<div class="a" style="left:987px;top:519px;width:12px;height:20px;background:#5d8a3c;"></div>
<div class="a" style="left:999px;top:519px;width:1px;height:20px;background:#464646;"></div>
<div class="a" style="left:986px;top:539px;width:203px;height:1px;background:#464646;"></div>
<svg class="a" style="left:989px;top:525px" width="9" height="8"><path d="M0.5 4 C2.5 1 6.5 1 8.5 4 C6.5 7 2.5 7 0.5 4Z" fill="#eee"/><circle cx="4.5" cy="4" r="1.5" fill="#555"/></svg>
<div class="t" style="left:1012px;top:525px;font-size:5px;line-height:7px;color:#ccc;">↓</div>
<div class="a" style="left:1017px;top:521px;width:10px;height:16px;background:#f8f8f8;border:1px solid #333"><div class="a" style="left:2px;top:2px;width:5px;height:7px;border:1px solid #777;border-radius:50%"></div></div>
<div class="a" style="left:1029px;top:526px;width:3px;height:6px;background:#888;border-radius:1px"></div>
<div class="a" style="left:1034px;top:521px;width:10px;height:16px;background:#ffffff;border:1px solid #333"></div>
<div class="t" style="left:1048px;top:525px;font-size:5.5px;line-height:7.5px;color:#dcdcdc;">Cartoon stroke - Less details</div>
<div class="a" style="left:987px;top:539px;width:12px;height:20px;background:#5d8a3c;"></div>
<div class="a" style="left:999px;top:539px;width:1px;height:20px;background:#464646;"></div>
<div class="a" style="left:986px;top:558px;width:203px;height:1px;background:#464646;"></div>
<svg class="a" style="left:989px;top:545px" width="9" height="8"><path d="M0.5 4 C2.5 1 6.5 1 8.5 4 C6.5 7 2.5 7 0.5 4Z" fill="#eee"/><circle cx="4.5" cy="4" r="1.5" fill="#555"/></svg>
<div class="a" style="left:1010px;top:541px;width:10px;height:16px;background:#f8f8f8;border:1px solid #333"><div class="a" style="left:2px;top:2px;width:5px;height:7px;border:1px solid #777;border-radius:50%"></div></div>
<div class="a" style="left:1022px;top:546px;width:3px;height:6px;background:#888;border-radius:1px"></div>
<div class="a" style="left:1027px;top:541px;width:10px;height:16px;background:#ffffff;border:1px solid #333"></div>
<div class="t" style="left:1041px;top:545px;font-size:5.5px;line-height:7.5px;color:#dcdcdc;"><u>Cartoon stroke - Basic</u></div>
<div class="a" style="left:987px;top:559px;width:12px;height:20px;background:#b89a10;"></div>
<div class="a" style="left:999px;top:559px;width:1px;height:20px;background:#464646;"></div>
<div class="a" style="left:986px;top:578px;width:203px;height:1px;background:#464646;"></div>
<svg class="a" style="left:989px;top:565px" width="9" height="8"><path d="M0.5 4 C2.5 1 6.5 1 8.5 4 C6.5 7 2.5 7 0.5 4Z" fill="#eee"/><circle cx="4.5" cy="4" r="1.5" fill="#555"/></svg>
<div class="a" style="left:1010px;top:561px;width:10px;height:16px;background:#050505;border:1px solid #333"></div>
<div class="a" style="left:1022px;top:566px;width:3px;height:6px;background:#888;border-radius:1px"></div>
<div class="a" style="left:1027px;top:561px;width:10px;height:16px;background:#ffffff;border:1px solid #333"></div>
<div class="t" style="left:1041px;top:565px;font-size:5.5px;line-height:7.5px;color:#dcdcdc;">Cartoon highlights</div>
<div class="a" style="left:987px;top:578px;width:12px;height:20px;background:#b8720e;"></div>
<div class="a" style="left:999px;top:578px;width:1px;height:20px;background:#464646;"></div>
<div class="a" style="left:986px;top:598px;width:203px;height:1px;background:#464646;"></div>
<div class="a" style="left:1010px;top:580px;width:10px;height:16px;background:#fbf4ef;border:1px solid #333"><div class="a" style="left:2px;top:3px;width:5px;height:6px;border-radius:50%;background:#d8a080"></div><div class="a" style="left:2px;top:1px;width:6px;height:3px;border-radius:3px 3px 0 0;background:#5a3a2a"></div><div class="a" style="left:2px;top:9px;width:6px;height:6px;background:#eec0a8"></div></div>
<div class="a" style="left:1022px;top:585px;width:3px;height:6px;background:#888;border-radius:1px"></div>
<div class="a" style="left:1027px;top:580px;width:10px;height:16px;background:#ffffff;border:1px solid #333"></div>
<div class="t" style="left:1041px;top:584px;font-size:5.5px;line-height:7.5px;color:#dcdcdc;">Basic cartoon - More sharp</div>
<div class="a" style="left:987px;top:598px;width:12px;height:20px;background:#b8720e;"></div>
<div class="a" style="left:999px;top:598px;width:1px;height:20px;background:#464646;"></div>
<div class="a" style="left:986px;top:617px;width:203px;height:1px;background:#464646;"></div>
<svg class="a" style="left:989px;top:604px" width="9" height="8"><path d="M0.5 4 C2.5 1 6.5 1 8.5 4 C6.5 7 2.5 7 0.5 4Z" fill="#eee"/><circle cx="4.5" cy="4" r="1.5" fill="#555"/></svg>
<div class="a" style="left:1010px;top:600px;width:10px;height:16px;background:#fbf4ef;border:1px solid #333"><div class="a" style="left:2px;top:3px;width:5px;height:6px;border-radius:50%;background:#d8a080"></div><div class="a" style="left:2px;top:1px;width:6px;height:3px;border-radius:3px 3px 0 0;background:#5a3a2a"></div><div class="a" style="left:2px;top:9px;width:6px;height:6px;background:#eec0a8"></div></div>
<div class="a" style="left:1022px;top:605px;width:3px;height:6px;background:#888;border-radius:1px"></div>
<div class="a" style="left:1027px;top:600px;width:10px;height:16px;background:#ffffff;border:1px solid #333"></div>
<div class="t" style="left:1041px;top:604px;font-size:5.5px;line-height:7.5px;color:#dcdcdc;">Basic cartoon - Default</div>
<div class="a" style="left:987px;top:618px;width:12px;height:20px;background:#b8720e;"></div>
<div class="a" style="left:999px;top:618px;width:1px;height:20px;background:#464646;"></div>
<div class="a" style="left:986px;top:637px;width:203px;height:1px;background:#464646;"></div>
<svg class="a" style="left:989px;top:624px" width="9" height="8"><path d="M0.5 4 C2.5 1 6.5 1 8.5 4 C6.5 7 2.5 7 0.5 4Z" fill="#eee"/><circle cx="4.5" cy="4" r="1.5" fill="#555"/></svg>
<div class="a" style="left:1010px;top:620px;width:10px;height:16px;background:#fbf4ef;border:1px solid #333"><div class="a" style="left:2px;top:3px;width:5px;height:6px;border-radius:50%;background:#d8a080"></div><div class="a" style="left:2px;top:1px;width:6px;height:3px;border-radius:3px 3px 0 0;background:#5a3a2a"></div><div class="a" style="left:2px;top:9px;width:6px;height:6px;background:#eec0a8"></div></div>
<div class="a" style="left:1022px;top:625px;width:3px;height:6px;background:#888;border-radius:1px"></div>
<div class="a" style="left:1027px;top:620px;width:10px;height:16px;background:#ffffff;border:1px solid #333"></div>
<div class="t" style="left:1041px;top:624px;font-size:5.5px;line-height:7.5px;color:#dcdcdc;">Basic cartoon - Less sharp</div>
<div class="a" style="left:1189px;top:421px;width:7px;height:216px;background:#4a4a4a;"></div>
<div class="a" style="left:1190px;top:428px;width:5px;height:172px;background:#6a6a6a;"></div>
<div class="a" style="left:994px;top:483px;width:27px;height:27px;border-radius:50%;background:rgba(185,190,40,0.38)"></div>
<svg class="a" style="left:1003px;top:492px" width="10" height="14"><path d="M3 1 L5 1 L5 6 L8 6.5 L9 10 L7 13 L3 13 L1 9 L2 7 L3 8Z" fill="#fff" stroke="#222" stroke-width="0.7"/></svg>
<div class="a" style="left:986px;top:637px;width:203px;height:16px;background:#535353;"></div>
<div class="a" style="left:1002px;top:641px;width:14px;height:1px;background:#ddd;"></div>
<div class="a" style="left:1024px;top:641px;width:8px;height:1px;background:#ddd;"></div>
<svg class="a" style="left:1100px;top:641px" width="95" height="11"><g fill="none" stroke="#cfcfcf" stroke-width="1">
<path d="M2 5 L10 5" stroke="#888" stroke-width="3"/><text x="21" y="9" font-size="7" fill="#aaa" stroke="none" font-family="Liberation Sans">fx</text>
<rect x="36.5" y="2.5" width="8" height="6" fill="#ddd"/><circle cx="57" cy="5.5" r="3.5" fill="#ddd"/><rect x="67.5" y="2.5" width="8" height="6" fill="#ddd"/>
<rect x="82.5" y="2.5" width="7" height="7"/></g></svg>
<div class="a" style="left:3px;top:653px;width:1194px;height:19px;background:#454545;"></div>
<svg class="a" style="left:9px;top:657px" width="10" height="10"><g fill="#f0f0f0"><rect x="0" y="0.5" width="4.3" height="4.2"/><rect x="5" y="0" width="5" height="4.7"/><rect x="0" y="5.3" width="4.3" height="4.2"/><rect x="5" y="5.3" width="5" height="4.7"/></g></svg>
<svg class="a" style="left:32px;top:657px" width="11" height="10"><rect x="0" y="1" width="11" height="9" fill="#f2c94c"/><rect x="2" y="5" width="7" height="3" fill="#6ab0e0"/><rect x="0" y="0" width="5" height="2" fill="#e0a830"/></svg>
<div class="a" style="left:55px;top:656px;width:11px;height:11px;border-radius:50%;background:conic-gradient(from 30deg,#e94235 0deg 120deg,#fbbc04 120deg 240deg,#34a853 240deg 360deg)"><div class="a" style="left:3px;top:3px;width:5px;height:5px;border-radius:50%;background:#4285f4;border:1px solid #fff"></div></div>
<div class="a" style="left:78px;top:656px;width:11px;height:11px;border-radius:50%;background:radial-gradient(circle at 50% 30%,#eee 0%,#888 30%,#111 60%)"></div>
<svg class="a" style="left:100px;top:656px" width="11" height="12"><path d="M2 2 L10 1 L9 11 L1 11Z" fill="#9fd0f0"/><path d="M3 4 L8 3.5 M3 6 L8 5.5" stroke="#fff" stroke-width="0.8"/></svg>
<div class="a" style="left:122px;top:656px;width:9px;height:8px;border-radius:50%;background:#3cb043"></div>
<div class="a" style="left:127px;top:660px;width:8px;height:7px;border-radius:50%;background:#e8e8e8"></div>
<div class="a" style="left:140px;top:653px;width:22px;height:18px;background:#5a5a5a;"></div>
<div class="a" style="left:146px;top:657px;width:10px;height:10px;background:#0b2240;border:1px solid #2d7fd0"></div>
<div class="t" style="left:148px;top:657px;font-size:5px;line-height:7px;color:#31a8ff;line-height:9px;font-weight:bold">Ps</div>
<div class="a" style="left:168px;top:656px;width:12px;height:12px;border-radius:50%;background:#111;border:1.3px solid #ddd"><div class="a" style="left:2px;top:2px;width:6px;height:6px;border-radius:50%;background:#e53030"></div></div>
<div class="a" style="left:28px;top:670px;width:19px;height:1px;background:#8ac0d8;"></div>
<div class="a" style="left:51px;top:670px;width:19px;height:1px;background:#8ac0d8;"></div>
<div class="a" style="left:74px;top:670px;width:19px;height:1px;background:#8ac0d8;"></div>
<div class="a" style="left:97px;top:670px;width:19px;height:1px;background:#8ac0d8;"></div>
<div class="a" style="left:120px;top:670px;width:19px;height:1px;background:#8ac0d8;"></div>
<div class="a" style="left:140px;top:670px;width:22px;height:1px;background:#8ac0d8;"></div>
<div class="a" style="left:165px;top:670px;width:19px;height:1px;background:#8ac0d8;"></div>
<svg class="a" style="left:1013px;top:658px" width="8" height="6"><path d="M1 5 L4 2 L7 5" stroke="#ddd" fill="none" stroke-width="1.2"/></svg>
<div class="a" style="left:1024px;top:657px;width:7px;height:8px;background:#b8d4ec;border-radius:2px"></div>
<div class="a" style="left:1036px;top:657px;width:7px;height:8px;background:#3a7cc8;border-radius:2px"></div>
<div class="a" style="left:1047px;top:657px;width:7px;height:8px;background:#d0d0d0;border-radius:3px"></div>
<div class="a" style="left:1058px;top:657px;width:7px;height:8px;background:#8ab8e0;border-radius:1px"></div>
<div class="a" style="left:1081px;top:657px;width:7px;height:8px;background:#bdbdbd;border-radius:1px"></div>
<div class="a" style="left:1069px;top:656px;width:6px;height:9px;border-radius:3px;background:#222"><div class="a" style="left:1px;top:5px;width:4px;height:2px;background:#d03030"></div></div>
<div class="a" style="left:1090px;top:657px;width:6px;height:5px;border-radius:50%;background:#3cb043"></div><div class="a" style="left:1093px;top:660px;width:5px;height:5px;border-radius:50%;background:#ddd"></div>
<svg class="a" style="left:1101px;top:657px" width="8" height="8"><path d="M0 3 L2 3 L4.5 0.5 L4.5 7.5 L2 5 L0 5Z" fill="#ccc"/><path d="M6 2.5 C7 3.5 7 4.5 6 5.5" stroke="#ccc" fill="none" stroke-width="0.8"/></svg>
<div class="t" style="left:1112px;top:655px;font-size:7px;line-height:9px;color:#ddd;line-height:10px">中</div>
<div class="a" style="left:1126px;top:657px;width:7px;height:8px;border:1px solid #ccc"></div>
<div class="t" style="left:1148px;top:653px;font-size:6px;line-height:8px;color:#dcdcdc;line-height:8px">1:03</div>
<div class="t" style="left:1140px;top:662px;font-size:5.5px;line-height:7.5px;color:#dcdcdc;line-height:8px">2023/2/26</div>
<svg class="a" style="left:1177px;top:656px" width="11" height="11"><path d="M1 1 L10 1 L10 8 L4 8 L2 10 L2 8 L1 8Z" stroke="#eee" fill="none" stroke-width="1"/></svg>
<div class="a" style="left:0px;top:672px;width:1200px;height:55px;background:#131315;"></div>
<div class="a" style="left:0px;top:671px;width:1200px;height:1px;background:#222;"></div>
<div class="a" style="left:27px;top:680px;width:1147px;height:2px;background:#3a3a3c;"></div>
<div class="a" style="left:27px;top:679px;width:414px;height:3px;background:#45a02a;border-radius:1px"></div>
<svg class="a" style="left:7px;top:678px" width="13" height="9"><path d="M6 0 L0 4.5 L6 9Z M12 0 L6 4.5 L12 9Z" fill="#6a6a6e"/></svg>
<svg class="a" style="left:1182px;top:678px" width="13" height="9"><path d="M0 0 L6 4.5 L0 9Z M6 0 L12 4.5 L6 9Z" fill="#6a6a6e"/></svg>
<svg class="a" style="left:18px;top:697px" width="110" height="16"><g fill="none" stroke="#aaaaaa" stroke-width="1.3">
<path d="M3 10 L8 4 L13 10Z"/><path d="M3 13 L13 13"/>
<rect x="32" y="2.5" width="12" height="10"/>
<rect x="64" y="2.5" width="11" height="9"/><path d="M67 14 L69.5 11 L72 14"/>
<rect x="94" y="2.5" width="11" height="9"/><path d="M97 14 L99.5 11 L102 14"/>
</g><text x="35.5" y="11" font-size="8" font-weight="bold" fill="#aaa" font-family="Liberation Sans">1</text>
<text x="66" y="9" font-size="5" fill="#aaa" font-family="Liberation Sans">TV</text><text x="96" y="9" font-size="5" fill="#aaa" font-family="Liberation Sans">PC</text></svg>
<div class="t" style="left:142px;top:696px;font-size:15px;line-height:17px;color:#a8a8a8;line-height:18px;transform:scaleX(0.82);transform-origin:0 0">02:10/06:00</div>
<div class="a" style="left:524px;top:700px;width:11px;height:11px;background:#b0b0b0;"></div>
<svg class="a" style="left:553px;top:699px" width="14" height="13"><rect x="0" y="0" width="2" height="13" fill="#aaa"/><path d="M13 0 L3 6.5 L13 13Z" fill="#aaa"/></svg>
<div class="a" style="left:585px;top:690px;width:30px;height:30px;border-radius:50%;border:2px solid #a8a8a8"></div>
<div class="a" style="left:596px;top:697px;width:2px;height:15px;background:#b0b0b0;"></div>
<div class="a" style="left:602px;top:697px;width:2px;height:15px;background:#b0b0b0;"></div>
<svg class="a" style="left:632px;top:699px" width="14" height="13"><rect x="12" y="0" width="2" height="13" fill="#aaa"/><path d="M0 0 L10 6.5 L0 13Z" fill="#aaa"/></svg>
<svg class="a" style="left:663px;top:698px" width="15" height="14"><path d="M0 4 L4 4 L9 0 L9 14 L4 10 L0 10Z" fill="#aaa"/><path d="M11 4 L11 10 M13.5 3 L13.5 11" stroke="#aaa" stroke-width="1"/></svg>
<div class="a" style="left:685px;top:704px;width:52px;height:3px;background:#4cb02a;border-radius:1px"></div>
<div class="a" style="left:1057px;top:699px;width:30px;height:14px;border-radius:7px;border:1px solid #888"></div>
<div class="t" style="left:1062px;top:700px;font-size:9px;line-height:11px;color:#b8b8b8;line-height:12px">倍速</div>
<svg class="a" style="left:1106px;top:698px" width="80" height="16"><g fill="none" stroke="#999" stroke-width="1.2">
<path d="M3 2 C1 4 2 8 5 11 C8 14 11 14 12 12 L10 10 C9 11 8 11 6 9 C4 7 4 6 5 5 L3 2Z"/>
<rect x="33" y="5" width="11" height="9"/><path d="M36 5 L36 3 L41 3 L41 5 M33 9 L44 9"/>
<path d="M62 2 L66 2 L62 2 L62 6 M62 2 L66 6 M74 14 L70 14 M74 14 L74 10 M74 14 L70 10"/>
</g></svg>
<div class="t" style="left:987px;top:673px;font-size:25px;line-height:30px;color:#ffffff;font-weight:bold;transform:scaleX(1.085);transform-origin:0 0">52fanxing.com</div>
</body></html>
